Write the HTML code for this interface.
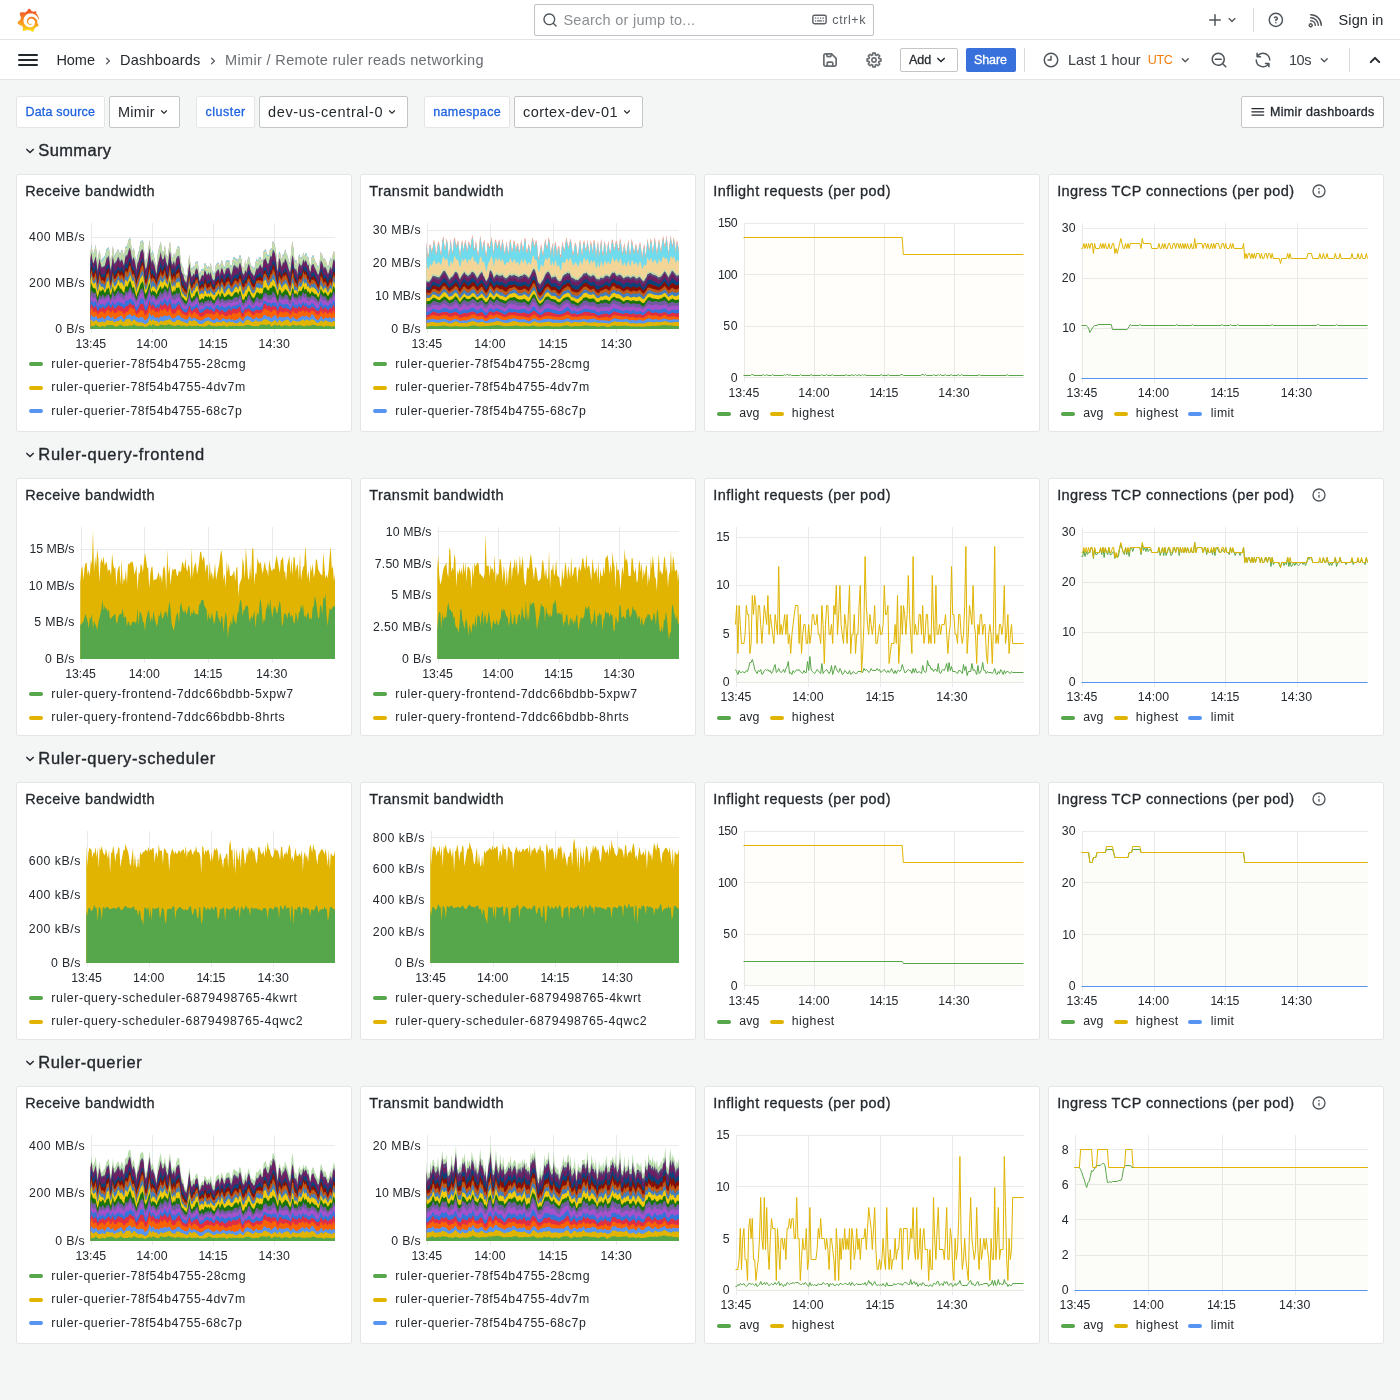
<!DOCTYPE html><html lang="en"><head><meta charset="utf-8"><title>Mimir / Remote ruler reads networking - Dashboards - Grafana</title><style>html,body{margin:0;padding:0}body{width:1400px;height:1400px;background:#f4f5f5;position:relative;overflow:hidden;font-family:"Liberation Sans", Arial, sans-serif;color:#24292e;-webkit-font-smoothing:antialiased}
.abs{position:absolute}svg{position:absolute;overflow:visible}
.panel{position:absolute;width:334px;height:256px;background:#fff;border:1px solid #e4e6e6;border-radius:2px}
.lbl{position:absolute;background:#fff;border:1px solid #e4e6e6;border-radius:2px;box-sizing:border-box}
.sel{position:absolute;background:#fff;border:1px solid #c3c5c8;border-radius:2px;box-sizing:border-box}
.mk{position:absolute;width:14px;height:4px;border-radius:2px}</style></head><body><div id="root" style="position:absolute;left:0;top:0;width:1400px;height:1400px;will-change:transform"><div class="abs" style="left:0;top:0;width:1400px;height:39px;background:#fff;border-bottom:1px solid #e3e4e5"></div><div class="abs" style="left:0;top:40px;width:1400px;height:39px;background:#fff;border-bottom:1px solid #e3e4e5"></div><svg style="left:17px;top:7.5px" width="22.5" height="24.5" viewBox="0 0 351 365" ><defs><linearGradient id="lg" x1="175.5" y1="365" x2="175.5" y2="40" gradientUnits="userSpaceOnUse"><stop offset="0" stop-color="#fde614"/><stop offset="0.35" stop-color="#fba51c"/><stop offset="1" stop-color="#f05a28"/></linearGradient></defs><path d="M342 161.2c-.6-6.1-1.600-13.100-3.600-20.900-2-7.700-5-16.200-9.400-25-4.400-8.800-10.100-17.900-17.500-26.800-2.900-3.500-6.100-6.900-9.500-10.200 5.100-20.300-6.200-37.900-6.200-37.900-19.500-1.200-31.900 6.100-36.500 9.400-.8-.3-1.500-.7-2.300-1-3.300-1.300-6.700-2.600-10.300-3.700-3.500-1.100-7.100-2.100-10.800-3-3.700-.9-7.400-1.600-11.200-2.200-.7-.1-1.300-.2-2-.3-8.500-27.200-32.900-38.600-32.900-38.600-27.300 17.300-32.400 41.500-32.400 41.500s-.1.500-.3 1.400c-1.500.4-3 .9-4.500 1.300-2.100.6-4.200 1.400-6.200 2.200-2.100.8-4.100 1.600-6.200 2.500-4.100 1.800-8.200 3.800-12.200 6-3.900 2.200-7.700 4.600-11.400 7.100-.5-.2-1-.4-1-.4-37.800-14.400-71.300 2.900-71.300 2.900-3.100 40.200 15.100 65.500 18.700 70.100-.9 2.500-1.700 5-2.500 7.500-2.800 9.100-4.900 18.400-6.200 28.100-.2 1.400-.4 2.800-.5 4.200C18.800 192.700 8.500 228 8.500 228c29.100 33.500 63.100 35.600 63.100 35.600 0 0 .1-.1.100-.1 4.300 7.700 9.300 15 14.900 21.900 2.400 2.900 4.800 5.600 7.400 8.300-10.600 30.400 1.500 55.600 1.500 55.600 32.400 1.200 53.700-14.200 58.200-17.700 3.200 1.100 6.500 2.100 9.800 2.900 10 2.600 20.200 4.100 30.400 4.500 2.500.1 5.100.2 7.600.1h1.200l.8 0 1.600 0 1.600-.1 0 .1c15.300 21.800 42.100 24.900 42.100 24.900 19.100-20.100 20.200-40.100 20.200-44.400v-.3c0-.4 0-.6 0-.6 0-.3 0-.6 0-.9 4-2.800 7.800-5.800 11.400-9.100 7.600-6.900 14.300-14.800 19.900-23.300.5-.8 1-1.600 1.500-2.400 21.600 1.200 36.900-13.400 36.900-13.400-3.600-22.500-16.400-33.500-19.100-35.600 0 0-.1-.1-.3-.2-.2-.1-.2-.2-.2-.2-.1-.1-.3-.2-.5-.3.100-1.400.2-2.700.3-4.100.2-2.400.2-4.900.2-7.300v-1.800l0-.9 0-.5c0-.6 0-.4 0-.6l-.1-1.500-.1-2c0-.7-.1-1.300-.2-1.900-.1-.6-.1-1.300-.2-1.900l-.2-1.900-.3-1.900c-.4-2.500-.8-4.900-1.400-7.400-2.300-9.700-6.100-18.900-11-27.200-5-8.300-11.200-15.600-18.300-21.800-7-6.200-14.900-11.200-23.100-14.900-8.300-3.700-16.900-6.100-25.500-7.200-4.300-.6-8.600-.8-12.900-.7l-1.600 0h-.4c-.1 0-.6 0-.5 0l-.7 0-1.600.1c-.6 0-1.200.1-1.700.1-2.200.2-4.400.5-6.500.9-8.600 1.600-16.700 4.700-23.800 9-7.100 4.300-13.300 9.600-18.300 15.600-5 6-8.900 12.700-11.600 19.600-2.700 6.900-4.200 14.100-4.600 21-.1 1.700-.1 3.500-.1 5.200 0 .4 0 .9 0 1.300l.1 1.400c.1.800.1 1.700.2 2.500.3 3.500 1 6.900 1.900 10.100 1.900 6.500 4.900 12.400 8.600 17.400 3.700 5 8.200 9.100 12.900 12.400 4.700 3.200 9.800 5.500 14.800 7 5 1.500 10 2.100 14.700 2.100.6 0 1.200 0 1.700 0 .3 0 .6 0 .9 0 .3 0 .6 0 .9-.1.500 0 1-.1 1.500-.1.100 0 .3 0 .4-.1l.5-.1c.3 0 .6-.1.900-.1.600-.1 1.100-.2 1.700-.3.600-.1 1.100-.2 1.600-.4 1.100-.2 2.100-.6 3.100-.9 2-.7 4-1.500 5.700-2.400 1.800-.9 3.400-2 5-3 .4-.3.900-.6 1.300-1 1.600-1.300 1.900-3.700.6-5.300-1.100-1.400-3.100-1.800-4.700-.9-.4.200-.8.400-1.200.6-1.400.7-2.800 1.300-4.300 1.800-1.500.5-3.100.9-4.700 1.200-.8.100-1.600.2-2.500.3-.4 0-.8.100-1.300.1-.4 0-.9 0-1.200 0-.4 0-.8 0-1.200 0-.5 0-1 0-1.500-.1 0 0-.3 0-.1 0l-.2 0-.3 0c-.2 0-.5 0-.7-.1-.5-.1-.9-.1-1.400-.2-3.700-.5-7.400-1.600-10.900-3.200-3.600-1.600-7-3.800-10.100-6.600-3.100-2.800-5.800-6.100-7.900-9.900-2.100-3.800-3.600-8-4.300-12.400-.3-2.200-.5-4.500-.4-6.700 0-.6.100-1.200.1-1.800 0 .2 0-.1 0-.1l0-.2 0-.5c0-.3.100-.6.100-.9.100-1.200.3-2.400.5-3.600 1.700-9.600 6.500-19 13.900-26.100 1.900-1.800 3.900-3.400 6-4.900 2.100-1.500 4.400-2.800 6.800-3.900 2.400-1.100 4.800-2 7.400-2.700 2.500-.7 5.100-1.100 7.800-1.400 1.300-.1 2.600-.2 4-.2.400 0 .6 0 .9 0l1.100 0 .7 0c.3 0 0 0 .1 0l.3 0 1.100.1c2.900.2 5.700.6 8.500 1.300 5.600 1.200 11.100 3.300 16.200 6.100 10.200 5.700 18.900 14.500 24.200 25.100 2.700 5.300 4.600 11 5.500 16.900.2 1.500.4 3 .5 4.500l.1 1.100.1 1.100c0 .4 0 .8 0 1.100 0 .4 0 .8 0 1.100v1l0 1.100c0 .7-.1 1.900-.1 2.600-.1 1.600-.3 3.300-.5 4.900-.2 1.600-.5 3.200-.8 4.800-.3 1.600-.7 3.200-1.100 4.700-.8 3.100-1.800 6.200-3 9.300-2.400 6-5.600 11.800-9.400 17.100-7.700 10.600-18.200 19.200-30.200 24.700-6 2.700-12.300 4.700-18.800 5.700-3.200.6-6.500.9-9.800 1l-.6 0h-.5l-1.100 0h-1.600-.8c.4 0-.1 0-.1 0l-.3 0c-1.800 0-3.500-.1-5.300-.3-7-.5-13.900-1.800-20.700-3.700-6.700-1.900-13.200-4.600-19.400-7.800-12.300-6.600-23.400-15.600-32-26.500-4.300-5.400-8.100-11.300-11.200-17.400-3.100-6.100-5.600-12.600-7.400-19.100-1.800-6.600-2.900-13.300-3.400-20.100l-.1-1.300 0-.3 0-.3 0-.6 0-1.100 0-.3 0-.4 0-.8 0-1.600 0-.3c0 0 0 .1 0-.1l0-.6c0-.8 0-1.700 0-2.500.1-3.300.4-6.800.8-10.200.4-3.400 1-6.900 1.700-10.300.7-3.400 1.500-6.800 2.500-10.200 1.900-6.700 4.300-13.200 7.100-19.300 5.700-12.200 13.100-23.100 22-31.800 2.200-2.200 4.500-4.200 6.900-6.200 2.400-1.900 4.900-3.700 7.500-5.400 2.500-1.700 5.200-3.200 7.900-4.600 1.300-.7 2.700-1.400 4.100-2 .7-.3 1.400-.6 2.100-.9.700-.3 1.400-.6 2.100-.9 2.800-1.200 5.700-2.200 8.700-3.100.7-.2 1.500-.4 2.200-.7.700-.2 1.500-.4 2.200-.6 1.500-.4 3-.8 4.500-1.100.7-.2 1.500-.3 2.300-.5.800-.2 1.500-.3 2.300-.5.800-.1 1.500-.3 2.300-.4l1.100-.2 1.200-.2c.8-.1 1.500-.2 2.300-.3.900-.1 1.700-.2 2.600-.3.700-.1 1.900-.2 2.600-.3.500-.1 1.100-.1 1.600-.2l1.100-.1.500-.1.600 0c.9-.1 1.700-.1 2.600-.2l1.300-.1c0 0 .5 0 .1 0l.3 0 .6 0c.7 0 1.500-.1 2.200-.1 2.900-.1 5.900-.1 8.800 0 5.800.2 11.500.9 17 1.900 11.100 2.100 21.500 5.600 31 10.300 9.500 4.600 17.900 10.300 25.300 16.500.5.400.9.800 1.400 1.200.4.400.9.800 1.300 1.200.9.800 1.700 1.600 2.600 2.400.9.800 1.700 1.600 2.500 2.400.8.800 1.600 1.600 2.400 2.500 3.100 3.300 6 6.600 8.600 10 5.200 6.700 9.400 13.500 12.700 19.900.2.400.4.800.6 1.200.2.400.4.800.6 1.200.4.800.8 1.600 1.100 2.400.4.800.7 1.500 1.100 2.300.3.800.7 1.500 1 2.300 1.200 3 2.400 5.900 3.300 8.600 1.500 4.400 2.600 8.300 3.500 11.700.3 1.400 1.600 2.300 3 2.100 1.500-.1 2.600-1.300 2.600-2.800.1-3.500-.1-7.800-.5-12.700z" fill="url(#lg)"/></svg><div class="sel" style="left:534px;top:4px;width:340px;height:32px;border-color:#bfc2c6"></div><svg style="left:542.10px;top:12.00px" width="16" height="16" viewBox="0 0 24 24" fill="#50555a"><path d="M21.71,20.29,18,16.61A9,9,0,1,0,16.610,18l3.680,3.680a1,1,0,0,0,1.420,0A1,1,0,0,0,21.710,20.290ZM11,18a7,7,0,1,1,7-7A7,7,0,0,1,11,18Z"/></svg><span id="t0" style="position:absolute;left:563.40px;top:9.00px;height:22px;line-height:22px;font-size:14.5px;white-space:pre;color:#8b8e92;letter-spacing:0.267px;">Search or jump to...</span><svg style="left:811.1px;top:11.399999999999999px" width="17" height="17" viewBox="0 0 24 24" fill="none" stroke="#5d6166" stroke-width="2.0" stroke-linecap="round" stroke-linejoin="round"><rect x="2.6" y="5.900" width="18.800" height="12.200" rx="2.4"/><path d="M6.200 10h.6M9.700 10h.6M13.200 10h.6M16.700 10h1.100M6.200 14h.5M9.300 14h5.400M17.300 14h.5" stroke-width="1.700"/></svg><span id="t1" style="position:absolute;left:832.30px;top:10.50px;height:19px;line-height:19px;font-size:12.5px;white-space:pre;color:#5d6166;letter-spacing:0.596px;">ctrl+k</span><svg style="left:1206.00px;top:11.00px" width="18" height="18" viewBox="0 0 24 24" fill="#50555a"><path d="M19,11H13V5a1,1,0,0,0-2,0v6H5a1,1,0,0,0,0,2h6v6a1,1,0,0,0,2,0V13h6a1,1,0,0,0,0-2Z"/></svg><svg style="left:1224.00px;top:12.00px" width="16" height="16" viewBox="0 0 24 24" fill="#50555a"><path d="M17,9.17a1,1,0,0,0-1.410,0L12,12.710,8.460,9.170a1,1,0,0,0-1.410,0,1,1,0,0,0,0,1.420l4.240,4.240a1,1,0,0,0,1.420,0L17,10.590A1,1,0,0,0,17,9.170Z"/></svg><div class="abs" style="left:1253px;top:8px;width:1px;height:24px;background:#d9dadb"></div><svg style="left:1267.15px;top:11.15px" width="17.7" height="17.7" viewBox="0 0 24 24" fill="#50555a"><path d="M11.29,15.29a1.580,1.580,0,0,0-.12.150.760.760,0,0,0-.09.180.640.640,0,0,0-.06.180,1.360,1.360,0,0,0,0,.2.840.840,0,0,0,.08.380.900.900,0,0,0,.54.540.940.940,0,0,0,.760,0,.900.900,0,0,0,.54-.54A1,1,0,0,0,13,16a1,1,0,0,0-.29-.71A1,1,0,0,0,11.290,15.290ZM12,2A10,10,0,1,0,22,12,10,10,0,0,0,12,2Zm0,18a8,8,0,1,1,8-8A8,8,0,0,1,12,20ZM12,7A3,3,0,0,0,9.400,8.500a1,1,0,1,0,1.730,1A1,1,0,0,1,12,9a1,1,0,0,1,0,2,1,1,0,0,0-1,1v1a1,1,0,0,0,2,0v-.180A3,3,0,0,0,12,7Z"/></svg><svg style="left:1306.70px;top:11.00px" width="18" height="18" viewBox="0 0 24 24" fill="#50555a"><path d="M2.88,16.88a3,3,0,0,0,0,4.240,3,3,0,0,0,4.240,0,3,3,0,0,0-4.240-4.240Zm2.830,2.830a1,1,0,0,1-1.420-1.420,1,1,0,0,1,1.420,0A1,1,0,0,1,5.710,19.710ZM5,12a1,1,0,0,0,0,2,5,5,0,0,1,5,5,1,1,0,0,0,2,0,7,7,0,0,0-7-7ZM5,8a1,1,0,0,0,0,2,9,9,0,0,1,9,9,1,1,0,0,0,2,0,11.080,11.080,0,0,0-3.220-7.780A11.080,11.080,0,0,0,5,8Zm10.610.39A15.110,15.110,0,0,0,5,4,1,1,0,0,0,5,6,13,13,0,0,1,18,19a1,1,0,0,0,2,0A15.110,15.110,0,0,0,15.610,8.390Z"/></svg><span id="t2" style="position:absolute;left:1338.60px;top:9.00px;height:22px;line-height:22px;font-size:14.5px;white-space:pre;color:#24292e;letter-spacing:0.076px;">Sign in</span><svg style="left:16.00px;top:48.00px" width="24" height="24" viewBox="0 0 24 24" fill="#24292e"><path d="M3,8H21a1,1,0,0,0,0-2H3A1,1,0,0,0,3,8Zm18,8H3a1,1,0,0,0,0,2H21a1,1,0,0,0,0-2Zm0-5H3a1,1,0,0,0,0,2H21a1,1,0,0,0,0-2Z"/></svg><span id="t3" style="position:absolute;left:56.40px;top:49.00px;height:22px;line-height:22px;font-size:14.5px;white-space:pre;color:#24292e;letter-spacing:-0.029px;">Home</span><svg style="left:99.90px;top:52.50px" width="16" height="16" viewBox="0 0 24 24" fill="#5d6166"><path d="M14.83,11.29,10.59,7.05a1,1,0,0,0-1.420,0,1,1,0,0,0,0,1.410L12.710,12,9.170,15.540a1,1,0,0,0,0,1.410,1,1,0,0,0,.71.290,1,1,0,0,0,.71-.29l4.240-4.240A1,1,0,0,0,14.830,11.290Z"/></svg><span id="t4" style="position:absolute;left:120.00px;top:49.00px;height:22px;line-height:22px;font-size:14.5px;white-space:pre;color:#24292e;letter-spacing:0.235px;">Dashboards</span><svg style="left:204.90px;top:52.50px" width="16" height="16" viewBox="0 0 24 24" fill="#5d6166"><path d="M14.83,11.29,10.59,7.05a1,1,0,0,0-1.420,0,1,1,0,0,0,0,1.410L12.710,12,9.170,15.540a1,1,0,0,0,0,1.410,1,1,0,0,0,.71.290,1,1,0,0,0,.71-.29l4.240-4.240A1,1,0,0,0,14.830,11.290Z"/></svg><span id="t5" style="position:absolute;left:225.00px;top:49.00px;height:22px;line-height:22px;font-size:14.5px;white-space:pre;color:#6a6e73;letter-spacing:0.353px;">Mimir / Remote ruler reads networking</span><svg style="left:823.1px;top:53.0px" width="14" height="14" viewBox="0 0 14 14" fill="none" stroke="#686c71" stroke-width="1.7" stroke-linecap="round" stroke-linejoin="round"><path d="M2.6 .85H8.6L13.15 5.4V11.4a1.75 1.75 0 0 1-1.75 1.75H2.6a1.75 1.75 0 0 1-1.75-1.75V2.6a1.75 1.75 0 0 1 1.75-1.750z"/><path d="M3.95 .85V2.85a.85 .85 0 0 0 .85 .85H7.2a.85 .85 0 0 0 .85-.85V.85"/><path d="M4.25 13.150V9.95a.85 .85 0 0 1 .85-.85H8.9a.85 .85 0 0 1 .85 .85V13.150"/></svg><svg style="left:866.1px;top:51.9px" width="16" height="16" viewBox="0 0 16 16" fill="none" stroke="#686c71" stroke-width="1.6" stroke-linecap="round" stroke-linejoin="round"><path d="M6.75 1.11 L9.25 1.11 L9.40 2.94 L10.59 3.43 L11.98 2.24 L13.76 4.02 L12.57 5.41 L13.06 6.60 L14.89 6.75 L14.89 9.25 L13.06 9.40 L12.57 10.59 L13.76 11.98 L11.98 13.76 L10.59 12.57 L9.40 13.06 L9.25 14.89 L6.75 14.89 L6.60 13.06 L5.41 12.57 L4.02 13.76 L2.24 11.98 L3.43 10.59 L2.94 9.40 L1.11 9.25 L1.11 6.75 L2.94 6.60 L3.43 5.41 L2.24 4.02 L4.02 2.24 L5.41 3.43 L6.60 2.94Z"/><circle cx="8" cy="8" r="2.15"/></svg><div class="sel" style="left:900px;top:48px;width:58px;height:24px;border-color:#c3c5c8"></div><span id="t6" style="position:absolute;left:908.90px;top:50.50px;height:19px;line-height:19px;font-size:12.5px;white-space:pre;color:#24292e;-webkit-text-stroke:0.3px #24292e;letter-spacing:0.075px;">Add</span><svg style="left:932.00px;top:51.00px" width="18" height="18" viewBox="0 0 24 24" fill="#24292e"><path d="M17,9.17a1,1,0,0,0-1.410,0L12,12.710,8.460,9.170a1,1,0,0,0-1.410,0,1,1,0,0,0,0,1.420l4.240,4.240a1,1,0,0,0,1.420,0L17,10.590A1,1,0,0,0,17,9.170Z"/></svg><div class="abs" style="left:966px;top:48px;width:50px;height:24px;background:#3871dc;border-radius:2px"></div><span id="t7" style="position:absolute;left:974.00px;top:50.50px;height:19px;line-height:19px;font-size:12.5px;white-space:pre;color:#fff;-webkit-text-stroke:0.3px #fff;letter-spacing:-0.090px;">Share</span><div class="abs" style="left:1024px;top:48px;width:1px;height:24px;background:#d9dadb"></div><svg style="left:1041.90px;top:51.00px" width="18" height="18" viewBox="0 0 24 24" fill="#50555a"><path d="M12,2A10,10,0,1,0,22,12,10.011,10.011,0,0,0,12,2Zm0,18a8,8,0,1,1,8-8A8.009,8.009,0,0,1,12,20ZM12,6a1,1,0,0,0-1,1v4H8a1,1,0,0,0,0,2h4a1,1,0,0,0,1-1V7A1,1,0,0,0,12,6Z"/></svg><span id="t8" style="position:absolute;left:1068.00px;top:49.00px;height:22px;line-height:22px;font-size:14.5px;white-space:pre;color:#3b4046;letter-spacing:0.004px;">Last 1 hour</span><span id="t9" style="position:absolute;left:1147.70px;top:50.70px;height:19px;line-height:19px;font-size:12.5px;white-space:pre;color:#f57a0c;letter-spacing:-0.252px;">UTC</span><svg style="left:1177.15px;top:51.75px" width="16.5" height="16.5" viewBox="0 0 24 24" fill="#50555a"><path d="M17,9.17a1,1,0,0,0-1.410,0L12,12.710,8.460,9.170a1,1,0,0,0-1.410,0,1,1,0,0,0,0,1.420l4.240,4.240a1,1,0,0,0,1.420,0L17,10.590A1,1,0,0,0,17,9.170Z"/></svg><svg style="left:1210.00px;top:51.20px" width="18" height="18" viewBox="0 0 24 24" fill="#50555a"><path d="M21.71,20.29,18,16.61A9,9,0,1,0,16.610,18l3.680,3.680a1,1,0,0,0,1.420,0A1,1,0,0,0,21.710,20.290ZM11,18a7,7,0,1,1,7-7A7,7,0,0,1,11,18Zm4-8H7a1,1,0,0,0,0,2h8a1,1,0,0,0,0-2Z"/></svg><svg style="left:1254.00px;top:50.90px" width="18" height="18" viewBox="0 0 24 24" fill="#50555a"><path d="M19.91,15.51H15.38a1,1,0,0,0,0,2h2.4A8,8,0,0,1,4,12a1,1,0,0,0-2,0,10,10,0,0,0,16.880,7.230V21a1,1,0,0,0,2,0V16.500A1,1,0,0,0,19.910,15.510ZM12,2A10,10,0,0,0,5.120,4.770V3a1,1,0,0,0-2,0V7.500a1,1,0,0,0,1,1h4.500a1,1,0,0,0,0-2H6.220A8,8,0,0,1,20,12a1,1,0,0,0,2,0A10,10,0,0,0,12,2Z"/></svg><span id="t10" style="position:absolute;left:1289.00px;top:49.00px;height:22px;line-height:22px;font-size:14.5px;white-space:pre;color:#3b4046;letter-spacing:-0.450px;">10s</span><svg style="left:1315.85px;top:51.75px" width="16.5" height="16.5" viewBox="0 0 24 24" fill="#50555a"><path d="M17,9.17a1,1,0,0,0-1.410,0L12,12.710,8.460,9.170a1,1,0,0,0-1.410,0,1,1,0,0,0,0,1.420l4.240,4.240a1,1,0,0,0,1.420,0L17,10.590A1,1,0,0,0,17,9.170Z"/></svg><div class="abs" style="left:1349px;top:48px;width:1px;height:24px;background:#d9dadb"></div><svg style="left:1363.00px;top:48.20px" width="24" height="24" viewBox="0 0 24 24" fill="#24292e"><path d="M17,13.41,12.71,9.17a1,1,0,0,0-1.420,0L7.050,13.410a1,1,0,0,0,0,1.420,1,1,0,0,0,1.410,0L12,11.290l3.540,3.540a1,1,0,0,0,.7.290,1,1,0,0,0,.71-.29A1,1,0,0,0,17,13.410Z"/></svg><div class="lbl" style="left:16px;top:96px;width:89px;height:32px"></div><span id="t11" style="position:absolute;left:25.40px;top:102.50px;height:19px;line-height:19px;font-size:12.5px;white-space:pre;color:#1f62e0;-webkit-text-stroke:0.3px #1f62e0;letter-spacing:0.219px;">Data source</span><div class="sel" style="left:109px;top:96px;width:71px;height:32px"></div><span id="t12" style="position:absolute;left:117.90px;top:101.00px;height:22px;line-height:22px;font-size:14.5px;white-space:pre;color:#24292e;letter-spacing:0.341px;">Mimir</span><svg style="left:157.10px;top:105.00px" width="14" height="14" viewBox="0 0 24 24" fill="#24292e"><path d="M17,9.17a1,1,0,0,0-1.410,0L12,12.710,8.460,9.170a1,1,0,0,0-1.410,0,1,1,0,0,0,0,1.420l4.240,4.240a1,1,0,0,0,1.420,0L17,10.590A1,1,0,0,0,17,9.170Z"/></svg><div class="lbl" style="left:196px;top:96px;width:59px;height:32px"></div><span id="t13" style="position:absolute;left:205.50px;top:102.50px;height:19px;line-height:19px;font-size:12.5px;white-space:pre;color:#1f62e0;-webkit-text-stroke:0.3px #1f62e0;letter-spacing:0.487px;">cluster</span><div class="sel" style="left:259px;top:96px;width:149px;height:32px"></div><span id="t14" style="position:absolute;left:268.00px;top:101.00px;height:22px;line-height:22px;font-size:14.5px;white-space:pre;color:#24292e;letter-spacing:0.649px;">dev-us-central-0</span><svg style="left:384.90px;top:105.00px" width="14" height="14" viewBox="0 0 24 24" fill="#24292e"><path d="M17,9.17a1,1,0,0,0-1.410,0L12,12.710,8.460,9.170a1,1,0,0,0-1.410,0,1,1,0,0,0,0,1.420l4.240,4.240a1,1,0,0,0,1.420,0L17,10.590A1,1,0,0,0,17,9.170Z"/></svg><div class="lbl" style="left:424px;top:96px;width:86px;height:32px"></div><span id="t15" style="position:absolute;left:433.25px;top:102.50px;height:19px;line-height:19px;font-size:12.5px;white-space:pre;color:#1f62e0;-webkit-text-stroke:0.3px #1f62e0;letter-spacing:0.359px;">namespace</span><div class="sel" style="left:514px;top:96px;width:129px;height:32px"></div><span id="t16" style="position:absolute;left:523.00px;top:101.00px;height:22px;line-height:22px;font-size:14.5px;white-space:pre;color:#24292e;letter-spacing:0.487px;">cortex-dev-01</span><svg style="left:620.00px;top:105.00px" width="14" height="14" viewBox="0 0 24 24" fill="#24292e"><path d="M17,9.17a1,1,0,0,0-1.410,0L12,12.710,8.460,9.170a1,1,0,0,0-1.410,0,1,1,0,0,0,0,1.420l4.240,4.240a1,1,0,0,0,1.420,0L17,10.590A1,1,0,0,0,17,9.170Z"/></svg><div class="sel" style="left:1241px;top:96px;width:143px;height:32px"></div><svg style="left:1250.10px;top:104.20px" width="15.6" height="15.6" viewBox="0 0 24 24" fill="#24292e"><path d="M3,8H21a1,1,0,0,0,0-2H3A1,1,0,0,0,3,8Zm18,8H3a1,1,0,0,0,0,2H21a1,1,0,0,0,0-2Zm0-5H3a1,1,0,0,0,0,2H21a1,1,0,0,0,0-2Z"/></svg><span id="t17" style="position:absolute;left:1270.00px;top:102.50px;height:19px;line-height:19px;font-size:12.5px;white-space:pre;color:#24292e;-webkit-text-stroke:0.32px #24292e;letter-spacing:0.330px;">Mimir dashboards</span><svg style="left:20.80px;top:142.40px" width="18" height="18" viewBox="0 0 24 24" fill="#24292e"><path d="M17,9.17a1,1,0,0,0-1.410,0L12,12.710,8.460,9.170a1,1,0,0,0-1.410,0,1,1,0,0,0,0,1.420l4.240,4.240a1,1,0,0,0,1.420,0L17,10.590A1,1,0,0,0,17,9.170Z"/></svg><span id="t18" style="position:absolute;left:38.30px;top:137.90px;height:25px;line-height:25px;font-size:16.5px;white-space:pre;color:#24292e;-webkit-text-stroke:0.35px #24292e;letter-spacing:0.368px;">Summary</span><svg style="left:20.80px;top:446.40px" width="18" height="18" viewBox="0 0 24 24" fill="#24292e"><path d="M17,9.17a1,1,0,0,0-1.410,0L12,12.710,8.460,9.170a1,1,0,0,0-1.410,0,1,1,0,0,0,0,1.420l4.240,4.240a1,1,0,0,0,1.420,0L17,10.590A1,1,0,0,0,17,9.170Z"/></svg><span id="t19" style="position:absolute;left:38.30px;top:441.90px;height:25px;line-height:25px;font-size:16.5px;white-space:pre;color:#24292e;-webkit-text-stroke:0.35px #24292e;letter-spacing:0.724px;">Ruler-query-frontend</span><svg style="left:20.80px;top:750.40px" width="18" height="18" viewBox="0 0 24 24" fill="#24292e"><path d="M17,9.17a1,1,0,0,0-1.410,0L12,12.710,8.460,9.170a1,1,0,0,0-1.410,0,1,1,0,0,0,0,1.420l4.240,4.240a1,1,0,0,0,1.420,0L17,10.590A1,1,0,0,0,17,9.170Z"/></svg><span id="t20" style="position:absolute;left:38.30px;top:745.90px;height:25px;line-height:25px;font-size:16.5px;white-space:pre;color:#24292e;-webkit-text-stroke:0.35px #24292e;letter-spacing:0.688px;">Ruler-query-scheduler</span><svg style="left:20.80px;top:1054.40px" width="18" height="18" viewBox="0 0 24 24" fill="#24292e"><path d="M17,9.17a1,1,0,0,0-1.410,0L12,12.710,8.460,9.170a1,1,0,0,0-1.410,0,1,1,0,0,0,0,1.420l4.240,4.240a1,1,0,0,0,1.420,0L17,10.590A1,1,0,0,0,17,9.170Z"/></svg><span id="t21" style="position:absolute;left:38.30px;top:1049.90px;height:25px;line-height:25px;font-size:16.5px;white-space:pre;color:#24292e;-webkit-text-stroke:0.35px #24292e;letter-spacing:0.600px;">Ruler-querier</span><div class="panel" style="left:16px;top:174px"></div><span id="t22" style="position:absolute;left:25.20px;top:179.60px;height:22px;line-height:22px;font-size:14.5px;white-space:pre;color:#24292e;-webkit-text-stroke:0.3px #24292e;letter-spacing:0.423px;">Receive bandwidth</span><svg style="left:0;top:0" width="1400" height="1400" viewBox="0 0 1400 1400"><g stroke="#e9eaeb" stroke-width="1" fill="none" shape-rendering="crispEdges"><path d="M91.5 223.25V332.90"/><path d="M152.5 223.25V332.90"/><path d="M213.5 223.25V332.90"/><path d="M274.5 223.25V332.90"/><path d="M90.50 328.5H335.00"/><path d="M90.50 282.5H335.00"/><path d="M90.50 237.5H335.00"/></g><g transform="translate(90.5 0) scale(1.01875 0.1)"><path d="M0 2523l1-82 1 86 1 5 1-29 1-56 1 79 1 92 1-80 1-36 1 79 1 27 1-26 1-7 1-16 1-31 1-40 1-7 1-10 1 88 1 66 1-68 1-99 1 102 1-8 1-23 1-15 1-23 1 23 1 42 1-47 1-14 1 35 1 39 1-90 1-22 1 12 1-62 1-20 1-5 1 79 1 65 1-47 1 28 1 68 1 51 1-74 1-22 1-43 1-68 1-8 1-11 1 28 1 121 1 64 1-17 1-53 1-68 1-76 1 104 1 37 1-38 1 56 1 38 1 46 1 28 1-125 1-53 1-39 1-38 1 78 1 35 1-13 1-63 1 75 1 35 1 6 1-94 1-59 1 102 1 58 1-7 1-38 1 61 1-87 1-19 1-27 1 5 1 87 1 81 1 31 1 17 1 59 1 11 1 23 1-44 1-88 1-94 1 92 1 46 1 0 1-30 1 25 1-53 1-8 1-7 1 68 1 56 1-13 1-31 1-3 1 12 1-71 1 9 1 25 1 13 1-19 1 24 1-53 1 57 1 39 1 15 1-17 1-70 1-15 1-9 1-3 1 66 1-63 1-29 1 41 1 36 1-17 1-46 1-12 1 7 1-8 1 45 1 18 1-19 1-66 1-10 1 12 1 13 1-5 1 28 1-58 1-7 1 36 1 81 1 16 1-22 1-61 1 57 1-49 1-46 1 18 1 62 1 20 1 4 1 11 1 1 1-52 1-43 1 26 1-21 1-20 1-1 1 42 1-5 1-94 1-8 1-12 1 48 1 10 1 0 1-48 1-14 1-4 1-75 1 22 1 21 1 66 1 83 1 48 1-129 1 6 1 54 1 11 1-55 1 20 1-65 1 37 1 22 1 34 1 39 1 5 1-108 1-108 1 56 1 121 1 23 1-17 1 81 1-96 1-42 1 41 1-7 1-3 1-43 1 37 1-29 1 1 1 39 1 0 1 67 1 26 1-90 1-20 1-4 1 50 1 16 1 19 1 22 1 2 1-43 1-99 1 21 1 28 1 29 1-14 1 25 1 29 1 37 1-30 1-42 1-28 1 42 1-81 1-28 1 49V3289H0Z" fill="#F29191"/><path d="M0 2524l1-83 1 86 1 6 1-29 1-56 1 78 1 93 1-80 1-36 1 79 1 27 1-26 1-8 1-15 1-31 1-40 1-8 1-10 1 89 1 66 1-69 1-98 1 101 1-7 1-23 1-15 1-23 1 23 1 42 1-47 1-14 1 35 1 38 1-89 1-22 1 12 1-63 1-19 1-5 1 79 1 64 1-46 1 27 1 68 1 52 1-74 1-22 1-43 1-68 1-8 1-12 1 28 1 122 1 64 1-17 1-53 1-68 1-77 1 105 1 36 1-38 1 57 1 38 1 46 1 28 1-126 1-52 1-39 1-38 1 78 1 35 1-13 1-64 1 76 1 35 1 6 1-94 1-60 1 103 1 58 1-7 1-38 1 60 1-87 1-19 1-26 1 4 1 88 1 81 1 31 1 17 1 59 1 11 1 23 1-45 1-87 1-95 1 93 1 46 1 0 1-30 1 25 1-53 1-8 1-7 1 68 1 56 1-13 1-31 1-3 1 12 1-71 1 8 1 26 1 13 1-19 1 24 1-53 1 56 1 40 1 15 1-17 1-70 1-15 1-10 1-3 1 67 1-63 1-29 1 40 1 37 1-18 1-46 1-11 1 7 1-9 1 45 1 19 1-19 1-66 1-10 1 11 1 14 1-6 1 29 1-59 1-6 1 36 1 81 1 16 1-23 1-61 1 57 1-48 1-46 1 18 1 61 1 21 1 4 1 11 1 1 1-52 1-43 1 26 1-21 1-20 1-1 1 42 1-5 1-95 1-7 1-12 1 48 1 10 1 0 1-48 1-15 1-3 1-75 1 22 1 21 1 66 1 83 1 48 1-129 1 6 1 54 1 10 1-55 1 21 1-65 1 36 1 23 1 34 1 39 1 5 1-108 1-109 1 57 1 120 1 24 1-17 1 81 1-97 1-41 1 41 1-8 1-3 1-43 1 38 1-29 1 1 1 39 1 0 1 67 1 26 1-90 1-20 1-4 1 50 1 16 1 19 1 22 1 2 1-44 1-98 1 21 1 28 1 29 1-14 1 25 1 29 1 37 1-30 1-43 1-27 1 41 1-80 1-28 1 49V3289H0Z" fill="#F9BA8F"/><path d="M0 2525l1-83 1 86 1 5 1-29 1-55 1 78 1 93 1-81 1-36 1 79 1 27 1-26 1-7 1-15 1-32 1-40 1-7 1-10 1 89 1 66 1-69 1-98 1 101 1-8 1-22 1-16 1-22 1 22 1 43 1-47 1-14 1 35 1 38 1-89 1-22 1 12 1-63 1-19 1-6 1 80 1 64 1-47 1 28 1 68 1 51 1-73 1-22 1-44 1-68 1-7 1-12 1 28 1 121 1 65 1-18 1-53 1-67 1-77 1 104 1 37 1-38 1 56 1 38 1 47 1 28 1-126 1-52 1-40 1-38 1 79 1 34 1-12 1-64 1 76 1 35 1 5 1-94 1-59 1 103 1 58 1-7 1-38 1 60 1-87 1-19 1-26 1 4 1 88 1 81 1 31 1 16 1 59 1 11 1 24 1-45 1-88 1-94 1 93 1 46 1-1 1-29 1 25 1-53 1-9 1-7 1 69 1 56 1-14 1-30 1-3 1 11 1-71 1 9 1 26 1 13 1-19 1 24 1-53 1 56 1 40 1 14 1-17 1-70 1-15 1-9 1-3 1 67 1-64 1-28 1 40 1 36 1-17 1-46 1-11 1 6 1-8 1 45 1 18 1-19 1-65 1-10 1 11 1 14 1-6 1 29 1-59 1-7 1 36 1 81 1 17 1-23 1-61 1 57 1-48 1-46 1 18 1 61 1 21 1 4 1 10 1 2 1-52 1-44 1 27 1-22 1-19 1-1 1 42 1-5 1-95 1-7 1-12 1 47 1 11 1 0 1-48 1-15 1-4 1-74 1 21 1 22 1 65 1 83 1 48 1-129 1 6 1 54 1 11 1-55 1 21 1-65 1 36 1 23 1 34 1 39 1 5 1-108 1-109 1 57 1 120 1 23 1-16 1 81 1-97 1-41 1 41 1-8 1-3 1-43 1 38 1-30 1 2 1 38 1 0 1 68 1 25 1-90 1-19 1-5 1 51 1 15 1 20 1 21 1 3 1-44 1-98 1 20 1 29 1 29 1-14 1 25 1 29 1 36 1-29 1-43 1-27 1 41 1-80 1-28 1 48V3289H0Z" fill="#70DBED"/><path d="M0 2538l1-79 1 87 1 0 1-26 1-55 1 79 1 90 1-76 1-42 1 85 1 23 1-10 1-23 1-9 1-34 1-33 1-13 1-18 1 92 1 67 1-73 1-93 1 97 1-6 1-23 1-17 1-23 1 26 1 40 1-40 1-18 1 33 1 39 1-93 1-18 1 12 1-63 1-25 1 3 1 69 1 70 1-48 1 30 1 68 1 56 1-74 1-20 1-44 1-69 1-8 1-15 1 30 1 122 1 52 1-6 1-58 1-64 1-76 1 104 1 40 1-32 1 50 1 34 1 45 1 22 1-118 1-52 1-38 1-45 1 81 1 36 1-11 1-64 1 74 1 34 1 5 1-95 1-55 1 103 1 55 1-12 1-24 1 50 1-87 1-23 1-18 1 7 1 89 1 80 1 28 1 14 1 58 1 16 1 18 1-46 1-83 1-94 1 92 1 48 1-2 1-31 1 25 1-54 1-9 1 1 1 60 1 58 1-11 1-30 1-7 1 14 1-72 1 12 1 24 1 10 1-18 1 26 1-57 1 59 1 43 1 7 1-8 1-76 1-15 1-10 1 1 1 69 1-72 1-27 1 44 1 39 1-14 1-46 1-14 1 5 1-10 1 37 1 29 1-16 1-66 1-15 1 10 1 15 1-8 1 31 1-61 1-2 1 33 1 72 1 17 1-23 1-59 1 67 1-52 1-50 1 26 1 57 1 16 1 6 1 18 1-6 1-41 1-45 1 14 1-12 1-24 1 3 1 42 1-10 1-95 1-7 1-8 1 47 1 14 1-6 1-50 1-18 1 4 1-80 1 24 1 23 1 64 1 82 1 51 1-125 1 3 1 50 1 8 1-49 1 27 1-65 1 28 1 23 1 31 1 46 1 5 1-107 1-113 1 60 1 116 1 31 1-17 1 73 1-93 1-39 1 33 1 0 1-13 1-39 1 37 1-24 1 6 1 36 1-8 1 70 1 24 1-85 1-22 1-5 1 46 1 14 1 24 1 25 1 2 1-44 1-103 1 20 1 31 1 31 1-18 1 19 1 37 1 39 1-30 1-40 1-25 1 34 1-80 1-32 1 50V3289H0Z" fill="#F4D598"/><path d="M0 2548l1-78 1 87 1 1 1-25 1-54 1 78 1 89 1-79 1-38 1 85 1 25 1-15 1-21 1-10 1-35 1-34 1-10 1-18 1 95 1 67 1-70 1-96 1 98 1-6 1-23 1-18 1-22 1 22 1 41 1-40 1-17 1 33 1 39 1-96 1-17 1 13 1-62 1-25 1 3 1 71 1 67 1-48 1 31 1 64 1 58 1-75 1-21 1-44 1-67 1-9 1-14 1 29 1 123 1 56 1-11 1-54 1-64 1-78 1 103 1 40 1-36 1 55 1 35 1 46 1 22 1-121 1-51 1-39 1-42 1 79 1 34 1-12 1-63 1 77 1 33 1 7 1-97 1-55 1 104 1 56 1-13 1-25 1 53 1-84 1-26 1-23 1 6 1 88 1 81 1 31 1 15 1 58 1 13 1 23 1-44 1-85 1-95 1 91 1 49 1-3 1-31 1 27 1-53 1-13 1 3 1 59 1 59 1-12 1-30 1-7 1 13 1-68 1 12 1 25 1 10 1-17 1 23 1-57 1 59 1 39 1 9 1-10 1-75 1-13 1-12 1-1 1 70 1-69 1-27 1 42 1 38 1-14 1-45 1-14 1 0 1-6 1 40 1 27 1-23 1-62 1-14 1 11 1 14 1-5 1 30 1-63 1-2 1 36 1 72 1 20 1-21 1-61 1 64 1-51 1-50 1 28 1 57 1 15 1 3 1 16 1-3 1-43 1-43 1 15 1-18 1-20 1 5 1 40 1-5 1-94 1-10 1-14 1 50 1 12 1-2 1-48 1-17 1 1 1-76 1 20 1 21 1 67 1 83 1 50 1-127 1 4 1 52 1 9 1-51 1 21 1-64 1 32 1 22 1 31 1 44 1 7 1-107 1-114 1 61 1 115 1 29 1-16 1 76 1-95 1-41 1 37 1 0 1-11 1-41 1 39 1-28 1 7 1 34 1-6 1 71 1 21 1-84 1-22 1-2 1 46 1 17 1 24 1 22 1-1 1-44 1-100 1 21 1 28 1 36 1-18 1 21 1 30 1 35 1-27 1-37 1-25 1 34 1-79 1-33 1 51V3289H0Z" fill="#B7DBAB"/><path d="M0 2582l1-57 1 91 1 16 1-31 1-42 1 68 1 82 1-74 1-53 1 63 1 27 1-5 1-5 1-5 1-36 1-49 1 4 1-24 1 100 1 52 1-68 1-79 1 82 1-12 1-13 1-15 1-35 1 13 1 44 1-26 1-1 1 37 1 26 1-85 1-22 1 8 1-42 1-34 1 3 1 59 1 60 1-34 1 18 1 45 1 67 1-67 1-21 1-38 1-56 1-16 1-11 1 26 1 120 1 53 1-16 1-52 1-71 1-74 1 105 1 40 1-29 1 38 1 22 1 54 1 32 1-95 1-42 1-39 1-47 1 63 1 17 1-11 1-51 1 74 1 32 1 23 1-98 1-62 1 91 1 58 1-23 1-21 1 63 1-84 1-18 1-11 1 2 1 69 1 73 1 34 1 5 1 55 1 15 1 18 1-44 1-73 1-88 1 89 1 51 1 1 1-33 1 23 1-54 1-18 1 7 1 63 1 57 1-21 1-32 1-9 1 13 1-63 1 17 1 31 1 0 1-26 1 33 1-37 1 51 1 29 1 7 1-10 1-74 1-8 1-16 1-3 1 69 1-62 1-25 1 30 1 40 1-14 1-43 1-5 1-1 1-6 1 39 1 36 1-26 1-54 1-19 1 3 1 18 1-8 1 30 1-55 1-11 1 34 1 64 1 20 1-4 1-48 1 34 1-47 1-42 1 11 1 51 1 24 1 10 1 19 1 0 1-36 1-39 1 12 1-14 1-23 1-12 1 33 1 1 1-80 1-2 1-17 1 43 1 20 1-11 1-49 1-27 1 16 1-75 1 14 1 19 1 71 1 83 1 31 1-125 1 0 1 57 1 24 1-53 1 19 1-54 1 24 1 24 1 39 1 35 1 24 1-82 1-95 1 27 1 98 1 21 1-10 1 67 1-79 1-46 1 26 1 3 1-20 1-48 1 36 1-23 1 11 1 38 1-6 1 61 1 16 1-68 1-11 1-1 1 35 1 16 1 23 1 26 1 5 1-44 1-96 1 8 1 26 1 39 1-11 1 9 1 26 1 36 1-17 1-40 1-16 1 37 1-88 1-29 1 39V3289H0Z" fill="#584477"/><path d="M0 2601l1-60 1 86 1 20 1-28 1-43 1 71 1 83 1-75 1-55 1 64 1 26 1-8 1-4 1-4 1-35 1-45 1 4 1-20 1 97 1 51 1-70 1-80 1 80 1-9 1-9 1-12 1-35 1 10 1 37 1-27 1 0 1 36 1 27 1-81 1-22 1 8 1-39 1-34 1-1 1 58 1 60 1-30 1 21 1 43 1 67 1-64 1-24 1-35 1-58 1-20 1-8 1 22 1 116 1 55 1-14 1-50 1-73 1-71 1 108 1 42 1-29 1 37 1 20 1 50 1 31 1-96 1-44 1-38 1-44 1 63 1 20 1-10 1-50 1 68 1 33 1 22 1-99 1-65 1 90 1 58 1-22 1-21 1 65 1-77 1-18 1-15 1-1 1 70 1 74 1 34 1 8 1 54 1 12 1 14 1-44 1-71 1-86 1 87 1 51 1 0 1-34 1 20 1-53 1-16 1 8 1 63 1 55 1-21 1-33 1-10 1 15 1-59 1 15 1 29 1 0 1-22 1 34 1-37 1 48 1 27 1 8 1-11 1-73 1-5 1-16 1-6 1 68 1-60 1-30 1 28 1 44 1-10 1-39 1-2 1-2 1-9 1 38 1 36 1-22 1-47 1-16 1 0 1 12 1-11 1 31 1-50 1-14 1 32 1 58 1 18 1-4 1-45 1 32 1-45 1-38 1 10 1 47 1 22 1 11 1 19 1-2 1-34 1-34 1 10 1-16 1-20 1-11 1 30 1-2 1-82 1-2 1-12 1 43 1 19 1-7 1-46 1-24 1 18 1-72 1 8 1 14 1 67 1 83 1 33 1-121 1 0 1 53 1 21 1-52 1 21 1-50 1 27 1 27 1 35 1 34 1 24 1-81 1-93 1 25 1 94 1 22 1-7 1 61 1-79 1-45 1 28 1 5 1-20 1-50 1 30 1-25 1 16 1 39 1-8 1 61 1 13 1-70 1-8 1 1 1 36 1 16 1 24 1 29 1 5 1-44 1-94 1 9 1 30 1 35 1-13 1 8 1 21 1 34 1-16 1-38 1-13 1 37 1-87 1-32 1 38V3289H0Z" fill="#6D1F62"/><path d="M0 2653l1-57 1 78 1 16 1-20 1-35 1 67 1 82 1-62 1-50 1 57 1 18 1-10 1 2 1 4 1-41 1-53 1 6 1-17 1 98 1 50 1-71 1-74 1 81 1-10 1-13 1-6 1-29 1 8 1 30 1-30 1-2 1 24 1 24 1-77 1-14 1 22 1-33 1-39 1-1 1 48 1 51 1-13 1 27 1 36 1 59 1-57 1-22 1-31 1-49 1-26 1-17 1 27 1 102 1 51 1-7 1-46 1-67 1-62 1 97 1 34 1-26 1 31 1 16 1 36 1 29 1-80 1-33 1-27 1-49 1 53 1 15 1-18 1-47 1 72 1 32 1 19 1-99 1-64 1 86 1 50 1-16 1-13 1 58 1-63 1-9 1-16 1-10 1 56 1 74 1 42 1 8 1 36 1 5 1 23 1-34 1-69 1-75 1 83 1 41 1-3 1-31 1 13 1-50 1-17 1-1 1 52 1 50 1-13 1-17 1-4 1 19 1-53 1 7 1 31 1 4 1-26 1 24 1-35 1 43 1 20 1 10 1-3 1-67 1-4 1-11 1-2 1 60 1-61 1-23 1 28 1 34 1-14 1-41 1-8 1-3 1-1 1 40 1 35 1-15 1-30 1-8 1-10 1 0 1-12 1 26 1-41 1-10 1 31 1 51 1 11 1-6 1-41 1 26 1-43 1-37 1 14 1 44 1 22 1 15 1 10 1-6 1-26 1-30 1 7 1-14 1-10 1-4 1 25 1 0 1-67 1-2 1-13 1 34 1 25 1 2 1-45 1-33 1 12 1-61 1 7 1 19 1 61 1 71 1 26 1-108 1 1 1 44 1 25 1-44 1 13 1-41 1 20 1 19 1 36 1 25 1 20 1-72 1-84 1 20 1 74 1 25 1 5 1 54 1-69 1-41 1 22 1 5 1-28 1-52 1 28 1-21 1 14 1 39 1 1 1 56 1 9 1-56 1 1 1-3 1 20 1 11 1 31 1 30 1 8 1-44 1-92 1 3 1 26 1 45 1-16 1 8 1 24 1 18 1-29 1-30 1-2 1 37 1-77 1-30 1 40V3289H0Z" fill="#0A437C"/><path d="M0 2708l1-52 1 67 1 18 1-17 1-39 1 63 1 74 1-66 1-53 1 52 1 18 1-5 1 6 1 10 1-38 1-54 1 2 1-18 1 98 1 53 1-67 1-71 1 76 1-10 1-17 1-9 1-31 1 7 1 30 1-30 1 0 1 24 1 29 1-69 1-15 1 25 1-34 1-45 1 1 1 46 1 44 1-13 1 24 1 38 1 61 1-58 1-26 1-30 1-43 1-32 1-22 1 26 1 103 1 55 1-2 1-45 1-70 1-57 1 98 1 35 1-22 1 28 1 7 1 27 1 30 1-65 1-27 1-22 1-39 1 42 1 3 1-22 1-41 1 69 1 27 1 18 1-91 1-54 1 87 1 48 1-19 1-19 1 53 1-57 1-11 1-18 1-5 1 60 1 72 1 37 1 0 1 31 1 8 1 25 1-31 1-72 1-70 1 82 1 32 1-3 1-31 1 5 1-45 1-10 1 3 1 48 1 48 1-10 1-16 1-2 1 14 1-63 1 2 1 37 1 13 1-18 1 18 1-37 1 41 1 21 1 7 1-1 1-59 1-7 1-14 1-5 1 58 1-52 1-21 1 23 1 34 1-11 1-35 1-7 1-9 1-5 1 41 1 35 1-10 1-27 1-17 1-12 1 13 1-3 1 16 1-49 1-12 1 31 1 54 1 16 1-3 1-40 1 19 1-44 1-31 1 9 1 33 1 26 1 19 1 10 1-3 1-26 1-33 1 2 1-7 1-5 1-6 1 21 1-4 1-68 1 0 1-6 1 36 1 25 1 9 1-35 1-35 1-6 1-59 1 15 1 25 1 55 1 59 1 24 1-96 1 0 1 34 1 15 1-46 1 17 1-32 1 17 1 14 1 36 1 34 1 23 1-65 1-84 1 11 1 73 1 26 1 0 1 49 1-59 1-37 1 13 1-2 1-27 1-46 1 38 1-15 1 12 1 38 1-6 1 48 1 9 1-46 1 5 1-8 1 18 1 11 1 22 1 27 1 9 1-41 1-86 1 7 1 32 1 38 1-21 1 11 1 34 1 19 1-33 1-28 1-2 1 31 1-72 1-29 1 33V3289H0Z" fill="#890F02"/><path d="M0 2739l1-43 1 64 1 20 1-20 1-37 1 61 1 64 1-61 1-50 1 51 1 20 1-9 1 10 1 15 1-33 1-49 1-2 1-17 1 87 1 42 1-59 1-69 1 67 1-1 1-16 1-15 1-33 1 11 1 33 1-26 1 2 1 23 1 20 1-72 1-11 1 27 1-30 1-42 1-7 1 45 1 50 1-13 1 13 1 35 1 63 1-49 1-20 1-30 1-50 1-33 1-18 1 29 1 102 1 54 1-4 1-36 1-62 1-50 1 94 1 23 1-28 1 18 1 5 1 29 1 28 1-54 1-21 1-23 1-37 1 40 1 1 1-23 1-34 1 66 1 18 1 16 1-81 1-47 1 82 1 50 1-21 1-26 1 52 1-61 1-9 1-8 1-7 1 54 1 70 1 35 1 0 1 29 1 3 1 20 1-31 1-72 1-68 1 81 1 36 1-3 1-36 1 6 1-36 1-15 1-5 1 52 1 52 1-7 1-15 1-1 1 17 1-55 1 1 1 38 1 15 1-20 1 8 1-36 1 35 1 18 1 4 1-1 1-43 1-2 1-17 1-14 1 55 1-42 1-22 1 21 1 35 1-6 1-31 1-9 1-8 1-2 1 31 1 23 1-9 1-21 1-16 1-17 1 9 1 6 1 20 1-46 1-5 1 29 1 47 1 14 1-7 1-37 1 13 1-45 1-19 1 13 1 27 1 25 1 17 1 12 1-3 1-33 1-32 1 2 1-7 1 6 1-8 1 15 1-6 1-66 1-1 1-9 1 29 1 21 1 17 1-29 1-32 1 3 1-50 1 14 1 24 1 51 1 50 1 21 1-88 1 6 1 27 1 0 1-45 1 23 1-28 1 10 1 19 1 42 1 32 1 18 1-62 1-81 1 11 1 71 1 22 1 0 1 43 1-56 1-30 1 13 1-3 1-30 1-50 1 35 1-12 1 16 1 42 1-4 1 34 1 3 1-36 1 9 1-10 1 17 1 11 1 22 1 29 1 13 1-42 1-82 1 9 1 31 1 35 1-22 1 9 1 33 1 18 1-27 1-24 1-7 1 27 1-71 1-27 1 37V3289H0Z" fill="#C15C17"/><path d="M0 2777l1-46 1 62 1 21 1-12 1-32 1 52 1 60 1-52 1-48 1 43 1 13 1-8 1 15 1 13 1-35 1-45 1 1 1-14 1 77 1 33 1-56 1-66 1 67 1-1 1-16 1-12 1-33 1 12 1 37 1-19 1 2 1 21 1 21 1-71 1-11 1 31 1-21 1-33 1-17 1 28 1 40 1-11 1 20 1 47 1 59 1-54 1-21 1-31 1-44 1-22 1-19 1 23 1 96 1 43 1-9 1-29 1-55 1-49 1 83 1 24 1-23 1 19 1 5 1 26 1 22 1-54 1-14 1-23 1-37 1 38 1-2 1-17 1-29 1 58 1 14 1 15 1-64 1-44 1 75 1 50 1-17 1-23 1 39 1-54 1-3 1-9 1-13 1 44 1 67 1 39 1 4 1 23 1 1 1 17 1-32 1-68 1-62 1 76 1 35 1 1 1-29 1 1 1-31 1-14 1-9 1 47 1 46 1-11 1-9 1 6 1 10 1-51 1 5 1 36 1 6 1-18 1 15 1-35 1 26 1 15 1 10 1 0 1-39 1 1 1-20 1-13 1 49 1-48 1-25 1 28 1 36 1-3 1-27 1-10 1-11 1-7 1 26 1 22 1 0 1-12 1-17 1-18 1 5 1 11 1 25 1-46 1-19 1 31 1 53 1 12 1-11 1-38 1 14 1-40 1-19 1 10 1 23 1 27 1 23 1 7 1-11 1-33 1-33 1 6 1-1 1 4 1-7 1 21 1-3 1-67 1-8 1-11 1 34 1 22 1 11 1-26 1-21 1-1 1-47 1 14 1 17 1 46 1 45 1 18 1-80 1 9 1 31 1 13 1-40 1 13 1-28 1 9 1 15 1 36 1 29 1 20 1-45 1-77 1 10 1 66 1 16 1-5 1 31 1-58 1-26 1 18 1-2 1-29 1-38 1 37 1-18 1 9 1 39 1 0 1 30 1 3 1-28 1 11 1-12 1 8 1 7 1 22 1 26 1 8 1-36 1-67 1 19 1 31 1 22 1-30 1 7 1 32 1 20 1-24 1-23 1-7 1 19 1-75 1-23 1 45V3289H0Z" fill="#447EBC"/><path d="M0 2808l1-49 1 62 1 16 1-8 1-12 1 52 1 50 1-45 1-43 1 31 1 8 1-3 1 15 1 21 1-33 1-53 1-3 1-15 1 73 1 35 1-46 1-60 1 59 1 6 1-16 1-16 1-36 1 4 1 34 1-15 1 7 1 20 1 21 1-61 1-10 1 25 1-20 1-31 1-21 1 24 1 37 1-10 1 24 1 45 1 52 1-47 1-21 1-34 1-38 1-15 1-20 1 24 1 94 1 37 1-17 1-31 1-47 1-34 1 90 1 24 1-30 1 9 1 3 1 23 1 15 1-44 1-11 1-25 1-33 1 33 1-3 1-16 1-28 1 47 1 9 1 12 1-66 1-36 1 76 1 50 1-12 1-17 1 35 1-53 1-2 1-5 1-9 1 39 1 57 1 31 1 1 1 22 1 3 1 15 1-26 1-60 1-63 1 67 1 37 1 4 1-32 1 3 1-29 1-18 1-5 1 46 1 48 1-9 1-12 1 7 1 10 1-44 1 5 1 27 1 7 1-12 1 15 1-33 1 23 1 11 1 6 1 2 1-34 1 2 1-20 1-15 1 45 1-44 1-23 1 31 1 39 1 1 1-20 1-14 1-15 1-8 1 26 1 20 1 2 1-11 1-20 1-23 1-2 1 6 1 23 1-36 1-13 1 30 1 52 1 12 1-9 1-39 1 7 1-33 1-17 1 12 1 27 1 25 1 14 1 4 1-11 1-27 1-28 1 6 1 5 1 7 1-14 1 13 1-4 1-71 1-7 1-8 1 35 1 24 1 8 1-24 1-23 1 4 1-34 1 15 1 16 1 37 1 39 1 19 1-79 1 0 1 29 1 22 1-33 1 7 1-31 1 12 1 9 1 27 1 30 1 19 1-34 1-63 1 12 1 60 1 5 1-8 1 34 1-52 1-25 1 18 1-5 1-29 1-33 1 37 1-17 1 9 1 36 1-10 1 18 1 8 1-20 1 12 1-5 1 12 1 6 1 14 1 26 1 7 1-36 1-55 1 21 1 22 1 13 1-26 1 5 1 25 1 21 1-20 1-24 1-1 1 21 1-70 1-23 1 39V3289H0Z" fill="#F2CC0C"/><path d="M0 2884l1-55 1 41 1 12 1 0 1 6 1 50 1 37 1-38 1-43 1 21 1-7 1-18 1 16 1 27 1-18 1-30 1 4 1-16 1 55 1 24 1-43 1-52 1 57 1 0 1-21 1-12 1-30 1 7 1 33 1-8 1 20 1 18 1 10 1-58 1-18 1 17 1-23 1-30 1-14 1 33 1 41 1-12 1 20 1 40 1 43 1-39 1-18 1-35 1-34 1-15 1-17 1 24 1 76 1 28 1-18 1-26 1-35 1-37 1 78 1 23 1-25 1 15 1-3 1 16 1 19 1-37 1-12 1-22 1-16 1 33 1-11 1-12 1-23 1 24 1 5 1 17 1-58 1-33 1 67 1 54 1-2 1-23 1 21 1-44 1 6 1-3 1-7 1 36 1 46 1 23 1 0 1 17 1 6 1 17 1-25 1-52 1-61 1 60 1 41 1 5 1-24 1 4 1-31 1-17 1-6 1 43 1 50 1-5 1-13 1-2 1 11 1-30 1-5 1 9 1 2 1-9 1 20 1-25 1 22 1 15 1 9 1 0 1-34 1-2 1-21 1-13 1 46 1-27 1-24 1 14 1 27 1 4 1-10 1-9 1-7 1-3 1 13 1 8 1 0 1-12 1-19 1-9 1-3 1 1 1 28 1-34 1-8 1 38 1 46 1 9 1-8 1-34 1 10 1-30 1-26 1-1 1 25 1 24 1 13 1 9 1-8 1-25 1-28 1 0 1 5 1 12 1-10 1 9 1-8 1-56 1 4 1-8 1 19 1 14 1 3 1-22 1-8 1 2 1-27 1 15 1 5 1 28 1 35 1 26 1-59 1-7 1 21 1 26 1-25 1 0 1-28 1 11 1 8 1 17 1 25 1 19 1-24 1-59 1 0 1 51 1 2 1-10 1 30 1-35 1-18 1 8 1-2 1-24 1-25 1 40 1-14 1 4 1 29 1-8 1 19 1 7 1-30 1 11 1 9 1 13 1-3 1 9 1 23 1 1 1-33 1-54 1 18 1 21 1 14 1-16 1 6 1 17 1 17 1-12 1-19 1-13 1 16 1-60 1-15 1 40V3289H0Z" fill="#19730E"/><path d="M0 2949l1-56 1 32 1 10 1-11 1 7 1 46 1 37 1-31 1-36 1 21 1-4 1-21 1 11 1 22 1-14 1-18 1 6 1-13 1 38 1 17 1-38 1-50 1 52 1 4 1-21 1-11 1-23 1 7 1 26 1-13 1 8 1 12 1 18 1-40 1-11 1 16 1-14 1-24 1-22 1 24 1 41 1-8 1 18 1 32 1 29 1-37 1-15 1-28 1-29 1-5 1-7 1 21 1 65 1 24 1-14 1-29 1-38 1-40 1 71 1 23 1-26 1 14 1 3 1 21 1 11 1-30 1-1 1-28 1-19 1 31 1-9 1-18 1-32 1 25 1 5 1 20 1-46 1-32 1 56 1 46 1-2 1-18 1 22 1-36 1 11 1 4 1-10 1 18 1 30 1 21 1 10 1 21 1 4 1 11 1-21 1-39 1-46 1 47 1 30 1 5 1-21 1 6 1-21 1-16 1-5 1 36 1 38 1-7 1-12 1 3 1 17 1-21 1-3 1-4 1-3 1-6 1 17 1-20 1 16 1 16 1 6 1-4 1-29 1-7 1-18 1-6 1 44 1-17 1-13 1 6 1 10 1 4 1-1 1-4 1-6 1-5 1 9 1 2 1-3 1-8 1-13 1-3 1-3 1-3 1 25 1-34 1-10 1 33 1 41 1 14 1-9 1-31 1 12 1-29 1-23 1-3 1 23 1 25 1 15 1 14 1-12 1-29 1-18 1 3 1 9 1 16 1-11 1 3 1-10 1-48 1 5 1-14 1 13 1 14 1 7 1-9 1 0 1-5 1-34 1 14 1 12 1 24 1 35 1 20 1-58 1-14 1 8 1 26 1-13 1 4 1-25 1 8 1 0 1 14 1 27 1 14 1-26 1-51 1 5 1 42 1-3 1-8 1 23 1-33 1-6 1 14 1-4 1-23 1-20 1 31 1-16 1 10 1 35 1-10 1 7 1 2 1-24 1 10 1-2 1 13 1 6 1 10 1 21 1-1 1-30 1-48 1 14 1 18 1 9 1-14 1 12 1 21 1 17 1-12 1-19 1-12 1 11 1-52 1-7 1 37V3289H0Z" fill="#705DA0"/><path d="M0 2989l1-47 1 31 1 9 1-13 1 4 1 42 1 34 1-30 1-33 1 17 1-7 1-15 1 8 1 11 1-12 1-14 1-2 1-11 1 40 1 16 1-28 1-38 1 48 1 2 1-25 1-11 1-21 1 8 1 27 1-13 1 10 1 11 1 20 1-37 1-23 1 11 1-11 1-20 1-16 1 24 1 38 1-10 1 14 1 29 1 27 1-27 1-8 1-31 1-34 1-2 1-2 1 17 1 53 1 27 1-13 1-24 1-29 1-41 1 61 1 17 1-32 1 16 1 9 1 20 1 8 1-28 1 9 1-20 1-18 1 27 1-13 1-23 1-27 1 28 1 7 1 16 1-43 1-26 1 51 1 37 1 1 1-8 1 22 1-33 1 1 1-2 1-9 1 21 1 27 1 20 1 8 1 13 1 1 1 11 1-17 1-36 1-42 1 42 1 24 1-1 1-16 1 4 1-23 1-10 1-2 1 33 1 37 1-4 1-7 1 5 1 12 1-25 1-6 1-4 1 3 1-2 1 11 1-23 1 13 1 17 1 4 1-6 1-29 1-7 1-9 1 2 1 41 1-15 1-9 1 3 1 4 1 4 1-1 1-4 1-6 1-6 1 10 1 4 1-6 1-9 1-4 1 3 1 0 1-3 1 14 1-36 1-8 1 37 1 38 1 9 1-11 1-25 1 12 1-28 1-16 1 2 1 17 1 22 1 12 1 4 1-14 1-17 1-11 1 3 1 6 1 11 1-9 1-1 1-11 1-45 1 5 1-6 1 14 1 14 1 7 1-7 1-1 1-4 1-27 1 11 1-3 1 10 1 39 1 21 1-50 1-4 1 7 1 14 1-13 1 11 1-19 1 6 1 2 1 12 1 26 1 14 1-27 1-53 1 1 1 32 1 0 1-1 1 22 1-29 1-4 1 15 1-8 1-24 1-14 1 29 1-9 1 8 1 29 1-6 1-2 1-4 1-22 1 11 1 5 1 14 1 2 1 8 1 17 1 1 1-27 1-44 1 14 1 23 1 7 1-15 1 12 1 14 1 10 1-13 1-19 1-1 1 14 1-53 1-14 1 32V3289H0Z" fill="#A352CC"/><path d="M0 3033l1-39 1 28 1 8 1-15 1-5 1 29 1 35 1-17 1-28 1 19 1-1 1-12 1 10 1 13 1-17 1-15 1-5 1-16 1 30 1 16 1-18 1-27 1 42 1-3 1-14 1-2 1-19 1 7 1 16 1-10 1 8 1 9 1 15 1-33 1-23 1 5 1 0 1-8 1-14 1 7 1 23 1-10 1 21 1 33 1 24 1-21 1-11 1-28 1-32 1 0 1-6 1 11 1 49 1 24 1-1 1-22 1-40 1-44 1 55 1 21 1-27 1 17 1 14 1 17 1-1 1-25 1 20 1-27 1-30 1 36 1-8 1-26 1-21 1 31 1 9 1 15 1-33 1-20 1 36 1 30 1 0 1-8 1 21 1-23 1-3 1-12 1-8 1 20 1 29 1 22 1 2 1 7 1 2 1 8 1-14 1-28 1-35 1 34 1 19 1-1 1-14 1 9 1-20 1-11 1-2 1 29 1 32 1 1 1-7 1-3 1 5 1-24 1-4 1-9 1 4 1 4 1 11 1-19 1 14 1 18 1 7 1-8 1-34 1-4 1 5 1 0 1 28 1-18 1-9 1 10 1 10 1 1 1-7 1-2 1-4 1-13 1 13 1 11 1-7 1-7 1 1 1-3 1-3 1-10 1 10 1-24 1 1 1 44 1 28 1-3 1-13 1-19 1 12 1-20 1-10 1-5 1 11 1 21 1 8 1 0 1-9 1-15 1-10 1 12 1 5 1 6 1-13 1-6 1-10 1-40 1 4 1 0 1 16 1 5 1-3 1-3 1 11 1 3 1-20 1 14 1-6 1 2 1 28 1 14 1-47 1-2 1 11 1 14 1-7 1 12 1-14 1 2 1 0 1 6 1 19 1 18 1-16 1-44 1-5 1 29 1 1 1-1 1 15 1-30 1-5 1 20 1-2 1-18 1-9 1 25 1-13 1-2 1 26 1-4 1 2 1-3 1-22 1 9 1 4 1 17 1 15 1 9 1 4 1-9 1-31 1-36 1 20 1 26 1 5 1-18 1 5 1 8 1 12 1-14 1-22 1 2 1 14 1-45 1 0 1 39V3289H0Z" fill="#3274D9"/><path d="M0 3071l1-34 1 23 1 19 1-10 1-13 1 23 1 33 1-10 1-28 1 14 1-9 1-13 1 12 1 15 1-13 1-11 1-6 1-17 1 23 1 12 1-14 1-24 1 42 1 2 1-9 1-6 1-23 1 3 1 12 1-3 1 10 1 6 1 12 1-19 1-11 1 2 1-5 1-19 1-8 1 10 1 14 1-8 1 15 1 31 1 23 1-17 1-11 1-23 1-27 1 4 1-2 1 7 1 40 1 22 1-7 1-20 1-34 1-45 1 48 1 15 1-25 1 17 1 13 1 13 1-2 1-12 1 23 1-28 1-31 1 25 1-2 1-12 1-19 1 25 1 6 1 13 1-26 1-18 1 37 1 29 1 0 1-7 1 15 1-26 1-8 1-16 1-7 1 22 1 22 1 21 1 5 1 8 1 3 1 4 1-8 1-26 1-39 1 28 1 26 1 6 1-22 1 3 1-11 1-3 1-4 1 20 1 27 1 5 1 0 1-9 1-4 1-15 1-1 1-11 1 1 1 4 1 15 1-16 1 8 1 13 1 5 1-5 1-28 1 0 1 11 1 1 1 21 1-11 1-9 1 8 1 11 1 7 1-5 1-7 1-12 1-14 1 13 1 8 1-12 1-14 1 7 1 5 1-1 1-8 1 1 1-20 1 9 1 38 1 24 1-8 1-22 1-19 1 11 1-10 1-2 1-1 1 15 1 12 1 0 1 5 1-5 1-12 1-6 1 5 1 0 1 3 1-5 1 0 1-10 1-39 1-11 1 0 1 21 1 4 1-6 1-1 1 17 1 0 1-21 1 16 1-3 1 2 1 27 1 20 1-37 1-18 1 1 1 19 1-1 1 10 1-12 1 5 1 7 1 1 1 4 1 12 1-5 1-31 1-8 1 21 1-4 1-2 1 17 1-24 1-2 1 15 1-2 1-22 1-11 1 25 1-8 1 1 1 18 1-1 1 7 1-4 1-19 1 7 1 1 1 10 1 15 1 9 1 2 1 1 1-19 1-31 1 11 1 22 1 0 1-21 1 6 1 13 1 15 1-11 1-19 1 2 1 7 1-41 1 6 1 35V3289H0Z" fill="#E02F44"/><path d="M0 3101l1-29 1 27 1 24 1-2 1-14 1 16 1 28 1-13 1-24 1 8 1-6 1-3 1 18 1 7 1-19 1-13 1-4 1-10 1 25 1 14 1-15 1-22 1 30 1 7 1-1 1-7 1-22 1 6 1 9 1-8 1 9 1 14 1 17 1-16 1-14 1 0 1-4 1-26 1-21 1 9 1 15 1-9 1 14 1 29 1 24 1-10 1-8 1-16 1-16 1 4 1 1 1 5 1 34 1 16 1-14 1-18 1-33 1-45 1 45 1 18 1-22 1 8 1 11 1 17 1-4 1-12 1 19 1-26 1-18 1 25 1-5 1-12 1-14 1 24 1 9 1 10 1-23 1-18 1 28 1 27 1 5 1-8 1 6 1-25 1-10 1-9 1-3 1 14 1 18 1 17 1 0 1 6 1 3 1 8 1-2 1-17 1-30 1 18 1 20 1-3 1-23 1 4 1 0 1 12 1 2 1 14 1 14 1 1 1-2 1-4 1 0 1-15 1-7 1-4 1 1 1-1 1 11 1-17 1 7 1 9 1-1 1 0 1-19 1-5 1 8 1 7 1 21 1-6 1-14 1 4 1 12 1 8 1 1 1 0 1-9 1-12 1 12 1 4 1-16 1-13 1 8 1 1 1-2 1-3 1 0 1-18 1 9 1 30 1 18 1-2 1-20 1-26 1 5 1-12 1-2 1-3 1 17 1 14 1 4 1 8 1-3 1-18 1-9 1 8 1-1 1 5 1-4 1-6 1-11 1-26 1 0 1-3 1 15 1 2 1 0 1 8 1 12 1-4 1-21 1 6 1-9 1 6 1 34 1 22 1-28 1-14 1-1 1 11 1-2 1 8 1-15 1-4 1 7 1 7 1 6 1 17 1-3 1-32 1-6 1 22 1 1 1 0 1 10 1-26 1-5 1 9 1-5 1-13 1 1 1 22 1-15 1-3 1 14 1 2 1 7 1-7 1-17 1 4 1 1 1 9 1 15 1 13 1 1 1 1 1-11 1-27 1 2 1 24 1 1 1-22 1 4 1 15 1 7 1-15 1-8 1 11 1 10 1-35 1 7 1 28V3289H0Z" fill="#FA6400"/><path d="M0 3167l1-20 1 16 1 8 1 1 1-12 1 6 1 21 1 1 1-7 1 2 1-10 1-3 1 16 1 9 1-18 1-18 1-2 1-3 1 15 1 13 1-7 1-14 1 29 1 4 1-8 1-6 1-9 1-1 1-9 1-6 1 13 1 13 1 14 1-13 1-18 1-8 1-5 1-9 1-1 1 17 1 7 1-12 1-2 1 10 1 12 1-2 1 11 1-8 1-7 1 7 1-1 1 7 1 19 1 5 1-12 1-10 1-18 1-38 1 25 1 15 1-18 1 10 1 12 1 9 1-4 1-5 1 14 1-12 1-13 1 10 1-4 1-5 1-9 1 12 1-4 1 1 1-7 1 1 1 18 1 14 1-1 1-10 1 7 1-16 1-9 1-4 1-1 1 9 1 13 1 8 1-1 1 12 1 2 1 1 1 0 1-10 1-23 1 6 1 17 1 1 1-17 1 9 1 2 1 7 1 4 1 6 1 5 1 3 1-1 1-7 1-2 1-11 1-5 1-3 1-5 1-5 1 14 1 2 1 12 1 7 1-1 1-3 1-12 1-6 1 8 1 9 1 9 1-6 1-13 1-6 1 1 1 9 1 3 1 0 1-2 1-12 1 12 1 8 1-8 1 2 1 9 1 1 1-8 1-3 1 0 1-17 1 2 1 15 1 13 1 1 1-22 1-21 1 2 1-11 1 11 1 1 1 0 1 10 1 10 1 6 1-2 1-15 1-6 1 13 1 2 1 1 1-3 1 0 1-10 1-24 1 2 1 1 1 12 1 4 1-4 1 4 1 16 1-3 1-17 1-1 1-12 1 4 1 25 1 10 1-22 1-1 1 2 1 9 1-8 1 3 1-1 1-5 1-4 1 2 1 8 1 15 1-1 1-16 1-5 1 15 1 6 1 6 1 5 1-15 1-5 1-4 1-8 1-8 1 3 1 12 1-12 1-4 1 9 1 8 1 6 1-13 1-24 1 2 1 9 1 16 1 15 1 10 1 4 1-5 1-13 1-17 1 2 1 21 1 8 1-17 1-2 1 3 1 3 1-5 1-5 1 6 1 14 1-19 1 2 1 11V3289H0Z" fill="#5794F2"/><path d="M0 3205l1-10 1 17 1 5 1-4 1-11 1-1 1 17 1 7 1-4 1 2 1-6 1-5 1 11 1 2 1-13 1-13 1 3 1 3 1 1 1 4 1-2 1-2 1 18 1-4 1-6 1-4 1-1 1 0 1-13 1-6 1 19 1 10 1-2 1-13 1-12 1-1 1 2 1-7 1 8 1 21 1-2 1-17 1-1 1 7 1 12 1 3 1 9 1-2 1-5 1 7 1 2 1 1 1 10 1 4 1-7 1-6 1-16 1-32 1 17 1 13 1-19 1 6 1 10 1-1 1 0 1 9 1 12 1-12 1-13 1 6 1 7 1-5 1-10 1 5 1-8 1-1 1-2 1-5 1 12 1 12 1 3 1 1 1 4 1-19 1-7 1 3 1-1 1 7 1 6 1 2 1 1 1 8 1 2 1 5 1 4 1-10 1-21 1 2 1 8 1-1 1-12 1 4 1 3 1 6 1 11 1 11 1 6 1 0 1 0 1-3 1-6 1-12 1-6 1-3 1-4 1-1 1 11 1-1 1 6 1 8 1 1 1 2 1-7 1-8 1 2 1 0 1 3 1 2 1-7 1-8 1 0 1 8 1 7 1 2 1-2 1-13 1 8 1 6 1-8 1 4 1 6 1 4 1 2 1-3 1-1 1-12 1-6 1 10 1 11 1 3 1-14 1-16 1-3 1-8 1 6 1 2 1 6 1 9 1 2 1 1 1-8 1-13 1 6 1 10 1 0 1-2 1-1 1 1 1-9 1-13 1 2 1-5 1 7 1 7 1 4 1 2 1 11 1 2 1-9 1-3 1-9 1 4 1 19 1 0 1-24 1 3 1 13 1 9 1-15 1-2 1-4 1-7 1-2 1 4 1 6 1 17 1 5 1-18 1-7 1 9 1-1 1 3 1 6 1-6 1 4 1-7 1-6 1-9 1 0 1 16 1-9 1-7 1 3 1 5 1 4 1-4 1-12 1 3 1 4 1 6 1 12 1 11 1 2 1-5 1-6 1-11 1-2 1 12 1 1 1-14 1-2 1 7 1 7 1 3 1-1 1 0 1 9 1-15 1-4 1 10V3289H0Z" fill="#E0B400"/><path d="M0 3264l1-1 1-2 1-1 1-2 1-12 1 4 1 11 1 4 1 4 1 0 1-10 1-2 1 7 1 4 1-6 1-9 1-2 1 2 1-1 1-2 1 0 1 0 1 8 1 4 1 5 1-3 1-6 1-2 1-7 1-4 1 9 1 8 1-1 1-1 1 2 1-1 1-2 1-6 1 3 1 7 1-7 1-10 1-1 1 7 1 9 1-4 1 3 1 3 1-4 1 0 1-1 1 5 1 7 1-1 1-5 1-2 1-7 1-9 1 12 1 0 1-15 1 3 1 8 1 3 1 3 1 0 1 0 1-7 1-8 1 3 1 4 1 1 1-2 1 3 1-6 1-4 1-2 1 3 1 7 1 2 1 0 1 0 1 9 1-4 1-8 1-1 1 2 1 3 1 3 1 2 1-5 1 0 1 6 1 3 1-2 1-2 1-7 1 4 1 4 1 2 1-6 1 1 1 2 1-1 1-3 1 2 1 5 1 0 1 0 1 2 1 2 1-4 1 1 1-3 1-7 1-9 1 4 1 5 1 5 1 1 1-2 1 2 1 2 1 1 1-2 1-4 1 2 1 0 1 0 1-2 1-2 1 5 1 5 1 3 1-2 1-11 1 3 1 5 1-6 1 0 1 4 1-1 1-2 1-1 1 5 1-1 1-2 1 1 1 2 1 0 1-4 1-6 1 1 1-3 1-1 1 0 1 7 1 4 1-1 1 4 1 0 1-4 1 0 1 4 1-1 1-7 1-7 1-1 1 1 1-4 1 4 1 2 1 2 1-4 1-7 1 5 1 14 1 4 1-7 1-4 1-6 1 0 1 10 1 0 1-9 1 6 1 8 1 1 1-6 1-2 1-3 1 2 1 1 1 2 1 5 1 4 1-6 1-13 1 1 1 5 1 1 1 3 1-2 1-6 1 3 1 4 1 0 1 1 1 5 1 2 1-7 1 1 1 1 1-5 1 2 1 4 1-10 1-5 1 4 1 2 1 1 1 7 1 1 1-2 1 2 1-2 1 0 1 6 1 4 1-3 1-7 1 1 1 2 1-3 1 4 1 2 1 3 1-2 1-2 1 0V3289H0Z" fill="#56A64B"/></g></svg><span id="t23" style="position:absolute;left:84.92px;top:319.70px;height:18px;line-height:18px;font-size:12.3px;white-space:pre;color:#24292e;letter-spacing:0.317px;transform:translateX(-100%);">0 B/s</span><span id="t24" style="position:absolute;left:85.11px;top:273.95px;height:18px;line-height:18px;font-size:12.3px;white-space:pre;color:#24292e;letter-spacing:0.507px;transform:translateX(-100%);">200 MB/s</span><span id="t25" style="position:absolute;left:85.11px;top:228.20px;height:18px;line-height:18px;font-size:12.3px;white-space:pre;color:#24292e;letter-spacing:0.507px;transform:translateX(-100%);">400 MB/s</span><span id="t26" style="position:absolute;left:90.79px;top:334.90px;height:18px;line-height:18px;font-size:12.3px;white-space:pre;color:#24292e;letter-spacing:-0.008px;transform:translateX(-50%);">13:45</span><span id="t27" style="position:absolute;left:151.98px;top:334.90px;height:18px;line-height:18px;font-size:12.3px;white-space:pre;color:#24292e;letter-spacing:0.117px;transform:translateX(-50%);">14:00</span><span id="t28" style="position:absolute;left:212.82px;top:334.90px;height:18px;line-height:18px;font-size:12.3px;white-space:pre;color:#24292e;letter-spacing:-0.450px;transform:translateX(-50%);">14:15</span><span id="t29" style="position:absolute;left:274.23px;top:334.90px;height:18px;line-height:18px;font-size:12.3px;white-space:pre;color:#24292e;letter-spacing:0.117px;transform:translateX(-50%);">14:30</span><div class="mk" style="left:29.2px;top:362.15px;background:#56A64B"></div><span id="t30" style="position:absolute;left:51.25px;top:354.75px;height:18px;line-height:18px;font-size:12.3px;white-space:pre;color:#24292e;letter-spacing:0.593px;">ruler-querier-78f54b4755-28cmg</span><div class="mk" style="left:29.2px;top:385.65px;background:#E0B400"></div><span id="t31" style="position:absolute;left:51.25px;top:378.25px;height:18px;line-height:18px;font-size:12.3px;white-space:pre;color:#24292e;letter-spacing:0.585px;">ruler-querier-78f54b4755-4dv7m</span><div class="mk" style="left:29.2px;top:409.15px;background:#5794F2"></div><span id="t32" style="position:absolute;left:51.25px;top:401.75px;height:18px;line-height:18px;font-size:12.3px;white-space:pre;color:#24292e;letter-spacing:0.581px;">ruler-querier-78f54b4755-68c7p</span><div class="panel" style="left:360px;top:174px"></div><span id="t33" style="position:absolute;left:369.20px;top:179.60px;height:22px;line-height:22px;font-size:14.5px;white-space:pre;color:#24292e;-webkit-text-stroke:0.3px #24292e;letter-spacing:0.488px;">Transmit bandwidth</span><svg style="left:0;top:0" width="1400" height="1400" viewBox="0 0 1400 1400"><g stroke="#e9eaeb" stroke-width="1" fill="none" shape-rendering="crispEdges"><path d="M427.5 223.25V332.90"/><path d="M490.5 223.25V332.90"/><path d="M553.5 223.25V332.90"/><path d="M616.5 223.25V332.90"/><path d="M426.50 328.5H679.00"/><path d="M426.50 295.5H679.00"/><path d="M426.50 262.5H679.00"/><path d="M426.50 230.5H679.00"/></g><g transform="translate(426.5 0) scale(1.05208 0.1)"><path d="M0 2402l1 151 1-7 1-105 1 13 1 62 1-47 1-75 1 41 1 98 1-29 1-88 1 11 1 78 1 27 1-122 1-56 1 101 1 31 1-107 1 45 1 131 1-60 1-108 1 96 1 39 1-129 1-17 1 82 1-18 1-42 1 88 1 68 1-107 1-51 1 107 1-61 1-48 1 67 1 36 1-89 1 24 1 33 1-86 1-29 1 125 1 5 1-76 1 82 1 63 1-65 1-130 1 58 1 87 1-74 1-29 1 120 1 32 1-125 1 13 1 38 1-63 1-43 1 96 1 62 1-119 1-14 1 66 1-11 1-62 1 67 1 41 1-110 1 54 1 87 1-34 1-79 1 64 1 54 1-114 1-28 1 115 1-22 1-83 1 28 1 80 1-64 1-14 1 80 1-23 1-91 1 58 1 55 1-120 1-5 1 128 1-13 1-62 1 31 1 62 1-113 1-42 1 59 1 26 1-64 1 29 1 139 1 12 1-74 1-64 1 76 1 26 1-96 1-58 1 73 1 15 1-103 1 38 1 131 1-64 1-46 1 136 1-134 1-9 1 122 1-70 1-21 1 99 1-8 1-130 1 48 1 42 1-69 1-63 1 56 1 45 1-52 1-38 1 60 1 93 1-25 1-76 1-12 1 92 1 35 1-91 1-70 1 103 1 53 1-122 1-19 1 87 1-15 1-80 1 69 1 71 1-130 1 35 1 80 1-121 1 10 1 150 1-85 1-70 1 142 1-54 1-111 1 130 1 25 1-128 1 34 1 100 1-79 1-57 1 99 1 5 1-98 1-21 1 83 1-2 1-61 1 2 1 68 1 5 1-108 1 58 1 91 1-32 1-70 1 67 1 43 1-83 1-55 1 126 1-6 1-134 1 53 1 79 1-22 1-64 1 53 1 47 1-71 1-40 1 67 1 91 1-93 1-46 1 119 1-56 1-117 1 69 1 45 1-111 1 24 1 110 1-71 1-81 1 81 1 84 1-83 1-64 1 81 1 39 1-99 1-50 1 78 1 14 1-98 1 74 1 104 1-91 1-85 1 64 1 36 1-85 1 68 1 70 1-110 1 43 1 75V3289H0Z" fill="#F29191"/><path d="M0 2415l1 148 1-5 1-104 1 12 1 63 1-49 1-74 1 40 1 100 1-32 1-83 1 4 1 83 1 26 1-119 1-59 1 101 1 30 1-106 1 44 1 130 1-57 1-114 1 101 1 39 1-128 1-18 1 79 1-15 1-43 1 89 1 69 1-111 1-49 1 107 1-59 1-50 1 70 1 35 1-90 1 24 1 30 1-86 1-27 1 126 1 2 1-74 1 81 1 62 1-61 1-134 1 62 1 88 1-73 1-29 1 117 1 32 1-125 1 13 1 39 1-62 1-44 1 98 1 60 1-120 1-16 1 68 1-11 1-63 1 69 1 42 1-111 1 53 1 84 1-30 1-77 1 64 1 51 1-114 1-32 1 118 1-21 1-83 1 28 1 79 1-61 1-16 1 80 1-22 1-92 1 58 1 56 1-121 1-4 1 126 1-11 1-64 1 33 1 61 1-113 1-41 1 59 1 26 1-64 1 28 1 140 1 13 1-74 1-67 1 76 1 26 1-91 1-61 1 71 1 16 1-103 1 38 1 132 1-65 1-48 1 138 1-136 1-6 1 121 1-70 1-20 1 100 1-11 1-129 1 47 1 41 1-70 1-61 1 59 1 42 1-51 1-41 1 65 1 93 1-27 1-76 1-16 1 96 1 31 1-85 1-73 1 102 1 57 1-127 1-17 1 89 1-15 1-84 1 69 1 74 1-131 1 37 1 80 1-121 1 10 1 149 1-85 1-71 1 141 1-54 1-108 1 130 1 24 1-128 1 33 1 101 1-80 1-55 1 98 1 10 1-102 1-21 1 81 1-2 1-61 1 2 1 70 1 4 1-108 1 58 1 93 1-36 1-68 1 68 1 41 1-82 1-57 1 128 1-7 1-132 1 54 1 81 1-29 1-62 1 55 1 46 1-70 1-41 1 66 1 91 1-92 1-47 1 122 1-62 1-113 1 70 1 42 1-110 1 23 1 112 1-68 1-83 1 80 1 86 1-84 1-65 1 79 1 38 1-96 1-50 1 79 1 14 1-98 1 73 1 103 1-89 1-87 1 64 1 39 1-91 1 71 1 70 1-110 1 44 1 75V3289H0Z" fill="#F9BA8F"/><path d="M0 2427l1 146 1-3 1-105 1 13 1 62 1-48 1-74 1 40 1 100 1-32 1-86 1 7 1 83 1 26 1-121 1-58 1 102 1 30 1-106 1 44 1 130 1-58 1-113 1 101 1 39 1-128 1-18 1 79 1-15 1-43 1 89 1 69 1-111 1-50 1 108 1-60 1-48 1 69 1 35 1-90 1 23 1 31 1-86 1-27 1 126 1 2 1-74 1 80 1 62 1-62 1-132 1 61 1 86 1-73 1-29 1 119 1 33 1-125 1 13 1 39 1-65 1-41 1 95 1 63 1-120 1-16 1 68 1-11 1-64 1 70 1 39 1-109 1 54 1 84 1-30 1-80 1 64 1 53 1-114 1-31 1 118 1-22 1-82 1 28 1 79 1-64 1-13 1 79 1-22 1-91 1 58 1 55 1-120 1-5 1 127 1-11 1-64 1 32 1 61 1-111 1-42 1 58 1 25 1-63 1 28 1 141 1 11 1-74 1-65 1 75 1 23 1-90 1-58 1 71 1 16 1-103 1 38 1 131 1-65 1-48 1 139 1-137 1-6 1 122 1-70 1-21 1 99 1-11 1-127 1 47 1 41 1-70 1-61 1 56 1 45 1-52 1-41 1 65 1 94 1-28 1-75 1-16 1 96 1 30 1-85 1-73 1 103 1 55 1-125 1-16 1 87 1-15 1-83 1 69 1 74 1-132 1 38 1 78 1-120 1 11 1 148 1-84 1-71 1 140 1-53 1-109 1 131 1 24 1-129 1 34 1 101 1-80 1-55 1 97 1 8 1-100 1-21 1 82 1-2 1-61 1 2 1 70 1 4 1-108 1 58 1 91 1-34 1-68 1 67 1 41 1-81 1-56 1 127 1-7 1-132 1 53 1 78 1-24 1-63 1 51 1 50 1-70 1-42 1 66 1 92 1-92 1-48 1 121 1-60 1-114 1 70 1 43 1-110 1 22 1 112 1-69 1-81 1 80 1 85 1-84 1-64 1 79 1 38 1-97 1-50 1 79 1 15 1-98 1 73 1 103 1-90 1-86 1 61 1 40 1-90 1 72 1 70 1-110 1 43 1 76V3289H0Z" fill="#70DBED"/><path d="M0 2625l1 55 1 13 1-38 1-19 1 26 1-31 1-25 1 1 1 37 1-4 1-18 1-3 1 20 1 12 1-54 1-34 1 22 1 23 1-25 1 15 1 61 1 10 1-64 1 20 1 19 1-63 1-27 1 38 1 8 1-6 1 45 1 40 1-52 1-50 1 37 1-17 1-12 1 19 1 37 1-46 1-2 1 17 1-40 1-7 1 40 1 15 1-6 1 23 1 19 1-28 1-62 1 5 1 46 1 9 1-10 1 62 1 41 1-63 1-29 1-16 1-32 1-18 1 42 1 68 1-62 1-35 1 29 1 11 1-45 1 37 1 19 1-38 1 21 1 47 1-9 1-22 1 1 1 10 1-34 1-21 1 43 1 6 1-35 1 0 1 48 1-14 1-10 1 34 1-4 1-60 1 23 1 29 1-43 1 0 1 38 1 19 1-31 1 8 1 20 1-50 1-42 1 4 1 42 1-7 1 17 1 82 1 31 1-41 1-42 1 12 1 15 1-53 1-33 1 2 1 20 1-34 1 0 1 76 1 1 1-39 1 58 1-51 1-20 1 65 1-4 1-7 1 43 1 5 1-81 1 4 1 13 1-21 1-29 1 2 1 32 1-27 1-16 1 39 1 33 1 6 1-27 1-8 1 24 1 29 1-30 1-42 1 29 1 15 1-43 1-31 1 41 1-3 1-25 1 25 1 47 1-39 1-13 1 31 1-25 1-5 1 77 1-14 1-52 1 63 1-18 1-59 1 43 1 20 1-49 1-12 1 47 1-25 1-12 1 21 1 8 1-47 1-30 1 44 1 8 1-25 1-4 1 34 1 5 1-50 1 25 1 52 1-2 1-33 1 19 1 31 1-37 1-31 1 49 1 15 1-61 1 0 1 35 1 3 1-20 1 11 1 36 1-39 1-17 1 25 1 54 1-21 1-34 1 24 1-16 1-76 1 29 1 11 1-22 1-4 1 49 1-16 1-23 1 18 1 33 1-15 1-45 1 32 1 8 1-30 1-32 1 18 1 13 1-19 1 24 1 45 1-32 1-42 1-7 1 27 1-30 1 28 1 48 1-32 1-4 1 30V3289H0Z" fill="#F4D598"/><path d="M0 2781l1 20 1-4 1-1 1-13 1-20 1-25 1 6 1-1 1 10 1-5 1 9 1 1 1-12 1-14 1-20 1-16 1-4 1 10 1 20 1 21 1 20 1 20 1-28 1-5 1-7 1-18 1-19 1-3 1 7 1 18 1 36 1 8 1-24 1-15 1-17 1-14 1 20 1 3 1 16 1-5 1-4 1-14 1-14 1-1 1 6 1 12 1 22 1 17 1-8 1-19 1-15 1-15 1-1 1 39 1 11 1 31 1 14 1-19 1-18 1-61 1-15 1 16 1 24 1 38 1-17 1-16 1-6 1 10 1 4 1 2 1 2 1-19 1 24 1 11 1 3 1 11 1-15 1-7 1-19 1 3 1 6 1-6 1 2 1-4 1 13 1 0 1 11 1-3 1-8 1-4 1-1 1-7 1-6 1 7 1 7 1 12 1 12 1-14 1-18 1-25 1-24 1-11 1 9 1 37 1 40 1 49 1 8 1 9 1-16 1-15 1-17 1-25 1-23 1-15 1-10 1-1 1 16 1 20 1 27 1-16 1 3 1-8 1 4 1 26 1 14 1 8 1-3 1-5 1-33 1-16 1-11 1-5 1-2 1-12 1 7 1-9 1 27 1 25 1 1 1 5 1 6 1 12 1-8 1 16 1-16 1-13 1-4 1-15 1-16 1-8 1 6 1-16 1 17 1 9 1 3 1 7 1-4 1-10 1 2 1 10 1 20 1 14 1-10 1 16 1-19 1-7 1 5 1-2 1-5 1-20 1 8 1-5 1 11 1 7 1-16 1-19 1-11 1 6 1-9 1 24 1 10 1-5 1-8 1 2 1 6 1 14 1 15 1-2 1-10 1-4 1 0 1 1 1 6 1 6 1-8 1-8 1 0 1 6 1 16 1 0 1-6 1-11 1 2 1 17 1 12 1 15 1-7 1-19 1-11 1-36 1 1 1-11 1-1 1 6 1 5 1 3 1 6 1 3 1 6 1 13 1-3 1 0 1-4 1-16 1-15 1-22 1 5 1 16 1 22 1 18 1-28 1-14 1-26 1 1 1 16 1 14 1 14 1 8 1-5 1-5V3289H0Z" fill="#B7DBAB"/><path d="M0 2804l1 16 1-3 1-4 1-13 1-20 1-23 1 5 1-1 1 10 1-3 1 7 1-1 1-12 1-15 1-19 1-15 1-5 1 10 1 20 1 20 1 21 1 19 1-23 1-6 1-6 1-19 1-21 1-4 1 6 1 18 1 36 1 10 1-23 1-16 1-16 1-13 1 19 1 7 1 14 1-6 1-4 1-14 1-16 1-1 1 7 1 12 1 22 1 18 1-7 1-20 1-14 1-14 1-2 1 36 1 12 1 29 1 12 1-19 1-19 1-57 1-13 1 17 1 23 1 36 1-13 1-16 1-6 1 9 1 4 1 1 1 2 1-15 1 20 1 10 1 4 1 7 1-14 1-7 1-16 1 3 1 7 1-6 1 0 1-3 1 11 1 0 1 10 1-2 1-8 1-3 1-1 1-8 1-7 1 8 1 6 1 11 1 12 1-12 1-18 1-24 1-23 1-12 1 9 1 36 1 40 1 47 1 11 1 10 1-17 1-15 1-16 1-25 1-24 1-15 1-12 1-1 1 17 1 21 1 26 1-12 1 3 1-7 1 2 1 24 1 13 1 8 1-2 1-6 1-31 1-17 1-9 1-6 1-4 1-10 1 7 1-6 1 28 1 24 1 0 1 6 1 5 1 10 1-8 1 12 1-15 1-13 1-5 1-16 1-16 1-8 1 5 1-13 1 17 1 10 1 5 1 7 1-4 1-8 1 1 1 11 1 19 1 12 1-8 1 14 1-19 1-7 1 7 1-3 1-6 1-18 1 6 1-5 1 10 1 5 1-17 1-19 1-10 1 6 1-5 1 24 1 10 1-5 1-8 1 2 1 5 1 13 1 15 1-1 1-9 1-5 1 0 1-1 1 7 1 6 1-7 1-7 1 1 1 5 1 14 1 1 1-6 1-11 1 3 1 17 1 11 1 15 1-7 1-20 1-13 1-32 1-2 1-10 1 0 1 8 1 6 1 2 1 6 1 3 1 5 1 14 1-2 1-3 1-4 1-16 1-16 1-19 1 5 1 17 1 21 1 18 1-24 1-15 1-25 1-2 1 13 1 13 1 15 1 9 1-6 1-3V3289H0Z" fill="#584477"/><path d="M0 2820l1 16 1-1 1-2 1-12 1-18 1-21 1 3 1 0 1 10 1-2 1 7 1 1 1-11 1-17 1-18 1-13 1-5 1 12 1 19 1 19 1 18 1 16 1-23 1-7 1-7 1-18 1-21 1-4 1 9 1 18 1 34 1 10 1-23 1-16 1-16 1-13 1 16 1 9 1 14 1-6 1-3 1-12 1-14 1-2 1 6 1 12 1 20 1 19 1-5 1-19 1-14 1-15 1-4 1 31 1 14 1 28 1 12 1-15 1-18 1-53 1-12 1 18 1 20 1 32 1-11 1-16 1-6 1 11 1 3 1 1 1 1 1-13 1 18 1 9 1 4 1 6 1-14 1-6 1-14 1 1 1 5 1-6 1-2 1-3 1 13 1 2 1 11 1-1 1-6 1-3 1-1 1-10 1-9 1 6 1 7 1 11 1 11 1-14 1-19 1-23 1-21 1-8 1 9 1 35 1 40 1 42 1 12 1 10 1-15 1-15 1-15 1-25 1-25 1-17 1-11 1-1 1 18 1 22 1 25 1-11 1 3 1-5 1 0 1 22 1 12 1 6 1-2 1-6 1-30 1-16 1-7 1-4 1-5 1-9 1 7 1-6 1 27 1 25 1 2 1 4 1 4 1 7 1-11 1 10 1-15 1-12 1-3 1-12 1-15 1-7 1 6 1-12 1 15 1 9 1 4 1 6 1-4 1-8 1 1 1 11 1 20 1 12 1-8 1 13 1-18 1-7 1 7 1-3 1-7 1-18 1 5 1-3 1 9 1 6 1-16 1-21 1-11 1 5 1-5 1 23 1 11 1-3 1-6 1 3 1 5 1 10 1 13 1-2 1-10 1-3 1 0 1 0 1 6 1 7 1-6 1-7 1 2 1 7 1 13 1 1 1-5 1-11 1 2 1 16 1 11 1 13 1-5 1-18 1-15 1-31 1-2 1-10 1 0 1 9 1 4 1 0 1 6 1 4 1 7 1 15 1-1 1-5 1-6 1-17 1-18 1-19 1 6 1 17 1 21 1 19 1-20 1-15 1-24 1-1 1 12 1 12 1 15 1 8 1-7 1-4V3289H0Z" fill="#6D1F62"/><path d="M0 2862l1 13 1-3 1 0 1-15 1-20 1-20 1 2 1 1 1 12 1 2 1 5 1 0 1-8 1-16 1-17 1-10 1-6 1 6 1 15 1 16 1 16 1 16 1-17 1-7 1-6 1-15 1-17 1-2 1 12 1 19 1 28 1 7 1-24 1-18 1-15 1-9 1 16 1 9 1 11 1-7 1-6 1-13 1-14 1-4 1 6 1 12 1 18 1 19 1 0 1-12 1-11 1-10 1-2 1 24 1 9 1 23 1 5 1-17 1-14 1-46 1-9 1 19 1 18 1 25 1-10 1-14 1-7 1 9 1 7 1 0 1 0 1-9 1 15 1 7 1 5 1 4 1-16 1-7 1-11 1 2 1 5 1-2 1-3 1-3 1 11 1 1 1 8 1-1 1-2 1 0 1 2 1-6 1-6 1 4 1 6 1 12 1 8 1-13 1-17 1-24 1-22 1-9 1 8 1 32 1 39 1 39 1 11 1 9 1-12 1-14 1-14 1-24 1-25 1-16 1-8 1 2 1 15 1 19 1 20 1-10 1 3 1-3 1 1 1 19 1 10 1 4 1-4 1-6 1-25 1-16 1-6 1-1 1-5 1-8 1 6 1-4 1 25 1 23 1 3 1 2 1 3 1 7 1-7 1 7 1-12 1-12 1-5 1-12 1-14 1-9 1 2 1-9 1 13 1 10 1 8 1 7 1-4 1-5 1 2 1 9 1 19 1 10 1-7 1 12 1-13 1-5 1 4 1-6 1-9 1-18 1 4 1-1 1 9 1 6 1-14 1-20 1-11 1 3 1-4 1 19 1 9 1-1 1-4 1 6 1 9 1 9 1 11 1-3 1-12 1-7 1-1 1 2 1 6 1 9 1-4 1-8 1-1 1 6 1 10 1 0 1-3 1-8 1 2 1 18 1 13 1 12 1-6 1-17 1-15 1-30 1-4 1-8 1-1 1 9 1 7 1 1 1 7 1 6 1 3 1 9 1-2 1-6 1-4 1-12 1-15 1-18 1 6 1 17 1 19 1 16 1-17 1-14 1-21 1-2 1 9 1 7 1 13 1 8 1-5 1-3V3289H0Z" fill="#0A437C"/><path d="M0 2888l1 12 1-2 1 2 1-10 1-19 1-17 1 0 1-1 1 8 1 4 1 5 1 2 1-5 1-12 1-16 1-10 1-4 1 6 1 14 1 15 1 13 1 10 1-15 1-5 1-6 1-13 1-15 1-3 1 9 1 18 1 27 1 6 1-20 1-19 1-17 1-10 1 15 1 11 1 13 1-2 1-5 1-13 1-14 1-6 1 3 1 11 1 18 1 16 1-2 1-12 1-12 1-8 1 2 1 23 1 12 1 23 1 6 1-17 1-14 1-39 1-7 1 18 1 18 1 19 1-14 1-14 1-6 1 9 1 6 1 0 1-3 1-9 1 15 1 7 1 5 1 4 1-14 1-7 1-9 1 2 1 3 1-4 1-2 1-2 1 9 1 4 1 8 1-1 1-2 1 0 1 0 1-7 1-4 1 3 1 5 1 12 1 6 1-12 1-15 1-23 1-22 1-8 1 9 1 32 1 37 1 37 1 11 1 6 1-13 1-15 1-14 1-21 1-19 1-10 1-6 1 3 1 11 1 13 1 16 1-10 1 4 1 0 1 4 1 17 1 8 1 3 1-6 1-8 1-21 1-13 1-6 1-1 1-7 1-11 1 3 1-2 1 24 1 25 1 7 1 4 1 3 1 9 1-6 1 3 1-12 1-12 1-8 1-13 1-12 1-10 1 1 1-7 1 12 1 9 1 8 1 9 1-1 1-5 1 4 1 10 1 17 1 10 1-7 1 7 1-16 1-8 1 2 1-6 1-7 1-13 1 4 1 3 1 10 1 3 1-14 1-20 1-11 1 3 1-1 1 17 1 7 1 0 1-3 1 7 1 11 1 10 1 9 1-2 1-10 1-6 1-1 1 3 1 5 1 6 1-4 1-9 1-2 1 5 1 9 1-1 1-4 1-9 1 1 1 14 1 13 1 13 1-5 1-14 1-12 1-25 1-3 1-5 1-2 1 6 1 6 1 0 1 5 1 5 1 4 1 8 1-3 1-5 1-6 1-13 1-13 1-15 1 5 1 17 1 18 1 14 1-15 1-10 1-17 1-1 1 10 1 5 1 7 1 5 1-5 1-4V3289H0Z" fill="#890F02"/><path d="M0 2921l1 9 1-2 1 2 1-8 1-16 1-17 1 0 1 0 1 7 1 6 1 7 1 1 1-6 1-14 1-17 1-12 1-2 1 7 1 14 1 16 1 13 1 7 1-14 1-6 1-7 1-12 1-13 1-2 1 8 1 18 1 25 1 7 1-18 1-16 1-17 1-10 1 15 1 10 1 11 1 0 1-2 1-11 1-13 1-6 1 0 1 9 1 20 1 16 1-4 1-11 1-12 1-11 1 1 1 22 1 11 1 21 1 6 1-18 1-17 1-33 1-6 1 16 1 17 1 16 1-13 1-16 1-5 1 7 1 9 1 5 1 1 1-5 1 13 1 9 1 4 1 3 1-12 1-11 1-12 1-3 1 0 1-6 1-4 1 0 1 9 1 8 1 11 1 1 1 0 1 1 1-2 1-8 1-4 1 4 1 4 1 11 1 7 1-14 1-15 1-20 1-22 1-10 1 8 1 29 1 35 1 36 1 14 1 8 1-11 1-13 1-14 1-22 1-18 1-11 1-6 1 4 1 12 1 12 1 13 1-7 1 1 1-1 1 6 1 17 1 9 1 5 1-5 1-12 1-18 1-12 1-8 1-4 1-8 1-11 1 5 1 5 1 22 1 20 1 5 1 1 1 2 1 6 1-2 1 3 1-10 1-8 1-7 1-14 1-12 1-8 1 0 1-3 1 13 1 9 1 6 1 7 1-3 1-8 1 1 1 10 1 17 1 12 1-2 1 4 1-17 1-8 1 1 1-7 1-4 1-9 1 5 1 5 1 10 1 2 1-15 1-20 1-11 1 0 1 1 1 17 1 6 1-1 1 0 1 5 1 9 1 9 1 8 1-3 1-9 1-6 1-2 1 4 1 8 1 7 1-1 1-7 1-3 1 4 1 6 1-1 1-6 1-8 1 1 1 13 1 13 1 11 1-6 1-16 1-12 1-23 1-3 1-2 1 2 1 6 1 6 1 0 1 3 1 4 1 2 1 6 1-4 1-5 1-3 1-9 1-9 1-11 1 3 1 13 1 17 1 11 1-11 1-5 1-12 1-1 1 10 1 4 1 1 1 1 1-6 1-5V3289H0Z" fill="#C15C17"/><path d="M0 2945l1 9 1-1 1 0 1-7 1-13 1-15 1 0 1 2 1 7 1 6 1 6 1 0 1-7 1-12 1-14 1-11 1-3 1 6 1 9 1 13 1 14 1 5 1-11 1-5 1-6 1-11 1-11 1-1 1 8 1 17 1 26 1 6 1-17 1-14 1-14 1-10 1 13 1 11 1 7 1-1 1-2 1-13 1-14 1-3 1 2 1 10 1 20 1 16 1-4 1-11 1-10 1-12 1 0 1 20 1 10 1 19 1 5 1-17 1-19 1-30 1-4 1 16 1 17 1 14 1-14 1-16 1-5 1 8 1 8 1 6 1 3 1-4 1 12 1 10 1 5 1 1 1-10 1-11 1-13 1-6 1-2 1-7 1-6 1 0 1 10 1 8 1 16 1 4 1 0 1 1 1-4 1-11 1-5 1 5 1 6 1 12 1 9 1-11 1-17 1-19 1-20 1-10 1 7 1 27 1 31 1 30 1 15 1 6 1-11 1-12 1-13 1-22 1-17 1-10 1-8 1 4 1 12 1 11 1 11 1-4 1 1 1-1 1 6 1 17 1 8 1 5 1-4 1-12 1-18 1-12 1-7 1-2 1-5 1-5 1 4 1 4 1 20 1 17 1 4 1 3 1 3 1 6 1-1 1 1 1-11 1-9 1-7 1-14 1-13 1-6 1 0 1-4 1 13 1 8 1 3 1 6 1-2 1-7 1 1 1 11 1 18 1 11 1 0 1 2 1-18 1-7 1 3 1-7 1-5 1-4 1 4 1 6 1 12 1 1 1-15 1-18 1-9 1-2 1-1 1 14 1 3 1-2 1 1 1 6 1 8 1 10 1 9 1-4 1-8 1-5 1-3 1 2 1 9 1 7 1-2 1-6 1-3 1 1 1 6 1-1 1-5 1-6 1 5 1 12 1 11 1 10 1-6 1-17 1-11 1-21 1-6 1-4 1 3 1 6 1 6 1 3 1 3 1 1 1 2 1 4 1-5 1-5 1 0 1-8 1-8 1-8 1 2 1 11 1 17 1 14 1-9 1-4 1-10 1-4 1 9 1 4 1 1 1 0 1-6 1-4V3289H0Z" fill="#447EBC"/><path d="M0 2975l1 6 1-2 1-2 1-8 1-12 1-14 1 1 1 3 1 9 1 5 1 6 1 2 1-8 1-13 1-12 1-11 1-5 1 6 1 9 1 12 1 16 1 8 1-8 1-4 1-6 1-12 1-13 1-1 1 7 1 16 1 25 1 9 1-14 1-12 1-12 1-11 1 9 1 10 1 5 1-1 1 0 1-9 1-15 1-3 1 2 1 6 1 18 1 15 1-4 1-8 1-8 1-11 1-2 1 16 1 9 1 16 1 5 1-13 1-16 1-27 1-3 1 14 1 13 1 10 1-12 1-18 1-4 1 10 1 9 1 8 1 3 1-4 1 8 1 7 1 3 1-2 1-11 1-10 1-10 1-3 1 0 1-4 1-5 1 1 1 8 1 6 1 11 1 3 1-1 1 1 1-2 1-8 1-5 1 7 1 6 1 11 1 8 1-11 1-17 1-19 1-15 1-8 1 6 1 26 1 26 1 24 1 15 1 9 1-9 1-9 1-11 1-24 1-19 1-9 1-7 1 4 1 13 1 12 1 10 1-3 1 3 1-2 1 5 1 16 1 6 1 3 1-2 1-12 1-16 1-10 1-6 1-4 1-6 1-5 1 3 1 4 1 20 1 15 1 3 1 3 1 6 1 5 1 2 1 2 1-11 1-9 1-5 1-13 1-15 1-7 1-1 1-4 1 11 1 6 1 1 1 5 1-1 1-6 1 1 1 12 1 16 1 9 1 0 1 2 1-15 1-5 1 6 1-5 1-5 1-3 1 1 1 3 1 10 1 1 1-15 1-16 1-6 1-3 1-2 1 12 1 3 1-2 1 2 1 7 1 8 1 9 1 10 1-2 1-8 1-3 1-3 1 1 1 7 1 7 1-1 1-6 1-1 1 1 1 4 1 1 1-5 1-6 1 4 1 11 1 7 1 8 1-5 1-15 1-12 1-16 1-8 1-4 1 2 1 5 1 3 1 2 1 4 1 1 1 1 1 5 1-4 1-3 1 2 1-5 1-9 1-8 1 2 1 10 1 16 1 14 1-8 1-5 1-7 1-2 1 8 1 5 1 1 1-3 1-7 1-4V3289H0Z" fill="#F2CC0C"/><path d="M0 3009l1 4 1-2 1-2 1-9 1-10 1-11 1-3 1 4 1 8 1 5 1 6 1 3 1-4 1-11 1-8 1-8 1-6 1 5 1 8 1 9 1 12 1 7 1-7 1-5 1-4 1-11 1-14 1 0 1 9 1 15 1 24 1 8 1-16 1-15 1-12 1-10 1 8 1 11 1 5 1-3 1 0 1-6 1-13 1-4 1 4 1 5 1 14 1 12 1-4 1-9 1-6 1-5 1 2 1 16 1 12 1 14 1 1 1-12 1-15 1-24 1-4 1 13 1 11 1 7 1-9 1-18 1-7 1 9 1 10 1 7 1 6 1-1 1 4 1 6 1 4 1-3 1-11 1-6 1-9 1-4 1 2 1-3 1-5 1 1 1 9 1 4 1 8 1 3 1-1 1 0 1 0 1-4 1-3 1 8 1 9 1 8 1 5 1-11 1-18 1-21 1-16 1-8 1 3 1 24 1 25 1 20 1 14 1 9 1-8 1-10 1-10 1-21 1-16 1-5 1-4 1 2 1 8 1 10 1 6 1 0 1 5 1 1 1 5 1 14 1 6 1 2 1-2 1-10 1-14 1-12 1-5 1-4 1-7 1-2 1 6 1 4 1 17 1 13 1-1 1 1 1 7 1 8 1 5 1 5 1-8 1-11 1-6 1-11 1-15 1-7 1 0 1-3 1 9 1 6 1 1 1 1 1-1 1-3 1 1 1 11 1 16 1 7 1-1 1 2 1-14 1-7 1 6 1-4 1-5 1-1 1 2 1 2 1 9 1 3 1-14 1-16 1-7 1-4 1-3 1 12 1 4 1-1 1 2 1 7 1 7 1 7 1 9 1-2 1-9 1-2 1-2 1 0 1 5 1 6 1-2 1-6 1 1 1 4 1 3 1 2 1-2 1-5 1 5 1 11 1 6 1 6 1-5 1-15 1-13 1-17 1-8 1-5 1 4 1 8 1 3 1 0 1 2 1 1 1 1 1 7 1-4 1-6 1-1 1-5 1-9 1-6 1 6 1 11 1 14 1 13 1-6 1-7 1-7 1-3 1 6 1 5 1 4 1 0 1-5 1-2V3289H0Z" fill="#19730E"/><path d="M0 3040l1 3 1 0 1-1 1-8 1-10 1-10 1-3 1 1 1 4 1 3 1 4 1 5 1 1 1-8 1-8 1-8 1-7 1 3 1 8 1 9 1 10 1 6 1-4 1-6 1-4 1-9 1-13 1 0 1 9 1 13 1 19 1 6 1-15 1-13 1-9 1-8 1 5 1 9 1 3 1-3 1-1 1-6 1-12 1-4 1 3 1 6 1 13 1 13 1-2 1-7 1-6 1-5 1 2 1 12 1 13 1 13 1 1 1-12 1-14 1-22 1-2 1 14 1 10 1 5 1-8 1-16 1-7 1 8 1 9 1 7 1 4 1 3 1 5 1 4 1 2 1-6 1-13 1-7 1-7 1-2 1 3 1 1 1-4 1 2 1 8 1 4 1 5 1 2 1 1 1 0 1 0 1-3 1-4 1 8 1 11 1 9 1 4 1-11 1-18 1-21 1-15 1-6 1 5 1 21 1 23 1 17 1 11 1 7 1-8 1-10 1-10 1-17 1-14 1-5 1-3 1 0 1 6 1 9 1 6 1 0 1 5 1 3 1 4 1 13 1 6 1 1 1-3 1-10 1-12 1-11 1-3 1-3 1-8 1-3 1 7 1 6 1 16 1 14 1-1 1 0 1 6 1 6 1 4 1 4 1-6 1-10 1-6 1-11 1-14 1-6 1 0 1 1 1 8 1 7 1 3 1 2 1-2 1-3 1-2 1 5 1 13 1 6 1-1 1 3 1-10 1-5 1 6 1-1 1-6 1-2 1 2 1 4 1 7 1 2 1-13 1-17 1-7 1-4 1-2 1 9 1 5 1 0 1 2 1 7 1 8 1 5 1 7 1-2 1-9 1-4 1 0 1 1 1 6 1 7 1 0 1-6 1-1 1 3 1 3 1 2 1 0 1-4 1 4 1 12 1 6 1 4 1-6 1-15 1-14 1-16 1-6 1-3 1 5 1 9 1 2 1-5 1-1 1-2 1 1 1 7 1 0 1-5 1 2 1-3 1-6 1-5 1 4 1 8 1 11 1 11 1-3 1-5 1-7 1-2 1 5 1 3 1 3 1 0 1-6 1-3V3289H0Z" fill="#705DA0"/><path d="M0 3074l1 1 1-1 1 0 1-7 1-9 1-7 1-3 1-1 1 2 1 4 1 2 1 4 1 0 1-8 1-8 1-5 1-2 1 4 1 7 1 7 1 6 1 5 1-2 1-4 1-5 1-8 1-11 1-2 1 9 1 12 1 17 1 6 1-12 1-13 1-9 1-5 1 7 1 10 1 3 1-2 1-4 1-7 1-11 1-4 1 4 1 7 1 14 1 10 1-4 1-8 1-6 1-3 1 5 1 12 1 12 1 10 1-1 1-13 1-13 1-18 1-3 1 11 1 8 1 5 1-5 1-10 1-2 1 7 1 8 1 4 1 1 1 2 1 7 1 6 1 2 1-8 1-15 1-10 1-6 1-1 1 3 1 2 1-3 1 1 1 7 1 5 1 3 1 0 1 1 1-1 1-2 1-3 1-3 1 6 1 9 1 10 1 5 1-8 1-12 1-18 1-16 1-4 1 3 1 17 1 22 1 15 1 11 1 6 1-6 1-9 1-9 1-15 1-12 1-6 1-3 1 0 1 3 1 6 1 4 1 1 1 4 1 4 1 6 1 12 1 8 1 2 1-5 1-10 1-11 1-12 1-5 1-3 1-8 1-1 1 8 1 9 1 13 1 10 1-2 1-3 1 3 1 7 1 5 1 3 1-4 1-6 1-4 1-7 1-8 1-4 1-2 1 0 1 5 1 4 1 4 1 3 1-3 1-3 1-2 1 2 1 11 1 8 1 2 1 3 1-8 1-5 1 4 1-1 1-2 1-2 1 0 1 0 1 4 1-1 1-10 1-14 1-6 1-3 1 0 1 9 1 4 1 1 1 1 1 7 1 8 1 5 1 4 1-3 1-8 1-2 1 1 1 1 1 3 1 2 1-3 1-6 1 0 1 6 1 5 1 3 1 0 1-3 1 0 1 7 1 6 1 2 1-5 1-10 1-11 1-12 1-5 1 0 1 4 1 7 1 0 1-6 1-4 1-1 1 1 1 6 1 2 1 0 1 2 1 0 1-4 1-8 1-1 1 7 1 9 1 10 1-1 1-2 1-7 1-5 1 3 1-1 1 1 1 2 1-3 1-1V3289H0Z" fill="#A352CC"/><path d="M0 3118l1 0 1-3 1-3 1-7 1-10 1-7 1 0 1 2 1 4 1 6 1 2 1-1 1-2 1-7 1-5 1-5 1-1 1 0 1 2 1 5 1 7 1 4 1 0 1 0 1-3 1-6 1-7 1-1 1 4 1 10 1 15 1 6 1-6 1-6 1-7 1-5 1 4 1 5 1-3 1-3 1-3 1-6 1-8 1-1 1 2 1 5 1 12 1 8 1-3 1-6 1-8 1-6 1 5 1 13 1 13 1 13 1 1 1-12 1-14 1-15 1-4 1 7 1 7 1 1 1-7 1-8 1-1 1 7 1 5 1 3 1 1 1 4 1 10 1 6 1 0 1-6 1-13 1-9 1-3 1 1 1 3 1 1 1-1 1 2 1 4 1 3 1 1 1-4 1-2 1-1 1-2 1-2 1 1 1 5 1 6 1 9 1 5 1-7 1-9 1-14 1-14 1-6 1 5 1 15 1 17 1 14 1 9 1 4 1-5 1-6 1-9 1-13 1-7 1-4 1-2 1 2 1 3 1 3 1 3 1 1 1 2 1 1 1 3 1 6 1 4 1 2 1 0 1-5 1-3 1-7 1-7 1-6 1-10 1-5 1 5 1 10 1 15 1 10 1-1 1-3 1 0 1 3 1 5 1 2 1-3 1-3 1-4 1-8 1-6 1-2 1-3 1 1 1 2 1 0 1 2 1 5 1 1 1-1 1 1 1 4 1 10 1 7 1 4 1 1 1-8 1-5 1 1 1-2 1 0 1 0 1-2 1 1 1 5 1 0 1-8 1-9 1-8 1-7 1 0 1 5 1 2 1 2 1 3 1 3 1 6 1 4 1 4 1-3 1-6 1-2 1 0 1 4 1 6 1 2 1-3 1-6 1-2 1 6 1 7 1 3 1-2 1-4 1 0 1 5 1 7 1 5 1-6 1-10 1-10 1-11 1-5 1 3 1 6 1 7 1 1 1-4 1-5 1-2 1 2 1 4 1 1 1-1 1-2 1-5 1-4 1-5 1 3 1 8 1 12 1 8 1-2 1-4 1-8 1-5 1 3 1 1 1 1 1 0 1-2 1-2V3289H0Z" fill="#3274D9"/><path d="M0 3150l1 1 1-4 1-6 1-7 1-9 1-9 1 0 1 4 1 3 1 6 1 3 1 0 1-2 1-4 1-3 1-4 1-1 1 1 1 0 1 4 1 7 1 3 1-1 1-1 1-3 1-7 1-4 1 2 1 5 1 9 1 12 1 3 1-7 1-4 1-4 1-5 1 5 1 3 1-6 1-4 1 0 1-5 1-6 1 1 1 2 1 4 1 11 1 7 1-5 1-5 1-5 1-6 1 4 1 13 1 11 1 8 1-1 1-13 1-15 1-12 1-2 1 7 1 5 1 1 1-6 1-9 1 0 1 6 1 4 1 5 1 3 1 4 1 8 1 6 1 0 1-6 1-7 1-8 1-4 1 2 1 1 1-2 1-3 1 0 1 4 1 3 1 5 1 0 1-1 1 1 1-2 1-4 1 0 1 4 1 3 1 6 1 3 1-5 1-6 1-8 1-9 1-5 1 2 1 9 1 11 1 9 1 9 1 3 1-3 1-4 1-7 1-10 1-4 1-1 1-3 1-1 1 2 1 2 1 4 1 5 1 3 1 0 1 3 1 5 1 1 1 2 1 1 1-5 1-3 1-3 1-5 1-7 1-9 1-5 1 3 1 9 1 13 1 6 1-3 1-2 1 0 1 3 1 6 1 1 1-4 1-3 1-2 1-7 1-6 1-2 1-3 1 0 1 4 1-1 1 1 1 5 1 2 1 0 1 0 1 5 1 8 1 6 1 5 1 2 1-8 1-4 1 0 1-5 1-2 1 1 1-1 1 2 1 7 1 2 1-7 1-7 1-8 1-10 1-2 1 6 1 3 1 3 1 4 1 2 1 3 1 3 1 3 1-4 1-6 1 0 1 0 1 5 1 7 1 1 1-3 1-4 1-1 1 3 1 6 1 2 1-2 1-4 1 1 1 4 1 4 1 3 1-6 1-11 1-9 1-10 1-5 1 2 1 7 1 7 1 2 1-1 1-4 1-2 1 4 1 6 1 1 1-1 1 0 1-4 1-4 1-2 1 1 1 5 1 10 1 6 1-3 1-5 1-6 1-4 1 3 1 4 1 2 1 0 1-2 1-2V3289H0Z" fill="#E02F44"/><path d="M0 3173l1 0 1-4 1-5 1-6 1-5 1-4 1 1 1 4 1 2 1 2 1 2 1 2 1-2 1-4 1-2 1-5 1-1 1 4 1 1 1 5 1 9 1 3 1-2 1-1 1-2 1-8 1-4 1 2 1 2 1 7 1 13 1 6 1-5 1-2 1-4 1-7 1 3 1 4 1-5 1-5 1-2 1-6 1-9 1-1 1 1 1 1 1 9 1 8 1 0 1-1 1 1 1-4 1 0 1 9 1 10 1 7 1 1 1-8 1-14 1-13 1-3 1 5 1 3 1 2 1-5 1-10 1 0 1 5 1 3 1 5 1 4 1 4 1 4 1 4 1-1 1-4 1-5 1-5 1-4 1-1 1 0 1-1 1-2 1 3 1 5 1 1 1 4 1 1 1-1 1 2 1 2 1-2 1 0 1 6 1 3 1 3 1 3 1-3 1-8 1-8 1-8 1-7 1 0 1 10 1 10 1 7 1 8 1 1 1-6 1-4 1-4 1-7 1-2 1 1 1-2 1-2 1 2 1 2 1 1 1 4 1 4 1-2 1 1 1 5 1-1 1 0 1 0 1-4 1-4 1-2 1-3 1-5 1-6 1-1 1 1 1 5 1 11 1 5 1-1 1 0 1 1 1-1 1 3 1-1 1-4 1-3 1 1 1-5 1-4 1 2 1 0 1 1 1 3 1 1 1-1 1 1 1 1 1-3 1-1 1 4 1 6 1 5 1 5 1 4 1-5 1-2 1 2 1-4 1-4 1 1 1-2 1 1 1 8 1 2 1-6 1-8 1-6 1-9 1-3 1 7 1 2 1 1 1 3 1 1 1 0 1 2 1 4 1-3 1-4 1 3 1 3 1 4 1 6 1 0 1-5 1-3 1 2 1 3 1 4 1 2 1-3 1-4 1 2 1 3 1 1 1 1 1-3 1-8 1-7 1-5 1-6 1-2 1 5 1 4 1 0 1-1 1-3 1-1 1 4 1 9 1 2 1 0 1 1 1-6 1-7 1-4 1 0 1 3 1 9 1 7 1-1 1-2 1-1 1-3 1 0 1 3 1 3 1 0 1 1 1 1V3289H0Z" fill="#FA6400"/><path d="M0 3196l1 1 1 0 1-2 1-3 1-1 1-2 1-1 1 5 1 4 1 0 1 1 1 0 1-3 1-4 1-1 1-3 1-2 1 6 1 4 1 4 1 7 1 4 1-3 1-4 1-3 1-8 1-5 1 2 1 3 1 5 1 9 1 5 1-4 1-1 1 0 1-3 1 2 1 3 1-5 1-7 1-2 1-4 1-7 1 0 1 2 1 0 1 6 1 7 1-1 1-3 1 0 1-3 1-1 1 6 1 8 1 5 1 1 1-2 1-8 1-9 1-2 1 0 1-1 1 0 1-4 1-8 1-1 1 6 1 4 1 4 1 5 1 3 1 3 1 3 1 0 1-4 1-4 1-2 1-2 1-1 1-1 1-4 1-6 1 3 1 7 1 2 1 4 1 2 1-3 1-1 1 1 1-2 1-1 1 6 1 4 1 3 1 5 1 0 1-4 1-7 1-5 1-7 1-2 1 7 1 8 1 4 1 3 1-1 1-7 1-3 1 0 1-4 1-2 1 0 1-2 1-3 1 3 1 4 1 1 1 3 1 3 1-2 1-1 1 3 1 0 1-1 1 2 1-1 1-1 1 0 1-1 1-6 1-6 1-2 1 2 1 4 1 9 1 5 1-3 1-2 1 0 1-1 1 2 1 2 1-2 1-3 1 0 1-3 1-4 1 2 1 3 1 1 1 2 1 0 1-3 1-2 1-1 1-2 1-2 1 2 1 6 1 3 1 3 1 5 1-3 1-1 1 4 1-2 1-1 1 2 1 0 1 0 1 4 1 1 1-7 1-7 1-3 1-8 1-4 1 5 1 3 1 1 1 4 1 2 1-1 1 0 1 2 1-4 1-5 1 2 1 3 1 4 1 6 1 3 1-4 1-2 1 3 1 1 1 1 1 1 1-4 1-6 1 3 1 4 1 3 1 2 1-2 1-7 1-7 1-4 1-3 1-1 1 5 1 6 1 1 1-1 1-1 1-2 1 1 1 6 1 1 1-4 1-1 1-3 1-6 1 0 1 3 1 1 1 5 1 4 1-1 1-1 1 1 1-2 1-3 1 1 1 2 1-1 1 1 1 2V3289H0Z" fill="#5794F2"/><path d="M0 3227l1 0 1 0 1-1 1-3 1-2 1-1 1 0 1 3 1 4 1 0 1-2 1 2 1-2 1-5 1 0 1-2 1-2 1 4 1 5 1 2 1 5 1 3 1-2 1-2 1-3 1-7 1-6 1 0 1 3 1 3 1 8 1 4 1-3 1-1 1 0 1-1 1 2 1 2 1-4 1-5 1-3 1-2 1-6 1-2 1 3 1 1 1 5 1 7 1 1 1-3 1-1 1-3 1-3 1 2 1 6 1 4 1 1 1 0 1-1 1-5 1-1 1 1 1-2 1-2 1-2 1-6 1-3 1 3 1 1 1 2 1 4 1 4 1 3 1 2 1 3 1-2 1-2 1 0 1-3 1-5 1-3 1-3 1-4 1 1 1 5 1 2 1 3 1 4 1-1 1 0 1 1 1-1 1-2 1 3 1 3 1 2 1 5 1 2 1-3 1-6 1-6 1-5 1-3 1 5 1 6 1 1 1 2 1 2 1-3 1-2 1 1 1-3 1-3 1 2 1-1 1-4 1 2 1 5 1 2 1 2 1 2 1-2 1-2 1 3 1 1 1-1 1 1 1 1 1-2 1-2 1-1 1-5 1-6 1 0 1 3 1 4 1 6 1 3 1-5 1-4 1-2 1 0 1 2 1 4 1 0 1-3 1-1 1-3 1-3 1 0 1 4 1 4 1 3 1 2 1 0 1-2 1-1 1-1 1-4 1 0 1 4 1 1 1 2 1 3 1-2 1-3 1 4 1 0 1-1 1 3 1 1 1 1 1 2 1 1 1-6 1-8 1-3 1-4 1-3 1 3 1 4 1-1 1 2 1 1 1-2 1-1 1 4 1-2 1-4 1 1 1 4 1 3 1 6 1 5 1-3 1-3 1 3 1 1 1 1 1 2 1-2 1-4 1 0 1 4 1 1 1 1 1-1 1-4 1-5 1-4 1-3 1-2 1 2 1 4 1 2 1-2 1-1 1-3 1-2 1 4 1 1 1-2 1 1 1-2 1-5 1-2 1 1 1 0 1 4 1 6 1 1 1 1 1 1 1-2 1-2 1-1 1 0 1 0 1-2 1 3V3289H0Z" fill="#E0B400"/><path d="M0 3266l1-1 1 0 1-2 1-3 1-2 1 1 1 0 1 2 1 2 1-1 1-1 1 0 1-1 1-2 1 0 1-1 1-2 1 2 1 2 1 0 1 3 1 2 1 0 1 1 1 0 1-1 1-2 1-1 1 1 1 0 1 3 1 1 1 0 1-1 1 0 1 0 1 0 1 0 1 0 1-2 1-2 1-1 1-4 1-2 1 1 1 1 1 2 1 3 1 2 1 0 1 1 1-1 1-1 1-1 1 0 1 1 1-2 1 0 1-1 1-2 1 0 1 0 1-1 1-1 1 0 1-2 1-1 1 0 1 1 1 1 1 2 1 3 1 2 1 1 1 0 1 0 1-1 1 0 1 1 1-2 1-1 1 0 1-2 1-2 1 1 1 1 1 1 1 3 1 1 1 0 1 0 1 1 1-2 1 0 1 1 1 0 1 0 1 0 1-2 1-3 1-1 1 1 1 1 1 3 1 4 1 0 1-1 1 1 1 0 1-2 1-1 1-1 1-2 1 1 1 1 1 0 1 0 1 2 1 2 1 0 1 0 1-1 1-1 1 1 1 2 1 0 1-1 1-1 1-3 1-4 1 0 1-1 1-2 1 1 1 4 1 2 1 3 1 2 1-2 1-3 1-1 1 0 1 0 1 2 1 0 1-1 1 0 1-1 1-3 1-2 1 0 1 1 1 0 1 1 1 2 1 0 1 1 1 1 1-1 1 0 1 3 1 1 1 1 1 1 1-1 1-4 1-1 1 0 1-1 1 4 1 4 1 3 1 0 1-2 1-4 1-5 1-1 1-2 1-1 1 2 1 2 1 1 1 0 1 1 1-1 1-2 1 0 1 0 1-2 1 1 1 2 1 2 1 2 1 2 1-1 1-1 1 1 1 1 1 0 1 0 1 0 1 0 1 1 1 2 1 0 1-1 1-1 1-1 1-2 1-1 1 0 1-3 1 0 1 1 1-2 1 0 1 1 1 0 1-1 1 0 1 0 1-3 1 0 1-1 1-3 1-1 1 1 1 1 1 2 1 2 1 0 1 0 1 0 1 2 1 1 1 1 1 1 1 1 1-1 1 2V3289H0Z" fill="#56A64B"/></g></svg><span id="t34" style="position:absolute;left:420.92px;top:319.70px;height:18px;line-height:18px;font-size:12.3px;white-space:pre;color:#24292e;letter-spacing:0.317px;transform:translateX(-100%);">0 B/s</span><span id="t35" style="position:absolute;left:420.67px;top:286.87px;height:18px;line-height:18px;font-size:12.3px;white-space:pre;color:#24292e;letter-spacing:0.065px;transform:translateX(-100%);">10 MB/s</span><span id="t36" style="position:absolute;left:421.04px;top:254.03px;height:18px;line-height:18px;font-size:12.3px;white-space:pre;color:#24292e;letter-spacing:0.440px;transform:translateX(-100%);">20 MB/s</span><span id="t37" style="position:absolute;left:421.04px;top:221.20px;height:18px;line-height:18px;font-size:12.3px;white-space:pre;color:#24292e;letter-spacing:0.440px;transform:translateX(-100%);">30 MB/s</span><span id="t38" style="position:absolute;left:426.82px;top:334.90px;height:18px;line-height:18px;font-size:12.3px;white-space:pre;color:#24292e;letter-spacing:-0.008px;transform:translateX(-50%);">13:45</span><span id="t39" style="position:absolute;left:490.01px;top:334.90px;height:18px;line-height:18px;font-size:12.3px;white-space:pre;color:#24292e;letter-spacing:0.117px;transform:translateX(-50%);">14:00</span><span id="t40" style="position:absolute;left:552.85px;top:334.90px;height:18px;line-height:18px;font-size:12.3px;white-space:pre;color:#24292e;letter-spacing:-0.450px;transform:translateX(-50%);">14:15</span><span id="t41" style="position:absolute;left:616.26px;top:334.90px;height:18px;line-height:18px;font-size:12.3px;white-space:pre;color:#24292e;letter-spacing:0.117px;transform:translateX(-50%);">14:30</span><div class="mk" style="left:373.2px;top:362.15px;background:#56A64B"></div><span id="t42" style="position:absolute;left:395.25px;top:354.75px;height:18px;line-height:18px;font-size:12.3px;white-space:pre;color:#24292e;letter-spacing:0.593px;">ruler-querier-78f54b4755-28cmg</span><div class="mk" style="left:373.2px;top:385.65px;background:#E0B400"></div><span id="t43" style="position:absolute;left:395.25px;top:378.25px;height:18px;line-height:18px;font-size:12.3px;white-space:pre;color:#24292e;letter-spacing:0.585px;">ruler-querier-78f54b4755-4dv7m</span><div class="mk" style="left:373.2px;top:409.15px;background:#5794F2"></div><span id="t44" style="position:absolute;left:395.25px;top:401.75px;height:18px;line-height:18px;font-size:12.3px;white-space:pre;color:#24292e;letter-spacing:0.581px;">ruler-querier-78f54b4755-68c7p</span><div class="panel" style="left:704px;top:174px"></div><span id="t45" style="position:absolute;left:713.20px;top:179.60px;height:22px;line-height:22px;font-size:14.5px;white-space:pre;color:#24292e;-webkit-text-stroke:0.3px #24292e;letter-spacing:0.464px;">Inflight requests (per pod)</span><svg style="left:0;top:0" width="1400" height="1400" viewBox="0 0 1400 1400"><g stroke="#e9eaeb" stroke-width="1" fill="none" shape-rendering="crispEdges"><path d="M744.5 223.25V382.00"/><path d="M814.5 223.25V382.00"/><path d="M884.5 223.25V382.00"/><path d="M954.5 223.25V382.00"/><path d="M743.50 377.5H1023.50"/><path d="M743.50 326.5H1023.50"/><path d="M743.50 274.5H1023.50"/><path d="M743.50 223.5H1023.50"/></g><g transform="translate(743.5 0) scale(1.16667 0.1)"><path d="M0 3755h6l1-10h1l1 10h7l1-10l1 10h1l1-10l1 10h3l1-10l1 10h8l1-10l1 10l1-10h1l1 10l1-10l1 10h7l1-10l1 10h7l1-10l1 10h7l1-10l1 10h2l1-10l1 10h3l1-10l1 10h10l1-10l1 10h3l1-10l1 10h1l1-10l1 10h1l1-10l1 10h1l1-10l1 10l1-10l1 10h12l1-10l1 10h4l1-10l1 10h9l1-10h1l1 10h15l1-10h1l1 10l1-10l1 10h5l1-10l1 10h2l1-10l1 10l1-10l1 10h2l1-10l1 10h3l1-10l1 10h4l1-10l1 10h1l1-10l1 10h13l1-10l1 10h22l1-10l1 10h13V3780H0Z" fill="#56A64B" fill-opacity="0.014"/><path d="M0 3755h6l1-10h1l1 10h7l1-10l1 10h1l1-10l1 10h3l1-10l1 10h8l1-10l1 10l1-10h1l1 10l1-10l1 10h7l1-10l1 10h7l1-10l1 10h7l1-10l1 10h2l1-10l1 10h3l1-10l1 10h10l1-10l1 10h3l1-10l1 10h1l1-10l1 10h1l1-10l1 10h1l1-10l1 10l1-10l1 10h12l1-10l1 10h4l1-10l1 10h9l1-10h1l1 10h15l1-10h1l1 10l1-10l1 10h5l1-10l1 10h2l1-10l1 10l1-10l1 10h2l1-10l1 10h3l1-10l1 10h4l1-10l1 10h1l1-10l1 10h13l1-10l1 10h22l1-10l1 10h13" fill="none" stroke="#56A64B" stroke-width="1.0" stroke-linejoin="round" vector-effect="non-scaling-stroke"/></g><g transform="translate(743.5 0) scale(1.16667 0.1)"><path d="M0 2375h136l1 170h103V3780H0Z" fill="#E0B400" fill-opacity="0.014"/><path d="M0 2375h136l1 170h103" fill="none" stroke="#E0B400" stroke-width="1.0" stroke-linejoin="round" vector-effect="non-scaling-stroke"/></g></svg><span id="t46" style="position:absolute;left:737.66px;top:368.80px;height:18px;line-height:18px;font-size:12.3px;white-space:pre;color:#24292e;letter-spacing:0.056px;transform:translateX(-100%);">0</span><span id="t47" style="position:absolute;left:738.16px;top:317.30px;height:18px;line-height:18px;font-size:12.3px;white-space:pre;color:#24292e;letter-spacing:0.562px;transform:translateX(-100%);">50</span><span id="t48" style="position:absolute;left:737.15px;top:265.80px;height:18px;line-height:18px;font-size:12.3px;white-space:pre;color:#24292e;letter-spacing:-0.450px;transform:translateX(-100%);">100</span><span id="t49" style="position:absolute;left:737.15px;top:214.30px;height:18px;line-height:18px;font-size:12.3px;white-space:pre;color:#24292e;letter-spacing:-0.450px;transform:translateX(-100%);">150</span><span id="t50" style="position:absolute;left:743.92px;top:383.60px;height:18px;line-height:18px;font-size:12.3px;white-space:pre;color:#24292e;letter-spacing:-0.008px;transform:translateX(-50%);">13:45</span><span id="t51" style="position:absolute;left:813.99px;top:383.60px;height:18px;line-height:18px;font-size:12.3px;white-space:pre;color:#24292e;letter-spacing:0.117px;transform:translateX(-50%);">14:00</span><span id="t52" style="position:absolute;left:883.70px;top:383.60px;height:18px;line-height:18px;font-size:12.3px;white-space:pre;color:#24292e;letter-spacing:-0.450px;transform:translateX(-50%);">14:15</span><span id="t53" style="position:absolute;left:953.99px;top:383.60px;height:18px;line-height:18px;font-size:12.3px;white-space:pre;color:#24292e;letter-spacing:0.117px;transform:translateX(-50%);">14:30</span><div class="mk" style="left:717.2px;top:411.70px;background:#56A64B"></div><span id="t54" style="position:absolute;left:739.25px;top:404.00px;height:18px;line-height:18px;font-size:12.3px;white-space:pre;color:#24292e;letter-spacing:0.086px;">avg</span><div class="mk" style="left:770.2px;top:411.70px;background:#E0B400"></div><span id="t55" style="position:absolute;left:791.75px;top:404.00px;height:18px;line-height:18px;font-size:12.3px;white-space:pre;color:#24292e;letter-spacing:0.474px;">highest</span><div class="panel" style="left:1048px;top:174px"></div><span id="t56" style="position:absolute;left:1057.20px;top:179.60px;height:22px;line-height:22px;font-size:14.5px;white-space:pre;color:#24292e;-webkit-text-stroke:0.3px #24292e;letter-spacing:0.389px;">Ingress TCP connections (per pod)</span><svg style="left:1311.00px;top:182.80px" width="16" height="16" viewBox="0 0 24 24" fill="#50555a"><path d="M12,2A10,10,0,1,0,22,12,10.011,10.011,0,0,0,12,2Zm0,18a8,8,0,1,1,8-8A8.009,8.009,0,0,1,12,20Zm0-8.500a1,1,0,0,0-1,1v3a1,1,0,0,0,2,0v-3A1,1,0,0,0,12,11.500Zm0-4a1.250,1.250,0,1,0,1.250,1.250A1.250,1.250,0,0,0,12,7.500Z"/></svg><svg style="left:0;top:0" width="1400" height="1400" viewBox="0 0 1400 1400"><g stroke="#e9eaeb" stroke-width="1" fill="none" shape-rendering="crispEdges"><path d="M1082.5 223.25V382.50"/><path d="M1154.5 223.25V382.50"/><path d="M1225.5 223.25V382.50"/><path d="M1297.5 223.25V382.50"/><path d="M1081.50 378.5H1367.50"/><path d="M1081.50 328.5H1367.50"/><path d="M1081.50 278.5H1367.50"/><path d="M1081.50 228.5H1367.50"/></g><g transform="translate(1081.5 0) scale(1.19167 0.1)"><path d="M0 3255h4l1 10l1 20l1 40l1-20l1-20l1-20l1-10h2l1-10h11l1 50h12l1-10l1-20l1-20l1 10h6l1-10l1 10h29l1-10l1 10h11l1-10l1 10h23l1-10l1 10h5l1-10l1 10h4l1-10l1 10h27l1-10l1 10h36l1-10h1l1 10h13l1-10l1 10h25V3785H0Z" fill="#56A64B" fill-opacity="0.014"/><path d="M0 3255h4l1 10l1 20l1 40l1-20l1-20l1-20l1-10h2l1-10h11l1 50h12l1-10l1-20l1-20l1 10h6l1-10l1 10h29l1-10l1 10h11l1-10l1 10h23l1-10l1 10h5l1-10l1 10h4l1-10l1 10h27l1-10l1 10h36l1-10h1l1 10h13l1-10l1 10h25" fill="none" stroke="#56A64B" stroke-width="1.0" stroke-linejoin="round" vector-effect="non-scaling-stroke"/></g><g transform="translate(1081.5 0) scale(1.19167 0.1)"><path d="M0 2485h1l1-50l1 50l1-50l1 50l1-50l1 50l1-50h1l1 100l1-100l1 50h3l1-50l1 50l1-50l1 50l1-50l1 50h1l1-50l1 50h1l1-50h1l1 100l1-50l1 50l1-50l1-50l1-50l1 50l1 50h1l1-50l1 50l1-50l1 50l1-50h8l1 50l1-100l1 50h6l1 50h5l1-50l1 50h1l1-50l1 50l1-50l1 50h1l1-50h1l1 50h1l1-50h1l1 50l1-50h1l1 50l1-50l1 50l1-50l1 50l1-50l1 50l1-50l1 50h1l1-50l1 50h1l1-100l1 100l1-50h4l1 50l1-50h1l1 50l1-50l1 50h1l1-50l1 50l1-50l1 50l1-50h2l1 50h1l1-50h1l1 50l1-50l1 50h2l1-50l1 50l1-50l1 50h7l1-50l1 150l1-50l1 50l1-50h1l1 50l1-50l1 50l1-50l1 50l1-50h2l1 50l1-50l1 50h1l1-50h1l1 50l1-50h1l1 50l1-50l1 50h5l1 50l1-50h4l1-50l1 50l1-50l1 50h13l1-50h3l1 50h5l1-50l1 50h1l1-50l1 50h1l1-50l1 50h5l1-50l1 50h2l1-50l1 50h8l1-50l1 50h3l1-50l1 50h1l1-50l1 50h2l1-50l1 50V3785H0Z" fill="#E0B400" fill-opacity="0.014"/><path d="M0 2485h1l1-50l1 50l1-50l1 50l1-50l1 50l1-50h1l1 100l1-100l1 50h3l1-50l1 50l1-50l1 50l1-50l1 50h1l1-50l1 50h1l1-50h1l1 100l1-50l1 50l1-50l1-50l1-50l1 50l1 50h1l1-50l1 50l1-50l1 50l1-50h8l1 50l1-100l1 50h6l1 50h5l1-50l1 50h1l1-50l1 50l1-50l1 50h1l1-50h1l1 50h1l1-50h1l1 50l1-50h1l1 50l1-50l1 50l1-50l1 50l1-50l1 50l1-50l1 50h1l1-50l1 50h1l1-100l1 100l1-50h4l1 50l1-50h1l1 50l1-50l1 50h1l1-50l1 50l1-50l1 50l1-50h2l1 50h1l1-50h1l1 50l1-50l1 50h2l1-50l1 50l1-50l1 50h7l1-50l1 150l1-50l1 50l1-50h1l1 50l1-50l1 50l1-50l1 50l1-50h2l1 50l1-50l1 50h1l1-50h1l1 50l1-50h1l1 50l1-50l1 50h5l1 50l1-50h4l1-50l1 50l1-50l1 50h13l1-50h3l1 50h5l1-50l1 50h1l1-50l1 50h1l1-50l1 50h5l1-50l1 50h2l1-50l1 50h8l1-50l1 50h3l1-50l1 50h1l1-50l1 50h2l1-50l1 50" fill="none" stroke="#E0B400" stroke-width="1.0" stroke-linejoin="round" vector-effect="non-scaling-stroke"/></g><g transform="translate(1081.5 0) scale(1.19167 0.1)"><path d="M0 3785h240" fill="none" stroke="#5794F2" stroke-width="1.0" stroke-linejoin="round" vector-effect="non-scaling-stroke"/></g></svg><span id="t57" style="position:absolute;left:1075.66px;top:369.30px;height:18px;line-height:18px;font-size:12.3px;white-space:pre;color:#24292e;letter-spacing:0.056px;transform:translateX(-100%);">0</span><span id="t58" style="position:absolute;left:1075.15px;top:319.30px;height:18px;line-height:18px;font-size:12.3px;white-space:pre;color:#24292e;letter-spacing:-0.450px;transform:translateX(-100%);">10</span><span id="t59" style="position:absolute;left:1075.66px;top:269.30px;height:18px;line-height:18px;font-size:12.3px;white-space:pre;color:#24292e;letter-spacing:0.062px;transform:translateX(-100%);">20</span><span id="t60" style="position:absolute;left:1075.66px;top:219.30px;height:18px;line-height:18px;font-size:12.3px;white-space:pre;color:#24292e;letter-spacing:0.062px;transform:translateX(-100%);">30</span><span id="t61" style="position:absolute;left:1081.94px;top:384.10px;height:18px;line-height:18px;font-size:12.3px;white-space:pre;color:#24292e;letter-spacing:-0.008px;transform:translateX(-50%);">13:45</span><span id="t62" style="position:absolute;left:1153.51px;top:384.10px;height:18px;line-height:18px;font-size:12.3px;white-space:pre;color:#24292e;letter-spacing:0.117px;transform:translateX(-50%);">14:00</span><span id="t63" style="position:absolute;left:1224.72px;top:384.10px;height:18px;line-height:18px;font-size:12.3px;white-space:pre;color:#24292e;letter-spacing:-0.450px;transform:translateX(-50%);">14:15</span><span id="t64" style="position:absolute;left:1296.51px;top:384.10px;height:18px;line-height:18px;font-size:12.3px;white-space:pre;color:#24292e;letter-spacing:0.117px;transform:translateX(-50%);">14:30</span><div class="mk" style="left:1061.2px;top:411.70px;background:#56A64B"></div><span id="t65" style="position:absolute;left:1083.25px;top:404.00px;height:18px;line-height:18px;font-size:12.3px;white-space:pre;color:#24292e;letter-spacing:0.086px;">avg</span><div class="mk" style="left:1114.2px;top:411.70px;background:#E0B400"></div><span id="t66" style="position:absolute;left:1135.75px;top:404.00px;height:18px;line-height:18px;font-size:12.3px;white-space:pre;color:#24292e;letter-spacing:0.474px;">highest</span><div class="mk" style="left:1188.0px;top:411.70px;background:#5794F2"></div><span id="t67" style="position:absolute;left:1210.75px;top:404.00px;height:18px;line-height:18px;font-size:12.3px;white-space:pre;color:#24292e;letter-spacing:0.348px;">limit</span><div class="panel" style="left:16px;top:478px"></div><span id="t68" style="position:absolute;left:25.20px;top:483.60px;height:22px;line-height:22px;font-size:14.5px;white-space:pre;color:#24292e;-webkit-text-stroke:0.3px #24292e;letter-spacing:0.423px;">Receive bandwidth</span><svg style="left:0;top:0" width="1400" height="1400" viewBox="0 0 1400 1400"><g stroke="#e9eaeb" stroke-width="1" fill="none" shape-rendering="crispEdges"><path d="M81.5 527.25V663.00"/><path d="M144.5 527.25V663.00"/><path d="M208.5 527.25V663.00"/><path d="M272.5 527.25V663.00"/><path d="M80.25 658.5H335.00"/><path d="M80.25 622.5H335.00"/><path d="M80.25 585.5H335.00"/><path d="M80.25 549.5H335.00"/></g><g transform="translate(80.25 0) scale(1.06146 0.1)"><path d="M0 5828l1-140 1-26 1 140 1-120 1-53 1-2 1 124 1-55 1 68 1-169 1 53 1-347 1 427 1-166 1 106 1-181 1 94 1 239 1-180 1-57 1 47 1-67 1 94 1-27 1-9 1 99 1-27 1 6 1 59 1-228 1 111 1 49 1-19 1 190 1-140 1-45 1-20 1 191 1-262 1 267 1-78 1 36 1-115 1 146 1-212 1 20 1-24 1 1 1-17 1 41 1 95 1-33 1-58 1 250 1-181 1 18 1-107 1 24 1 67 1-105 1-94 1 65 1 83 1 7 1 206 1-147 1-65 1-9 1 141 1-12 1 0 1-4 1-39 1-37 1 76 1-45 1 89 1-142 1-41 1 61 1 192 1-413 1 250 1-93 1 204 1-105 1-65 1 21 1-16 1 5 1 59 1 7 1-61 1 26 1-16 1-87 1 8 1 56 1-104 1 107 1 30 1-77 1 35 1 125 1-324 1 300 1-97 1-38 1-18 1 122 1-53 1-81 1-96 1 6 1 94 1-53 1 28 1 136 1-77 1-2 1 173 1-213 1 156 1-52 1 86 1-58 1-113 1 174 1-57 1-57 1-50 1-90 1-50 1 105 1 206 1-72 1 142 1-277 1 126 1-96 1 127 1 3 1-5 1-22 1-31 1 112 1-129 1-24 1 298 1-117 1-31 1-24 1-213 1 66 1 147 1-312 1 143 1 157 1 27 1-165 1 151 1-298 1-12 1 371 1-121 1 11 1-166 1 50 1 16 1-23 1 72 1 50 1-76 1-50 1 81 1 9 1 62 1-170 1 59 1 50 1 3 1-22 1 9 1-84 1-58 1 63 1 58 1 56 1-129 1-4 1-31 1 147 1 9 1 87 1-155 1-48 1-46 1 183 1-160 1 173 1-187 1 10 1 141 1-59 1-20 1 160 1-273 1 278 1-87 1-45 1-19 1-197 1 141 1 193 1-94 1 139 1-188 1 69 1-84 1 148 1-54 1-127 1-8 1 95 1 26 1 21 1 14 1 10 1-239 1 143 1 126 1-46 1 44 1-88 1-148 1-85 1 227 1-34 1 151 1-72V6590H0Z" fill="#E0B400"/><path d="M0 6250l1-10 1-9 1-14 1-45 1-34 1 40 1 40 1 68 1-114 1 19 1-53 1 151 1-86 1 38 1 17 1 48 1-82 1-39 1-46 1-51 1-89 1 103 1-47 1 42 1-16 1 43 1-34 1 97 1 1 1-24 1 2 1-22 1-8 1 98 1-13 1-57 1-20 1-5 1-1 1-57 1 96 1-4 1-13 1 108 1-50 1 2 1 41 1-10 1-35 1 6 1-9 1 21 1-19 1-135 1 181 1-145 1 8 1 30 1 63 1 10 1 86 1-115 1-44 1-48 1 19 1 100 1-58 1 43 1-99 1 63 1 48 1 46 1-38 1-83 1 17 1-61 1 77 1 4 1-43 1-27 1 4 1 60 1-87 1-82 1 77 1 144 1 40 1 41 1-51 1-81 1-37 1-20 1 114 1-158 1-58 1 67 1 28 1 14 1-41 1 62 1-31 1-63 1 19 1 99 1-60 1 28 1-50 1 49 1-2 1 2 1 12 1-108 1-3 1-37 1-4 1 0 1 58 1 18 1 17 1 120 1-94 1 76 1-19 1-55 1 62 1 61 1-42 1-87 1-12 1 65 1 25 1 41 1-77 1 17 1 150 1-128 1-77 1 50 1 207 1-91 1-39 1-44 1 52 1-120 1 58 1 28 1 24 1-112 1-7 1-82 1-55 1 52 1 124 1-66 1-2 1-41 1 8 1-11 1 131 1 36 1-66 1 33 1-35 1-47 1 178 1-114 1-48 1 38 1-132 1-41 1 104 1 163 1-74 1 37 1-120 1-29 1-48 1 79 1-111 1 120 1 70 1-83 1-35 1 25 1 55 1-18 1-67 1-46 1 68 1 189 1-31 1-103 1 11 1-4 1 57 1-62 1-15 1 58 1-29 1 12 1 68 1 7 1-114 1 39 1 60 1-92 1-12 1-72 1 53 1-50 1 130 1-31 1 39 1-44 1-19 1 75 1-17 1 16 1-122 1-7 1-107 1 49 1 74 1 97 1 4 1-132 1 11 1 83 1-173 1 25 1-67 1 221 1 108 1-99 1-83 1 22 1-9 1-28 1 8 1-16V6590H0Z" fill="#56A64B"/></g></svg><span id="t69" style="position:absolute;left:74.67px;top:649.80px;height:18px;line-height:18px;font-size:12.3px;white-space:pre;color:#24292e;letter-spacing:0.317px;transform:translateX(-100%);">0 B/s</span><span id="t70" style="position:absolute;left:74.69px;top:613.30px;height:18px;line-height:18px;font-size:12.3px;white-space:pre;color:#24292e;letter-spacing:0.344px;transform:translateX(-100%);">5 MB/s</span><span id="t71" style="position:absolute;left:74.42px;top:576.80px;height:18px;line-height:18px;font-size:12.3px;white-space:pre;color:#24292e;letter-spacing:0.065px;transform:translateX(-100%);">10 MB/s</span><span id="t72" style="position:absolute;left:74.29px;top:540.30px;height:18px;line-height:18px;font-size:12.3px;white-space:pre;color:#24292e;letter-spacing:-0.060px;transform:translateX(-100%);">15 MB/s</span><span id="t73" style="position:absolute;left:80.58px;top:664.60px;height:18px;line-height:18px;font-size:12.3px;white-space:pre;color:#24292e;letter-spacing:-0.008px;transform:translateX(-50%);">13:45</span><span id="t74" style="position:absolute;left:144.33px;top:664.60px;height:18px;line-height:18px;font-size:12.3px;white-space:pre;color:#24292e;letter-spacing:0.117px;transform:translateX(-50%);">14:00</span><span id="t75" style="position:absolute;left:207.73px;top:664.60px;height:18px;line-height:18px;font-size:12.3px;white-space:pre;color:#24292e;letter-spacing:-0.450px;transform:translateX(-50%);">14:15</span><span id="t76" style="position:absolute;left:271.71px;top:664.60px;height:18px;line-height:18px;font-size:12.3px;white-space:pre;color:#24292e;letter-spacing:0.117px;transform:translateX(-50%);">14:30</span><div class="mk" style="left:29.2px;top:692.40px;background:#56A64B"></div><span id="t77" style="position:absolute;left:51.25px;top:685.00px;height:18px;line-height:18px;font-size:12.3px;white-space:pre;color:#24292e;letter-spacing:0.601px;">ruler-query-frontend-7ddc66bdbb-5xpw7</span><div class="mk" style="left:29.2px;top:716.00px;background:#E0B400"></div><span id="t78" style="position:absolute;left:51.25px;top:707.60px;height:18px;line-height:18px;font-size:12.3px;white-space:pre;color:#24292e;letter-spacing:0.600px;">ruler-query-frontend-7ddc66bdbb-8hrts</span><div class="panel" style="left:360px;top:478px"></div><span id="t79" style="position:absolute;left:369.20px;top:483.60px;height:22px;line-height:22px;font-size:14.5px;white-space:pre;color:#24292e;-webkit-text-stroke:0.3px #24292e;letter-spacing:0.488px;">Transmit bandwidth</span><svg style="left:0;top:0" width="1400" height="1400" viewBox="0 0 1400 1400"><g stroke="#e9eaeb" stroke-width="1" fill="none" shape-rendering="crispEdges"><path d="M438.5 527.25V663.00"/><path d="M498.5 527.25V663.00"/><path d="M559.5 527.25V663.00"/><path d="M619.5 527.25V663.00"/><path d="M437.25 658.5H679.00"/><path d="M437.25 627.5H679.00"/><path d="M437.25 595.5H679.00"/><path d="M437.25 563.5H679.00"/><path d="M437.25 531.5H679.00"/></g><g transform="translate(437.25 0) scale(1.00729 0.1)"><path d="M0 5688l1-141 1 205 1 92 1-28 1-62 1-58 1-33 1-7 1-39 1 117 1 39 1-301 1 32 1 223 1-58 1 38 1-173 1 59 1 279 1-173 1 51 1-76 1 65 1-62 1 79 1-144 1 127 1-118 1 199 1-145 1-11 1 22 1 35 1 175 1-254 1 142 1-158 1 41 1-22 1-19 1 7 1 113 1-9 1 20 1 8 1 22 1-55 1-396 1 326 1-5 1-2 1 116 1-123 1 49 1-18 1 61 1-195 1 279 1-99 1 30 1-20 1-139 1-6 1 95 1 132 1-164 1 74 1 147 1-204 1 184 1-137 1-68 1-54 1 210 1-122 1-12 1-89 1 123 1-122 1 180 1-47 1-167 1 147 1-61 1-76 1 212 1 69 1 16 1-163 1-26 1 31 1-102 1-60 1 88 1 86 1 92 1-118 1-18 1 70 1 72 1 2 1-17 1-15 1-146 1-40 1 96 1 89 1-108 1 122 1-12 1-274 1 383 1-199 1 16 1-75 1 133 1-41 1-126 1 155 1 13 1 9 1 70 1 38 1-207 1 129 1-47 1-142 1 53 1 131 1-142 1 64 1 63 1-215 1 196 1-22 1-65 1-4 1-2 1 165 1-123 1-57 1 60 1-38 1-92 1-3 1 81 1 36 1-165 1 149 1-28 1 7 1 71 1 73 1-224 1 81 1 77 1-26 1-46 1 130 1-195 1 249 1-167 1 73 1 7 1-104 1 85 1-166 1-9 1-24 1 73 1 121 1-110 1 103 1-217 1 109 1 37 1 215 1-272 1 102 1-19 1 72 1 147 1-180 1-66 1 87 1-265 1 127 1-28 1 46 1 136 1-9 1 5 1-179 1 2 1 112 1 37 1-65 1 158 1-21 1-159 1-44 1 122 1-103 1 188 1-120 1 70 1-90 1-22 1 217 1-130 1 86 1-243 1 112 1-138 1 95 1 124 1 14 1 127 1-236 1-140 1 198 1-39 1 56 1-27 1-124 1-42 1 170 1-78 1 223 1-123 1-31 1-227 1 243 1-176 1 46 1 111 1-11 1-12 1 127 1-122V6590H0Z" fill="#E0B400"/><path d="M0 6296l1-106 1-71 1 1 1 173 1-168 1 85 1-37 1-3 1 13 1-107 1-55 1 76 1-5 1 30 1-9 1 68 1-18 1 95 1 18 1 4 1 50 1-75 1-170 1 16 1 96 1 37 1 61 1-82 1-29 1 72 1 104 1-121 1 54 1 40 1-101 1 7 1 34 1-124 1 138 1-151 1 35 1-15 1 103 1-109 1-54 1 154 1-107 1 16 1 84 1-31 1-101 1 52 1 71 1 78 1-81 1-32 1 38 1 6 1-56 1 68 1-10 1-46 1-13 1-109 1 46 1-37 1 18 1 45 1 17 1 8 1 93 1-68 1-102 1 120 1 35 1-73 1-43 1 101 1 7 1-74 1-30 1 7 1 65 1-152 1 61 1 59 1 5 1-182 1 220 1-104 1 98 1-209 1 52 1-25 1-8 1 1 1 60 1 90 1 123 1-64 1-60 1-49 1-97 1 30 1 5 1 10 1 147 1-165 1 84 1-11 1 51 1-53 1 40 1-14 1-127 1 20 1-55 1 51 1 104 1-20 1 10 1-11 1 28 1-50 1 166 1-58 1 17 1-83 1-3 1 95 1 21 1-93 1 42 1-30 1 71 1-50 1 38 1-94 1 19 1 145 1-50 1-61 1-29 1 21 1-12 1-19 1-95 1 21 1 12 1-39 1 29 1 83 1 75 1-25 1-21 1-114 1 97 1 100 1-130 1 15 1-44 1 35 1-21 1 169 1-111 1-9 1-87 1 36 1-4 1-2 1 46 1-43 1 23 1-3 1 160 1-4 1-142 1 21 1 51 1-33 1-151 1 3 1 124 1-7 1-17 1 27 1 9 1-93 1-9 1-8 1 85 1 0 1-30 1-79 1 39 1 6 1 10 1 30 1 52 1-40 1 17 1 82 1-91 1 74 1 19 1-48 1-30 1-7 1-32 1 8 1 0 1 50 1 16 1-26 1-63 1 29 1 102 1-129 1-36 1 141 1 82 1 0 1-50 1 67 1-132 1 5 1-93 1 80 1 112 1 96 1-68 1-11 1-252 1-22 1 81 1 35 1 41 1-58 1 105 1-30V6590H0Z" fill="#56A64B"/></g></svg><span id="t80" style="position:absolute;left:431.67px;top:649.80px;height:18px;line-height:18px;font-size:12.3px;white-space:pre;color:#24292e;letter-spacing:0.317px;transform:translateX(-100%);">0 B/s</span><span id="t81" style="position:absolute;left:431.71px;top:618.05px;height:18px;line-height:18px;font-size:12.3px;white-space:pre;color:#24292e;letter-spacing:0.359px;transform:translateX(-100%);">2.50 MB/s</span><span id="t82" style="position:absolute;left:431.69px;top:586.30px;height:18px;line-height:18px;font-size:12.3px;white-space:pre;color:#24292e;letter-spacing:0.344px;transform:translateX(-100%);">5 MB/s</span><span id="t83" style="position:absolute;left:431.49px;top:554.55px;height:18px;line-height:18px;font-size:12.3px;white-space:pre;color:#24292e;letter-spacing:0.141px;transform:translateX(-100%);">7.50 MB/s</span><span id="t84" style="position:absolute;left:431.42px;top:522.80px;height:18px;line-height:18px;font-size:12.3px;white-space:pre;color:#24292e;letter-spacing:0.065px;transform:translateX(-100%);">10 MB/s</span><span id="t85" style="position:absolute;left:437.53px;top:664.60px;height:18px;line-height:18px;font-size:12.3px;white-space:pre;color:#24292e;letter-spacing:-0.008px;transform:translateX(-50%);">13:45</span><span id="t86" style="position:absolute;left:498.03px;top:664.60px;height:18px;line-height:18px;font-size:12.3px;white-space:pre;color:#24292e;letter-spacing:0.117px;transform:translateX(-50%);">14:00</span><span id="t87" style="position:absolute;left:558.19px;top:664.60px;height:18px;line-height:18px;font-size:12.3px;white-space:pre;color:#24292e;letter-spacing:-0.450px;transform:translateX(-50%);">14:15</span><span id="t88" style="position:absolute;left:618.91px;top:664.60px;height:18px;line-height:18px;font-size:12.3px;white-space:pre;color:#24292e;letter-spacing:0.117px;transform:translateX(-50%);">14:30</span><div class="mk" style="left:373.2px;top:692.40px;background:#56A64B"></div><span id="t89" style="position:absolute;left:395.25px;top:685.00px;height:18px;line-height:18px;font-size:12.3px;white-space:pre;color:#24292e;letter-spacing:0.601px;">ruler-query-frontend-7ddc66bdbb-5xpw7</span><div class="mk" style="left:373.2px;top:716.00px;background:#E0B400"></div><span id="t90" style="position:absolute;left:395.25px;top:707.60px;height:18px;line-height:18px;font-size:12.3px;white-space:pre;color:#24292e;letter-spacing:0.600px;">ruler-query-frontend-7ddc66bdbb-8hrts</span><div class="panel" style="left:704px;top:478px"></div><span id="t91" style="position:absolute;left:713.20px;top:483.60px;height:22px;line-height:22px;font-size:14.5px;white-space:pre;color:#24292e;-webkit-text-stroke:0.3px #24292e;letter-spacing:0.464px;">Inflight requests (per pod)</span><svg style="left:0;top:0" width="1400" height="1400" viewBox="0 0 1400 1400"><g stroke="#e9eaeb" stroke-width="1" fill="none" shape-rendering="crispEdges"><path d="M736.5 527.25V686.50"/><path d="M808.5 527.25V686.50"/><path d="M880.5 527.25V686.50"/><path d="M952.5 527.25V686.50"/><path d="M735.50 682.5H1023.50"/><path d="M735.50 633.5H1023.50"/><path d="M735.50 585.5H1023.50"/><path d="M735.50 537.5H1023.50"/></g><g transform="translate(735.5 0) scale(1.20000 0.1)"><path d="M0 6695l1 20l1 30l1-40l1 20h1l1-10l1 10h1l1-20l1 10l1-40l1-50h1l1-30l1 40l1 60l1 20l1 20l1-30l1 10l1-20l1 50l1-10l1-30l1-10l1 10l1-10l1 20l1-10l1 30l1-20l1-40l1-30l1 80l1-10l1-30l1 30l1 10l1-10l1-20l1 30l1-40l1-20l1-50l1 120l1-10l1 20l1-40l1 20l1-10l1-20l1 10l1-10l1 20l1 10l1 10l1-30l1 20h1l1-110l1 90l1-140l1 130l1 20l1 10l1 10l1-20l1-20l1 10l1 20l1 10l1-100l1 100l1-20l1-10l1-10l1 20l1 20l1-20l1-60l1 90l1-40l1-50l1 30l1 30l1 10l1-40l1 20l1 40l1-10l1-30l1 10l1 20h1l1-30l1 40l1-10l1-20l1 10l1 10h1l1-20h3l1 10l1-40l1 20l1-10l1 10l1 20l1-10l1-30l1 20h3l1-20l1 20l1-10l1 30l1-10l1-10l1-10l1 20l1 10l1-20l1 20l1-10l1-30l1 30l1 20l1-30l1 30l1-30h1l1 10l1-20l1-50l1 40l1 40h1l1-20l1-10l1 10h1l1 30l1-50l1 40l1-40l1 40h1l1-10l1 10l1 10l1-80l1 50l1 20l1-10l1-110l1 50h1l1 40l1-10l1 30l1-20h1l1 20l1-80l1 90l1 10l1-30l1-10l1 10l1-30l1-40l1 80l1-90l1 80l1-40l1 50h2l1 10l1 10l1-30h1l1 10l1 20l1-90l1 60l1-40l1 90l1-40h2l1-80l1 70l1-10l1 20l1 30l1-90l1 80l1-10l1-30l1-70l1 80h1l1 30l1-20l1 10h2l1 10l1-20l1-30l1 50l1 10l1-30l1 20l1-40l1 20l1 30l1-40l1 30l1-20h1l1 10l1 10l1-20l1 10h9V6825H0Z" fill="#56A64B" fill-opacity="0.014"/><path d="M0 6695l1 20l1 30l1-40l1 20h1l1-10l1 10h1l1-20l1 10l1-40l1-50h1l1-30l1 40l1 60l1 20l1 20l1-30l1 10l1-20l1 50l1-10l1-30l1-10l1 10l1-10l1 20l1-10l1 30l1-20l1-40l1-30l1 80l1-10l1-30l1 30l1 10l1-10l1-20l1 30l1-40l1-20l1-50l1 120l1-10l1 20l1-40l1 20l1-10l1-20l1 10l1-10l1 20l1 10l1 10l1-30l1 20h1l1-110l1 90l1-140l1 130l1 20l1 10l1 10l1-20l1-20l1 10l1 20l1 10l1-100l1 100l1-20l1-10l1-10l1 20l1 20l1-20l1-60l1 90l1-40l1-50l1 30l1 30l1 10l1-40l1 20l1 40l1-10l1-30l1 10l1 20h1l1-30l1 40l1-10l1-20l1 10l1 10h1l1-20h3l1 10l1-40l1 20l1-10l1 10l1 20l1-10l1-30l1 20h3l1-20l1 20l1-10l1 30l1-10l1-10l1-10l1 20l1 10l1-20l1 20l1-10l1-30l1 30l1 20l1-30l1 30l1-30h1l1 10l1-20l1-50l1 40l1 40h1l1-20l1-10l1 10h1l1 30l1-50l1 40l1-40l1 40h1l1-10l1 10l1 10l1-80l1 50l1 20l1-10l1-110l1 50h1l1 40l1-10l1 30l1-20h1l1 20l1-80l1 90l1 10l1-30l1-10l1 10l1-30l1-40l1 80l1-90l1 80l1-40l1 50h2l1 10l1 10l1-30h1l1 10l1 20l1-90l1 60l1-40l1 90l1-40h2l1-80l1 70l1-10l1 20l1 30l1-90l1 80l1-10l1-30l1-70l1 80h1l1 30l1-20l1 10h2l1 10l1-20l1-30l1 50l1 10l1-30l1 20l1-40l1 20l1 30l1-40l1 30l1-20h1l1 10l1 10l1-20l1 10h9" fill="none" stroke="#56A64B" stroke-width="1.0" stroke-linejoin="round" vector-effect="non-scaling-stroke"/></g><g transform="translate(735.5 0) scale(1.20000 0.1)"><path d="M0 6245l1-190l1 480l1-480l1 190l1 190h2l1-90l1-290l1 90h1l1 390l1-100l1-480l1 190l1-190l1 100l1 380l1-380h1l1 190l1 190l1-190l1-190l1 90l1 100l1-290l1 390l1-200l1 100l1 100l1 90l1-290l1 100l1 100l1-680l1 680l1-100l1 100l1-100l1-100l1 200l1-200l1 290l1-90l1 190l1-190l1-100l1-100l1-90h2l1 380l1-290l1 390l1-190l1-100h1l1 190h1l1-190l1 190l1-90l1-200h1l1 100h1l1-100l1 200h1l1 90l1-380l1 190l1 390l1-390l1-190h1l1 290h1l1-100l1 190l1-380l1 90l1-290l1 490l1-200l1-290l1 390l1 100l1 90l1-290l1 100l1 190l1-290l1-290l1 680l1-190h1l1-200l1 390l1-190h1l1-290l1-200l1 870l1-190l1-290l1-680l1 490l1 190l1 100l1-200l1 100l1 100l1-100l1-190l1 380h1l1-90l1-100l1 100h1l1-100l1-390l1 290h1l1-90l1 580l1-100l1-100h2l1-190l1 190l1-480l1 680l1-200l1-380l1 290l1-290l1 90l1 200l1-200l1-390l1 390l1 200l1 190l1-970l1 780l1-100l1 100h1l1-200h1l1 200l1-290l1 380l1-90l1-200h1l1 290l1-90l1 90l1-680l1 490l1 190l1-580l1 490h1l1-100l1 100l1-100h2l1-100l1 200l1 190l1-190l1-100l1-580l1 480h1l1 200h1l1 90l1-290h1l1 200l1 90l1-90l1-290l1-590l1 1070l1-190l1-290l1 90l1 100l1-390l1 390l1 100l1 290l1-390l1 100l1-200h1l1 200l1-100h1l1 290l1 100l1-290l1-100l1 100l1 290l1-390l1-780l1 970l1-90l1 90l1-190h1l1 100l1-100l1-390l1 580l1-90l1-200l1 390l1-190l1-100l1 190h9V6825H0Z" fill="#E0B400" fill-opacity="0.014"/><path d="M0 6245l1-190l1 480l1-480l1 190l1 190h2l1-90l1-290l1 90h1l1 390l1-100l1-480l1 190l1-190l1 100l1 380l1-380h1l1 190l1 190l1-190l1-190l1 90l1 100l1-290l1 390l1-200l1 100l1 100l1 90l1-290l1 100l1 100l1-680l1 680l1-100l1 100l1-100l1-100l1 200l1-200l1 290l1-90l1 190l1-190l1-100l1-100l1-90h2l1 380l1-290l1 390l1-190l1-100h1l1 190h1l1-190l1 190l1-90l1-200h1l1 100h1l1-100l1 200h1l1 90l1-380l1 190l1 390l1-390l1-190h1l1 290h1l1-100l1 190l1-380l1 90l1-290l1 490l1-200l1-290l1 390l1 100l1 90l1-290l1 100l1 190l1-290l1-290l1 680l1-190h1l1-200l1 390l1-190h1l1-290l1-200l1 870l1-190l1-290l1-680l1 490l1 190l1 100l1-200l1 100l1 100l1-100l1-190l1 380h1l1-90l1-100l1 100h1l1-100l1-390l1 290h1l1-90l1 580l1-100l1-100h2l1-190l1 190l1-480l1 680l1-200l1-380l1 290l1-290l1 90l1 200l1-200l1-390l1 390l1 200l1 190l1-970l1 780l1-100l1 100h1l1-200h1l1 200l1-290l1 380l1-90l1-200h1l1 290l1-90l1 90l1-680l1 490l1 190l1-580l1 490h1l1-100l1 100l1-100h2l1-100l1 200l1 190l1-190l1-100l1-580l1 480h1l1 200h1l1 90l1-290h1l1 200l1 90l1-90l1-290l1-590l1 1070l1-190l1-290l1 90l1 100l1-390l1 390l1 100l1 290l1-390l1 100l1-200h1l1 200l1-100h1l1 290l1 100l1-290l1-100l1 100l1 290l1-390l1-780l1 970l1-90l1 90l1-190h1l1 100l1-100l1-390l1 580l1-90l1-200l1 390l1-190l1-100l1 190h9" fill="none" stroke="#E0B400" stroke-width="1.0" stroke-linejoin="round" vector-effect="non-scaling-stroke"/></g></svg><span id="t92" style="position:absolute;left:729.66px;top:673.30px;height:18px;line-height:18px;font-size:12.3px;white-space:pre;color:#24292e;letter-spacing:0.056px;transform:translateX(-100%);">0</span><span id="t93" style="position:absolute;left:729.26px;top:624.88px;height:18px;line-height:18px;font-size:12.3px;white-space:pre;color:#24292e;letter-spacing:-0.344px;transform:translateX(-100%);">5</span><span id="t94" style="position:absolute;left:729.15px;top:576.47px;height:18px;line-height:18px;font-size:12.3px;white-space:pre;color:#24292e;letter-spacing:-0.450px;transform:translateX(-100%);">10</span><span id="t95" style="position:absolute;left:729.15px;top:528.05px;height:18px;line-height:18px;font-size:12.3px;white-space:pre;color:#24292e;letter-spacing:-0.450px;transform:translateX(-100%);">15</span><span id="t96" style="position:absolute;left:735.95px;top:688.10px;height:18px;line-height:18px;font-size:12.3px;white-space:pre;color:#24292e;letter-spacing:-0.008px;transform:translateX(-50%);">13:45</span><span id="t97" style="position:absolute;left:808.01px;top:688.10px;height:18px;line-height:18px;font-size:12.3px;white-space:pre;color:#24292e;letter-spacing:0.117px;transform:translateX(-50%);">14:00</span><span id="t98" style="position:absolute;left:879.73px;top:688.10px;height:18px;line-height:18px;font-size:12.3px;white-space:pre;color:#24292e;letter-spacing:-0.450px;transform:translateX(-50%);">14:15</span><span id="t99" style="position:absolute;left:952.01px;top:688.10px;height:18px;line-height:18px;font-size:12.3px;white-space:pre;color:#24292e;letter-spacing:0.117px;transform:translateX(-50%);">14:30</span><div class="mk" style="left:717.2px;top:715.70px;background:#56A64B"></div><span id="t100" style="position:absolute;left:739.25px;top:708.00px;height:18px;line-height:18px;font-size:12.3px;white-space:pre;color:#24292e;letter-spacing:0.086px;">avg</span><div class="mk" style="left:770.2px;top:715.70px;background:#E0B400"></div><span id="t101" style="position:absolute;left:791.75px;top:708.00px;height:18px;line-height:18px;font-size:12.3px;white-space:pre;color:#24292e;letter-spacing:0.474px;">highest</span><div class="panel" style="left:1048px;top:478px"></div><span id="t102" style="position:absolute;left:1057.20px;top:483.60px;height:22px;line-height:22px;font-size:14.5px;white-space:pre;color:#24292e;-webkit-text-stroke:0.3px #24292e;letter-spacing:0.389px;">Ingress TCP connections (per pod)</span><svg style="left:1311.00px;top:486.80px" width="16" height="16" viewBox="0 0 24 24" fill="#50555a"><path d="M12,2A10,10,0,1,0,22,12,10.011,10.011,0,0,0,12,2Zm0,18a8,8,0,1,1,8-8A8.009,8.009,0,0,1,12,20Zm0-8.500a1,1,0,0,0-1,1v3a1,1,0,0,0,2,0v-3A1,1,0,0,0,12,11.500Zm0-4a1.250,1.250,0,1,0,1.250,1.250A1.250,1.250,0,0,0,12,7.500Z"/></svg><svg style="left:0;top:0" width="1400" height="1400" viewBox="0 0 1400 1400"><g stroke="#e9eaeb" stroke-width="1" fill="none" shape-rendering="crispEdges"><path d="M1082.5 527.25V686.50"/><path d="M1154.5 527.25V686.50"/><path d="M1225.5 527.25V686.50"/><path d="M1297.5 527.25V686.50"/><path d="M1081.50 682.5H1367.50"/><path d="M1081.50 632.5H1367.50"/><path d="M1081.50 582.5H1367.50"/><path d="M1081.50 532.5H1367.50"/></g><g transform="translate(1081.5 0) scale(1.19167 0.1)"><path d="M0 5565h1l1-60l1 60l1-50l1 30l1-20h1l1-50l1 10l1 100l1-100l1 60h1l1-20h1l1-40l1 60l1-70l1 100l1-90l1 40l1 20l1-70l1 70h1l1-20l1-10l1 70l1-40l1 30l1-10l1-80l1-40l1 40l1 40l1 20l1-70l1 70l1-60l1 80l1-90h1l1 40l1-40h5l1 70l1-100l1 60l1-30l1 40l1-40l1 40l1-20h1l1 30h5l1-50l1 80l1-30l1-50l1 80l1-80l1 80l1-30l1-50l1 30l1 50l1-10l1-40l1-30l1 50l1-50h1l1 80l1-80l1 50l1-10l1 10l1-50l1 50l1-50l1 50h1l1-30l1 30h1l1-100l1 100l1-50h4l1 50l1-30l1-20l1 70l1-50l1 30h1l1-20l1 40l1-70l1 80l1-80h1l1 40l1 10h1l1-30l1 20l1 10l1-50l1 50h1l1 20l1-70l1 50l1-30l1 30l1 30l1-30h2l1 30l1-30h1l1-50l1 150l1-50l1 50l1-50l1 20l1 30l1-50l1 50l1-50l1 50l1-50h2l1 50l1-50l1 50h1l1-20l1-30l1 50l1-50h1l1 90l1-90l1 70l1-20h3l1 20l1 30l1-50h1l1 30l1-30l1 20l1-70l1 90l1-50l1 50l1-10l1-30l1 30l1-30l1 20l1 10l1-10l1-20h1l1 20l1-20l1 30l1-30l1-50l1 20l1-20h1l1 50h5l1-10l1 10h1l1-50l1 50h1l1-50l1 50l1 30l1-30l1 30l1-30h1l1-50l1 90l1-40h1l1-50l1 50h3l1 20l1-20h3l1-30l1 50l1-20h2l1-20l1 20h1l1-30l1 30h1l1 20l1-70l1 50V6825H0Z" fill="#56A64B" fill-opacity="0.014"/><path d="M0 5565h1l1-60l1 60l1-50l1 30l1-20h1l1-50l1 10l1 100l1-100l1 60h1l1-20h1l1-40l1 60l1-70l1 100l1-90l1 40l1 20l1-70l1 70h1l1-20l1-10l1 70l1-40l1 30l1-10l1-80l1-40l1 40l1 40l1 20l1-70l1 70l1-60l1 80l1-90h1l1 40l1-40h5l1 70l1-100l1 60l1-30l1 40l1-40l1 40l1-20h1l1 30h5l1-50l1 80l1-30l1-50l1 80l1-80l1 80l1-30l1-50l1 30l1 50l1-10l1-40l1-30l1 50l1-50h1l1 80l1-80l1 50l1-10l1 10l1-50l1 50l1-50l1 50h1l1-30l1 30h1l1-100l1 100l1-50h4l1 50l1-30l1-20l1 70l1-50l1 30h1l1-20l1 40l1-70l1 80l1-80h1l1 40l1 10h1l1-30l1 20l1 10l1-50l1 50h1l1 20l1-70l1 50l1-30l1 30l1 30l1-30h2l1 30l1-30h1l1-50l1 150l1-50l1 50l1-50l1 20l1 30l1-50l1 50l1-50l1 50l1-50h2l1 50l1-50l1 50h1l1-20l1-30l1 50l1-50h1l1 90l1-90l1 70l1-20h3l1 20l1 30l1-50h1l1 30l1-30l1 20l1-70l1 90l1-50l1 50l1-10l1-30l1 30l1-30l1 20l1 10l1-10l1-20h1l1 20l1-20l1 30l1-30l1-50l1 20l1-20h1l1 50h5l1-10l1 10h1l1-50l1 50h1l1-50l1 50l1 30l1-30l1 30l1-30h1l1-50l1 90l1-40h1l1-50l1 50h3l1 20l1-20h3l1-30l1 50l1-20h2l1-20l1 20h1l1-30l1 30h1l1 20l1-70l1 50" fill="none" stroke="#56A64B" stroke-width="1.0" stroke-linejoin="round" vector-effect="non-scaling-stroke"/></g><g transform="translate(1081.5 0) scale(1.19167 0.1)"><path d="M0 5525h1l1-50l1 50l1-50l1 50l1-50l1 50l1-50h1l1 100l1-100l1 50h3l1-50l1 50l1-50l1 50l1-50l1 50h1l1-50l1 50h1l1-50h1l1 100l1-50l1 50l1-50l1-50l1-50l1 50l1 50h1l1-50l1 50l1-50l1 50l1-50h8l1 50l1-100l1 50h6l1 50h5l1-50l1 50h1l1-50l1 50l1-50l1 50h1l1-50h1l1 50h1l1-50h1l1 50l1-50h1l1 50l1-50l1 50l1-50l1 50l1-50l1 50l1-50l1 50h1l1-50l1 50h1l1-100l1 100l1-50h4l1 50l1-50h1l1 50l1-50l1 50h1l1-50l1 50l1-50l1 50l1-50h2l1 50h1l1-50h1l1 50l1-50l1 50h2l1-50l1 50l1-50l1 50h7l1-50l1 150l1-50l1 50l1-50h1l1 50l1-50l1 50l1-50l1 50l1-50h2l1 50l1-50l1 50h1l1-50h1l1 50l1-50h1l1 50l1-50l1 50h5l1 50l1-50h4l1-50l1 50l1-50l1 50h13l1-50h3l1 50h5l1-50l1 50h1l1-50l1 50h1l1-50l1 50h5l1-50l1 50h2l1-50l1 50h8l1-50l1 50h3l1-50l1 50h1l1-50l1 50h2l1-50l1 50V6825H0Z" fill="#E0B400" fill-opacity="0.014"/><path d="M0 5525h1l1-50l1 50l1-50l1 50l1-50l1 50l1-50h1l1 100l1-100l1 50h3l1-50l1 50l1-50l1 50l1-50l1 50h1l1-50l1 50h1l1-50h1l1 100l1-50l1 50l1-50l1-50l1-50l1 50l1 50h1l1-50l1 50l1-50l1 50l1-50h8l1 50l1-100l1 50h6l1 50h5l1-50l1 50h1l1-50l1 50l1-50l1 50h1l1-50h1l1 50h1l1-50h1l1 50l1-50h1l1 50l1-50l1 50l1-50l1 50l1-50l1 50l1-50l1 50h1l1-50l1 50h1l1-100l1 100l1-50h4l1 50l1-50h1l1 50l1-50l1 50h1l1-50l1 50l1-50l1 50l1-50h2l1 50h1l1-50h1l1 50l1-50l1 50h2l1-50l1 50l1-50l1 50h7l1-50l1 150l1-50l1 50l1-50h1l1 50l1-50l1 50l1-50l1 50l1-50h2l1 50l1-50l1 50h1l1-50h1l1 50l1-50h1l1 50l1-50l1 50h5l1 50l1-50h4l1-50l1 50l1-50l1 50h13l1-50h3l1 50h5l1-50l1 50h1l1-50l1 50h1l1-50l1 50h5l1-50l1 50h2l1-50l1 50h8l1-50l1 50h3l1-50l1 50h1l1-50l1 50h2l1-50l1 50" fill="none" stroke="#E0B400" stroke-width="1.0" stroke-linejoin="round" vector-effect="non-scaling-stroke"/></g><g transform="translate(1081.5 0) scale(1.19167 0.1)"><path d="M0 6825h240" fill="none" stroke="#5794F2" stroke-width="1.0" stroke-linejoin="round" vector-effect="non-scaling-stroke"/></g></svg><span id="t103" style="position:absolute;left:1075.66px;top:673.30px;height:18px;line-height:18px;font-size:12.3px;white-space:pre;color:#24292e;letter-spacing:0.056px;transform:translateX(-100%);">0</span><span id="t104" style="position:absolute;left:1075.15px;top:623.30px;height:18px;line-height:18px;font-size:12.3px;white-space:pre;color:#24292e;letter-spacing:-0.450px;transform:translateX(-100%);">10</span><span id="t105" style="position:absolute;left:1075.66px;top:573.30px;height:18px;line-height:18px;font-size:12.3px;white-space:pre;color:#24292e;letter-spacing:0.062px;transform:translateX(-100%);">20</span><span id="t106" style="position:absolute;left:1075.66px;top:523.30px;height:18px;line-height:18px;font-size:12.3px;white-space:pre;color:#24292e;letter-spacing:0.062px;transform:translateX(-100%);">30</span><span id="t107" style="position:absolute;left:1081.94px;top:688.10px;height:18px;line-height:18px;font-size:12.3px;white-space:pre;color:#24292e;letter-spacing:-0.008px;transform:translateX(-50%);">13:45</span><span id="t108" style="position:absolute;left:1153.51px;top:688.10px;height:18px;line-height:18px;font-size:12.3px;white-space:pre;color:#24292e;letter-spacing:0.117px;transform:translateX(-50%);">14:00</span><span id="t109" style="position:absolute;left:1224.72px;top:688.10px;height:18px;line-height:18px;font-size:12.3px;white-space:pre;color:#24292e;letter-spacing:-0.450px;transform:translateX(-50%);">14:15</span><span id="t110" style="position:absolute;left:1296.51px;top:688.10px;height:18px;line-height:18px;font-size:12.3px;white-space:pre;color:#24292e;letter-spacing:0.117px;transform:translateX(-50%);">14:30</span><div class="mk" style="left:1061.2px;top:715.70px;background:#56A64B"></div><span id="t111" style="position:absolute;left:1083.25px;top:708.00px;height:18px;line-height:18px;font-size:12.3px;white-space:pre;color:#24292e;letter-spacing:0.086px;">avg</span><div class="mk" style="left:1114.2px;top:715.70px;background:#E0B400"></div><span id="t112" style="position:absolute;left:1135.75px;top:708.00px;height:18px;line-height:18px;font-size:12.3px;white-space:pre;color:#24292e;letter-spacing:0.474px;">highest</span><div class="mk" style="left:1188.0px;top:715.70px;background:#5794F2"></div><span id="t113" style="position:absolute;left:1210.75px;top:708.00px;height:18px;line-height:18px;font-size:12.3px;white-space:pre;color:#24292e;letter-spacing:0.348px;">limit</span><div class="panel" style="left:16px;top:782px"></div><span id="t114" style="position:absolute;left:25.20px;top:787.60px;height:22px;line-height:22px;font-size:14.5px;white-space:pre;color:#24292e;-webkit-text-stroke:0.3px #24292e;letter-spacing:0.423px;">Receive bandwidth</span><svg style="left:0;top:0" width="1400" height="1400" viewBox="0 0 1400 1400"><g stroke="#e9eaeb" stroke-width="1" fill="none" shape-rendering="crispEdges"><path d="M87.5 831.25V967.00"/><path d="M149.5 831.25V967.00"/><path d="M211.5 831.25V967.00"/><path d="M273.5 831.25V967.00"/><path d="M86.25 962.5H335.00"/><path d="M86.25 928.5H335.00"/><path d="M86.25 894.5H335.00"/><path d="M86.25 860.5H335.00"/></g><g transform="translate(86.25 0) scale(1.03646 0.1)"><path d="M0 8444l1 221 1-137 1-51 1 11 1 9 1 80 1-57 1 18 1-70 1 113 1-102 1 203 1-209 1 34 1-50 1 60 1 26 1 9 1-67 1 56 1 49 1-96 1 235 1-205 1 3 1-72 1 60 1 108 1-85 1-2 1-66 1 13 1 193 1-69 1-58 1-51 1 7 1-65 1 39 1 29 1 42 1 88 1 22 1-98 1-77 1 189 1-133 1 117 1 24 1-116 1 120 1-171 1 34 1-15 1-14 1-2 1-21 1 4 1 18 1-52 1 51 1-34 1 21 1-28 1 7 1 147 1-101 1-5 1 55 1-138 1 70 1-10 1 5 1 136 1-161 1 8 1 19 1 26 1-6 1 179 1-151 1-34 1-41 1 27 1 33 1-32 1 28 1-4 1-27 1-3 1 25 1-25 1-1 1-13 1 57 1-90 1 121 1-70 1 17 1-25 1-10 1 34 1 31 1-53 1 17 1-58 1 60 1 2 1 2 1 38 1 168 1-276 1 20 1 77 1-56 1 26 1-22 1-2 1 41 1 85 1-110 1 99 1-101 1-31 1 28 1-37 1 55 1 91 1-99 1 40 1 52 1 71 1-100 1 2 1-46 1-1 1 142 1-229 1-51 1 111 1-18 1 200 1-226 1 282 1-267 1 95 1 33 1-106 1 185 1-186 1-33 1 53 1 125 1-38 1-96 1 41 1-91 1 58 1-40 1 2 1 45 1-30 1 63 1 76 1-37 1-131 1 4 1 40 1 29 1-5 1-35 1 75 1-124 1 85 1-124 1 72 1 11 1 46 1 21 1 14 1-38 1-65 1 34 1-11 1 14 1 32 1 56 1-129 1-2 1 122 1-57 1 12 1-38 1 46 1-65 1-46 1 47 1 110 1-41 1 64 1-88 1-55 1 74 1 12 1-19 1-17 1 46 1-80 1 213 1-159 1-33 1 62 1-33 1 79 1-109 1-71 1 32 1 53 1-91 1 57 1 1 1 85 1 65 1-103 1-11 1-22 1-18 1-1 1 26 1 26 1-56 1 83 1 88 1-170 1 205 1-170 1 26 1 9 1-3 1-54V9630H0Z" fill="#E0B400"/><path d="M0 9100l1 63 1-85 1 2 1 13 1 20 1-10 1-27 1-27 1 34 1-2 1 137 1-148 1 5 1 22 1 102 1-125 1-5 1 20 1-14 1-3 1-5 1 23 1 3 1-6 1-1 1-9 1 6 1-1 1 10 1-15 1-14 1 14 1 16 1 12 1-9 1-13 1-19 1-5 1 11 1 9 1 1 1-4 1 15 1-15 1-7 1-5 1 33 1 7 1-8 1 71 1-62 1 5 1 80 1 15 1 45 1-169 1-7 1 19 1-3 1-20 1 120 1-120 1 140 1-133 1 6 1 9 1-6 1 0 1-7 1-14 1 119 1-37 1-65 1-1 1 19 1 113 1 23 1-141 1-2 1-5 1-1 1 8 1-20 1-18 1 19 1 121 1-94 1-9 1-18 1-3 1-4 1 21 1-2 1 16 1-4 1-13 1 17 1-3 1-21 1-15 1-2 1 71 1 18 1-57 1-10 1 5 1 80 1 17 1-115 1 4 1 165 1-32 1-132 1-11 1 19 1 22 1-33 1 11 1 16 1-8 1-25 1 17 1 21 1-30 1-15 1 28 1 111 1-27 1-78 1-6 1 2 1-16 1 3 1 133 1-132 1 11 1-5 1 14 1-2 1-14 1 2 1-11 1-18 1 45 1 8 1-19 1-24 1 118 1-102 1-22 1 31 1 6 1-14 1-27 1 17 1 21 1-14 1 82 1-87 1 1 1 16 1-11 1 5 1 1 1-4 1 18 1-11 1 5 1 18 1-14 1-19 1 0 1 3 1 20 1 93 1-107 1-3 1-9 1 11 1 6 1-5 1-20 1-3 1 14 1-5 1 109 1-128 1 9 1 20 1 15 1-36 1-20 1 49 1-16 1 2 1-3 1 150 1-168 1 18 1 174 1-158 1-3 1 17 1-33 1-2 1-7 1 28 1 62 1-85 1 3 1 15 1-12 1 7 1 8 1 1 1 73 1-63 1-11 1 20 1-16 1-15 1-27 1 15 1 66 1-27 1-10 1 2 1-11 1 6 1-29 1 34 1-15 1 124 1-34 1-96 1-12 1 13 1 8 1 8 1 5V9630H0Z" fill="#56A64B"/></g></svg><span id="t115" style="position:absolute;left:80.67px;top:953.80px;height:18px;line-height:18px;font-size:12.3px;white-space:pre;color:#24292e;letter-spacing:0.317px;transform:translateX(-100%);">0 B/s</span><span id="t116" style="position:absolute;left:80.87px;top:919.80px;height:18px;line-height:18px;font-size:12.3px;white-space:pre;color:#24292e;letter-spacing:0.520px;transform:translateX(-100%);">200 kB/s</span><span id="t117" style="position:absolute;left:80.87px;top:885.80px;height:18px;line-height:18px;font-size:12.3px;white-space:pre;color:#24292e;letter-spacing:0.520px;transform:translateX(-100%);">400 kB/s</span><span id="t118" style="position:absolute;left:80.87px;top:851.80px;height:18px;line-height:18px;font-size:12.3px;white-space:pre;color:#24292e;letter-spacing:0.520px;transform:translateX(-100%);">600 kB/s</span><span id="t119" style="position:absolute;left:86.56px;top:968.60px;height:18px;line-height:18px;font-size:12.3px;white-space:pre;color:#24292e;letter-spacing:-0.008px;transform:translateX(-50%);">13:45</span><span id="t120" style="position:absolute;left:148.81px;top:968.60px;height:18px;line-height:18px;font-size:12.3px;white-space:pre;color:#24292e;letter-spacing:0.117px;transform:translateX(-50%);">14:00</span><span id="t121" style="position:absolute;left:210.71px;top:968.60px;height:18px;line-height:18px;font-size:12.3px;white-space:pre;color:#24292e;letter-spacing:-0.450px;transform:translateX(-50%);">14:15</span><span id="t122" style="position:absolute;left:273.18px;top:968.60px;height:18px;line-height:18px;font-size:12.3px;white-space:pre;color:#24292e;letter-spacing:0.117px;transform:translateX(-50%);">14:30</span><div class="mk" style="left:29.2px;top:996.40px;background:#56A64B"></div><span id="t123" style="position:absolute;left:51.25px;top:989.00px;height:18px;line-height:18px;font-size:12.3px;white-space:pre;color:#24292e;letter-spacing:0.620px;">ruler-query-scheduler-6879498765-4kwrt</span><div class="mk" style="left:29.2px;top:1020.00px;background:#E0B400"></div><span id="t124" style="position:absolute;left:51.25px;top:1011.60px;height:18px;line-height:18px;font-size:12.3px;white-space:pre;color:#24292e;letter-spacing:0.601px;">ruler-query-scheduler-6879498765-4qwc2</span><div class="panel" style="left:360px;top:782px"></div><span id="t125" style="position:absolute;left:369.20px;top:787.60px;height:22px;line-height:22px;font-size:14.5px;white-space:pre;color:#24292e;-webkit-text-stroke:0.3px #24292e;letter-spacing:0.488px;">Transmit bandwidth</span><svg style="left:0;top:0" width="1400" height="1400" viewBox="0 0 1400 1400"><g stroke="#e9eaeb" stroke-width="1" fill="none" shape-rendering="crispEdges"><path d="M431.5 831.25V967.00"/><path d="M493.5 831.25V967.00"/><path d="M555.5 831.25V967.00"/><path d="M617.5 831.25V967.00"/><path d="M430.25 962.5H679.00"/><path d="M430.25 931.5H679.00"/><path d="M430.25 900.5H679.00"/><path d="M430.25 869.5H679.00"/><path d="M430.25 837.5H679.00"/></g><g transform="translate(430.25 0) scale(1.03646 0.1)"><path d="M0 8428l1 224 1-139 1-52 1 12 1 9 1 81 1-58 1 18 1-71 1 115 1-104 1 207 1-213 1 35 1-51 1 61 1 26 1 9 1-67 1 56 1 50 1-97 1 238 1-208 1 3 1-73 1 60 1 111 1-87 1-2 1-67 1 14 1 195 1-70 1-58 1-52 1 7 1-67 1 41 1 29 1 42 1 90 1 21 1-98 1-79 1 192 1-134 1 118 1 24 1-117 1 121 1-173 1 34 1-15 1-14 1-2 1-22 1 5 1 18 1-53 1 52 1-34 1 21 1-29 1 8 1 148 1-102 1-5 1 56 1-140 1 71 1-10 1 5 1 138 1-164 1 9 1 18 1 28 1-6 1 181 1-154 1-35 1-41 1 28 1 34 1-33 1 28 1-4 1-27 1-4 1 26 1-25 1-1 1-14 1 59 1-92 1 123 1-71 1 17 1-25 1-11 1 35 1 32 1-54 1 17 1-59 1 61 1 2 1 2 1 39 1 169 1-279 1 21 1 77 1-57 1 27 1-22 1-2 1 41 1 87 1-112 1 100 1-103 1-31 1 29 1-38 1 56 1 93 1-101 1 40 1 53 1 72 1-101 1 2 1-47 1-1 1 144 1-232 1-52 1 113 1-19 1 203 1-229 1 286 1-270 1 95 1 34 1-108 1 188 1-189 1-32 1 53 1 126 1-38 1-97 1 41 1-92 1 59 1-41 1 2 1 46 1-30 1 63 1 77 1-37 1-133 1 4 1 41 1 29 1-4 1-37 1 77 1-126 1 86 1-125 1 72 1 12 1 47 1 21 1 13 1-38 1-65 1 34 1-11 1 14 1 32 1 57 1-131 1-2 1 124 1-57 1 11 1-38 1 46 1-66 1-46 1 47 1 112 1-42 1 65 1-89 1-56 1 76 1 12 1-19 1-18 1 47 1-82 1 217 1-162 1-34 1 63 1-33 1 80 1-111 1-71 1 33 1 53 1-92 1 57 1 1 1 87 1 66 1-104 1-12 1-22 1-19 1 0 1 26 1 26 1-56 1 84 1 89 1-172 1 208 1-173 1 26 1 10 1-4 1-55V9630H0Z" fill="#E0B400"/><path d="M0 9090l1 64 1-87 1 2 1 14 1 20 1-10 1-28 1-27 1 34 1-2 1 141 1-151 1 4 1 22 1 105 1-127 1-5 1 19 1-14 1-3 1-5 1 24 1 3 1-7 1 0 1-9 1 5 1 0 1 10 1-16 1-13 1 13 1 17 1 12 1-10 1-12 1-20 1-5 1 11 1 10 1 1 1-4 1 15 1-16 1-6 1-6 1 34 1 7 1-8 1 72 1-63 1 5 1 81 1 16 1 46 1-172 1-7 1 19 1-3 1-20 1 122 1-123 1 143 1-136 1 6 1 10 1-6 1-1 1-6 1-14 1 121 1-39 1-65 1-1 1 19 1 115 1 24 1-144 1-2 1-5 1-2 1 9 1-21 1-18 1 19 1 124 1-96 1-9 1-19 1-3 1-3 1 21 1-2 1 16 1-4 1-13 1 17 1-3 1-21 1-15 1-3 1 73 1 18 1-58 1-11 1 6 1 81 1 17 1-117 1 5 1 167 1-32 1-134 1-12 1 20 1 22 1-33 1 10 1 16 1-7 1-25 1 17 1 21 1-31 1-14 1 27 1 114 1-28 1-79 1-6 1 1 1-16 1 3 1 136 1-134 1 11 1-6 1 15 1-2 1-14 1 1 1-10 1-19 1 46 1 8 1-19 1-24 1 120 1-104 1-22 1 31 1 6 1-15 1-27 1 17 1 22 1-14 1 83 1-89 1 1 1 17 1-12 1 6 1 1 1-5 1 19 1-12 1 6 1 18 1-14 1-20 1 0 1 4 1 20 1 95 1-110 1-3 1-8 1 10 1 6 1-4 1-21 1-3 1 15 1-5 1 111 1-131 1 9 1 20 1 16 1-37 1-20 1 50 1-17 1 2 1-2 1 152 1-171 1 18 1 177 1-160 1-4 1 19 1-34 1-3 1-7 1 29 1 63 1-86 1 3 1 15 1-13 1 7 1 8 1 2 1 74 1-64 1-12 1 21 1-16 1-15 1-28 1 15 1 67 1-27 1-10 1 2 1-11 1 6 1-29 1 34 1-15 1 126 1-35 1-98 1-11 1 12 1 9 1 8 1 5V9630H0Z" fill="#56A64B"/></g></svg><span id="t126" style="position:absolute;left:424.67px;top:953.80px;height:18px;line-height:18px;font-size:12.3px;white-space:pre;color:#24292e;letter-spacing:0.317px;transform:translateX(-100%);">0 B/s</span><span id="t127" style="position:absolute;left:424.87px;top:922.55px;height:18px;line-height:18px;font-size:12.3px;white-space:pre;color:#24292e;letter-spacing:0.520px;transform:translateX(-100%);">200 kB/s</span><span id="t128" style="position:absolute;left:424.87px;top:891.30px;height:18px;line-height:18px;font-size:12.3px;white-space:pre;color:#24292e;letter-spacing:0.520px;transform:translateX(-100%);">400 kB/s</span><span id="t129" style="position:absolute;left:424.87px;top:860.05px;height:18px;line-height:18px;font-size:12.3px;white-space:pre;color:#24292e;letter-spacing:0.520px;transform:translateX(-100%);">600 kB/s</span><span id="t130" style="position:absolute;left:424.87px;top:828.80px;height:18px;line-height:18px;font-size:12.3px;white-space:pre;color:#24292e;letter-spacing:0.520px;transform:translateX(-100%);">800 kB/s</span><span id="t131" style="position:absolute;left:430.56px;top:968.60px;height:18px;line-height:18px;font-size:12.3px;white-space:pre;color:#24292e;letter-spacing:-0.008px;transform:translateX(-50%);">13:45</span><span id="t132" style="position:absolute;left:492.81px;top:968.60px;height:18px;line-height:18px;font-size:12.3px;white-space:pre;color:#24292e;letter-spacing:0.117px;transform:translateX(-50%);">14:00</span><span id="t133" style="position:absolute;left:554.71px;top:968.60px;height:18px;line-height:18px;font-size:12.3px;white-space:pre;color:#24292e;letter-spacing:-0.450px;transform:translateX(-50%);">14:15</span><span id="t134" style="position:absolute;left:617.18px;top:968.60px;height:18px;line-height:18px;font-size:12.3px;white-space:pre;color:#24292e;letter-spacing:0.117px;transform:translateX(-50%);">14:30</span><div class="mk" style="left:373.2px;top:996.40px;background:#56A64B"></div><span id="t135" style="position:absolute;left:395.25px;top:989.00px;height:18px;line-height:18px;font-size:12.3px;white-space:pre;color:#24292e;letter-spacing:0.620px;">ruler-query-scheduler-6879498765-4kwrt</span><div class="mk" style="left:373.2px;top:1020.00px;background:#E0B400"></div><span id="t136" style="position:absolute;left:395.25px;top:1011.60px;height:18px;line-height:18px;font-size:12.3px;white-space:pre;color:#24292e;letter-spacing:0.601px;">ruler-query-scheduler-6879498765-4qwc2</span><div class="panel" style="left:704px;top:782px"></div><span id="t137" style="position:absolute;left:713.20px;top:787.60px;height:22px;line-height:22px;font-size:14.5px;white-space:pre;color:#24292e;-webkit-text-stroke:0.3px #24292e;letter-spacing:0.464px;">Inflight requests (per pod)</span><svg style="left:0;top:0" width="1400" height="1400" viewBox="0 0 1400 1400"><g stroke="#e9eaeb" stroke-width="1" fill="none" shape-rendering="crispEdges"><path d="M744.5 831.25V990.00"/><path d="M814.5 831.25V990.00"/><path d="M884.5 831.25V990.00"/><path d="M954.5 831.25V990.00"/><path d="M743.50 985.5H1023.50"/><path d="M743.50 934.5H1023.50"/><path d="M743.50 882.5H1023.50"/><path d="M743.50 831.5H1023.50"/></g><g transform="translate(743.5 0) scale(1.16667 0.1)"><path d="M0 9615h136l1 20h103V9860H0Z" fill="#56A64B" fill-opacity="0.014"/><path d="M0 9615h136l1 20h103" fill="none" stroke="#56A64B" stroke-width="1.0" stroke-linejoin="round" vector-effect="non-scaling-stroke"/></g><g transform="translate(743.5 0) scale(1.16667 0.1)"><path d="M0 8455h136l1 170h103V9860H0Z" fill="#E0B400" fill-opacity="0.014"/><path d="M0 8455h136l1 170h103" fill="none" stroke="#E0B400" stroke-width="1.0" stroke-linejoin="round" vector-effect="non-scaling-stroke"/></g></svg><span id="t138" style="position:absolute;left:737.66px;top:976.80px;height:18px;line-height:18px;font-size:12.3px;white-space:pre;color:#24292e;letter-spacing:0.056px;transform:translateX(-100%);">0</span><span id="t139" style="position:absolute;left:738.16px;top:925.30px;height:18px;line-height:18px;font-size:12.3px;white-space:pre;color:#24292e;letter-spacing:0.562px;transform:translateX(-100%);">50</span><span id="t140" style="position:absolute;left:737.15px;top:873.80px;height:18px;line-height:18px;font-size:12.3px;white-space:pre;color:#24292e;letter-spacing:-0.450px;transform:translateX(-100%);">100</span><span id="t141" style="position:absolute;left:737.15px;top:822.30px;height:18px;line-height:18px;font-size:12.3px;white-space:pre;color:#24292e;letter-spacing:-0.450px;transform:translateX(-100%);">150</span><span id="t142" style="position:absolute;left:743.92px;top:991.60px;height:18px;line-height:18px;font-size:12.3px;white-space:pre;color:#24292e;letter-spacing:-0.008px;transform:translateX(-50%);">13:45</span><span id="t143" style="position:absolute;left:813.99px;top:991.60px;height:18px;line-height:18px;font-size:12.3px;white-space:pre;color:#24292e;letter-spacing:0.117px;transform:translateX(-50%);">14:00</span><span id="t144" style="position:absolute;left:883.70px;top:991.60px;height:18px;line-height:18px;font-size:12.3px;white-space:pre;color:#24292e;letter-spacing:-0.450px;transform:translateX(-50%);">14:15</span><span id="t145" style="position:absolute;left:953.99px;top:991.60px;height:18px;line-height:18px;font-size:12.3px;white-space:pre;color:#24292e;letter-spacing:0.117px;transform:translateX(-50%);">14:30</span><div class="mk" style="left:717.2px;top:1019.70px;background:#56A64B"></div><span id="t146" style="position:absolute;left:739.25px;top:1012.00px;height:18px;line-height:18px;font-size:12.3px;white-space:pre;color:#24292e;letter-spacing:0.086px;">avg</span><div class="mk" style="left:770.2px;top:1019.70px;background:#E0B400"></div><span id="t147" style="position:absolute;left:791.75px;top:1012.00px;height:18px;line-height:18px;font-size:12.3px;white-space:pre;color:#24292e;letter-spacing:0.474px;">highest</span><div class="panel" style="left:1048px;top:782px"></div><span id="t148" style="position:absolute;left:1057.20px;top:787.60px;height:22px;line-height:22px;font-size:14.5px;white-space:pre;color:#24292e;-webkit-text-stroke:0.3px #24292e;letter-spacing:0.389px;">Ingress TCP connections (per pod)</span><svg style="left:1311.00px;top:790.80px" width="16" height="16" viewBox="0 0 24 24" fill="#50555a"><path d="M12,2A10,10,0,1,0,22,12,10.011,10.011,0,0,0,12,2Zm0,18a8,8,0,1,1,8-8A8.009,8.009,0,0,1,12,20Zm0-8.500a1,1,0,0,0-1,1v3a1,1,0,0,0,2,0v-3A1,1,0,0,0,12,11.500Zm0-4a1.250,1.250,0,1,0,1.250,1.250A1.250,1.250,0,0,0,12,7.500Z"/></svg><svg style="left:0;top:0" width="1400" height="1400" viewBox="0 0 1400 1400"><g stroke="#e9eaeb" stroke-width="1" fill="none" shape-rendering="crispEdges"><path d="M1082.5 831.25V990.50"/><path d="M1154.5 831.25V990.50"/><path d="M1225.5 831.25V990.50"/><path d="M1297.5 831.25V990.50"/><path d="M1081.50 986.5H1367.50"/><path d="M1081.50 934.5H1367.50"/><path d="M1081.50 882.5H1367.50"/><path d="M1081.50 831.5H1367.50"/></g><g transform="translate(1081.5 0) scale(1.19167 0.1)"><path d="M0 8525h6l1 100h2l1-50h2l1-50h7l1-30h5l1 30l1 50h11l1-50h2l1-30h6l1 30h86l1 100h103V9865H0Z" fill="#56A64B" fill-opacity="0.014"/><path d="M0 8525h6l1 100h2l1-50h2l1-50h7l1-30h5l1 30l1 50h11l1-50h2l1-30h6l1 30h86l1 100h103" fill="none" stroke="#56A64B" stroke-width="1.0" stroke-linejoin="round" vector-effect="non-scaling-stroke"/></g><g transform="translate(1081.5 0) scale(1.19167 0.1)"><path d="M0 8525h6l1 100h2l1-50h2l1-50h7l1-60h5l1 60l1 50h11l1-50h2l1-60h6l1 60h86l1 100h103V9865H0Z" fill="#E0B400" fill-opacity="0.014"/><path d="M0 8525h6l1 100h2l1-50h2l1-50h7l1-60h5l1 60l1 50h11l1-50h2l1-60h6l1 60h86l1 100h103" fill="none" stroke="#E0B400" stroke-width="1.0" stroke-linejoin="round" vector-effect="non-scaling-stroke"/></g><g transform="translate(1081.5 0) scale(1.19167 0.1)"><path d="M0 9865h240" fill="none" stroke="#5794F2" stroke-width="1.0" stroke-linejoin="round" vector-effect="non-scaling-stroke"/></g></svg><span id="t149" style="position:absolute;left:1075.66px;top:977.30px;height:18px;line-height:18px;font-size:12.3px;white-space:pre;color:#24292e;letter-spacing:0.056px;transform:translateX(-100%);">0</span><span id="t150" style="position:absolute;left:1075.15px;top:925.63px;height:18px;line-height:18px;font-size:12.3px;white-space:pre;color:#24292e;letter-spacing:-0.450px;transform:translateX(-100%);">10</span><span id="t151" style="position:absolute;left:1075.66px;top:873.97px;height:18px;line-height:18px;font-size:12.3px;white-space:pre;color:#24292e;letter-spacing:0.062px;transform:translateX(-100%);">20</span><span id="t152" style="position:absolute;left:1075.66px;top:822.30px;height:18px;line-height:18px;font-size:12.3px;white-space:pre;color:#24292e;letter-spacing:0.062px;transform:translateX(-100%);">30</span><span id="t153" style="position:absolute;left:1081.94px;top:992.10px;height:18px;line-height:18px;font-size:12.3px;white-space:pre;color:#24292e;letter-spacing:-0.008px;transform:translateX(-50%);">13:45</span><span id="t154" style="position:absolute;left:1153.51px;top:992.10px;height:18px;line-height:18px;font-size:12.3px;white-space:pre;color:#24292e;letter-spacing:0.117px;transform:translateX(-50%);">14:00</span><span id="t155" style="position:absolute;left:1224.72px;top:992.10px;height:18px;line-height:18px;font-size:12.3px;white-space:pre;color:#24292e;letter-spacing:-0.450px;transform:translateX(-50%);">14:15</span><span id="t156" style="position:absolute;left:1296.51px;top:992.10px;height:18px;line-height:18px;font-size:12.3px;white-space:pre;color:#24292e;letter-spacing:0.117px;transform:translateX(-50%);">14:30</span><div class="mk" style="left:1061.2px;top:1019.70px;background:#56A64B"></div><span id="t157" style="position:absolute;left:1083.25px;top:1012.00px;height:18px;line-height:18px;font-size:12.3px;white-space:pre;color:#24292e;letter-spacing:0.086px;">avg</span><div class="mk" style="left:1114.2px;top:1019.70px;background:#E0B400"></div><span id="t158" style="position:absolute;left:1135.75px;top:1012.00px;height:18px;line-height:18px;font-size:12.3px;white-space:pre;color:#24292e;letter-spacing:0.474px;">highest</span><div class="mk" style="left:1188.0px;top:1019.70px;background:#5794F2"></div><span id="t159" style="position:absolute;left:1210.75px;top:1012.00px;height:18px;line-height:18px;font-size:12.3px;white-space:pre;color:#24292e;letter-spacing:0.348px;">limit</span><div class="panel" style="left:16px;top:1086px"></div><span id="t160" style="position:absolute;left:25.20px;top:1091.60px;height:22px;line-height:22px;font-size:14.5px;white-space:pre;color:#24292e;-webkit-text-stroke:0.3px #24292e;letter-spacing:0.423px;">Receive bandwidth</span><svg style="left:0;top:0" width="1400" height="1400" viewBox="0 0 1400 1400"><g stroke="#e9eaeb" stroke-width="1" fill="none" shape-rendering="crispEdges"><path d="M91.5 1135.25V1244.90"/><path d="M152.5 1135.25V1244.90"/><path d="M213.5 1135.25V1244.90"/><path d="M274.5 1135.25V1244.90"/><path d="M90.50 1240.5H335.00"/><path d="M90.50 1193.5H335.00"/><path d="M90.50 1145.5H335.00"/></g><g transform="translate(90.5 0) scale(1.01875 0.1)"><path d="M0 11639l1-82 1 91 1 0 1-26 1-56 1 82 1 92 1-82 1-39 1 87 1 26 1-15 1-22 1-10 1-36 1-36 1-11 1-18 1 98 1 71 1-73 1-100 1 102 1-7 1-23 1-20 1-22 1 23 1 42 1-41 1-18 1 34 1 41 1-99 1-18 1 14 1-65 1-26 1 3 1 73 1 70 1-50 1 33 1 66 1 60 1-77 1-22 1-46 1-70 1-9 1-15 1 30 1 128 1 59 1-12 1-56 1-67 1-80 1 106 1 42 1-37 1 56 1 37 1 48 1 23 1-126 1-53 1-40 1-44 1 82 1 35 1-12 1-65 1 79 1 35 1 7 1-101 1-57 1 108 1 58 1-13 1-26 1 55 1-88 1-26 1-24 1 6 1 91 1 85 1 32 1 15 1 61 1 14 1 23 1-46 1-88 1-99 1 95 1 51 1-4 1-31 1 28 1-56 1-13 1 3 1 62 1 61 1-13 1-31 1-7 1 14 1-71 1 12 1 26 1 11 1-18 1 24 1-60 1 61 1 42 1 9 1-11 1-77 1-14 1-13 1-1 1 73 1-72 1-28 1 44 1 40 1-16 1-46 1-15 1 0 1-6 1 42 1 28 1-23 1-66 1-14 1 12 1 14 1-5 1 31 1-65 1-3 1 38 1 75 1 21 1-23 1-63 1 67 1-53 1-52 1 29 1 59 1 16 1 3 1 17 1-4 1-44 1-45 1 15 1-18 1-21 1 5 1 42 1-6 1-98 1-9 1-15 1 52 1 13 1-3 1-50 1-17 1 1 1-79 1 20 1 23 1 69 1 86 1 52 1-132 1 4 1 55 1 9 1-53 1 21 1-66 1 33 1 23 1 33 1 45 1 8 1-111 1-120 1 64 1 120 1 30 1-17 1 79 1-98 1-43 1 38 1 1 1-12 1-43 1 41 1-30 1 8 1 36 1-7 1 74 1 22 1-88 1-23 1-1 1 47 1 18 1 25 1 23 1-1 1-46 1-104 1 22 1 29 1 37 1-18 1 21 1 32 1 36 1-27 1-40 1-26 1 36 1-82 1-34 1 52V12409H0Z" fill="#B7DBAB"/><path d="M0 11674l1-60 1 95 1 16 1-31 1-44 1 71 1 85 1-77 1-56 1 66 1 28 1-6 1-5 1-4 1-38 1-51 1 4 1-24 1 103 1 55 1-71 1-82 1 85 1-12 1-14 1-16 1-36 1 14 1 45 1-27 1-1 1 38 1 27 1-88 1-23 1 9 1-44 1-35 1 2 1 62 1 63 1-36 1 19 1 47 1 70 1-70 1-22 1-40 1-58 1-17 1-11 1 27 1 125 1 54 1-15 1-54 1-75 1-76 1 108 1 42 1-30 1 39 1 23 1 57 1 33 1-99 1-44 1-41 1-48 1 65 1 18 1-12 1-52 1 76 1 34 1 24 1-102 1-65 1 95 1 60 1-23 1-22 1 65 1-87 1-19 1-11 1 2 1 72 1 75 1 36 1 4 1 58 1 16 1 19 1-46 1-77 1-91 1 93 1 53 1 1 1-34 1 23 1-56 1-18 1 7 1 66 1 58 1-22 1-32 1-10 1 13 1-65 1 18 1 32 1 0 1-27 1 34 1-38 1 53 1 30 1 8 1-11 1-77 1-8 1-17 1-3 1 72 1-64 1-27 1 32 1 41 1-15 1-45 1-4 1-1 1-7 1 41 1 37 1-27 1-56 1-20 1 3 1 19 1-8 1 31 1-57 1-12 1 36 1 66 1 21 1-4 1-50 1 35 1-49 1-43 1 11 1 53 1 25 1 10 1 20 1 0 1-37 1-40 1 12 1-15 1-24 1-12 1 34 1 1 1-83 1-2 1-18 1 45 1 20 1-11 1-50 1-29 1 17 1-78 1 14 1 20 1 74 1 86 1 33 1-130 1-1 1 60 1 25 1-55 1 19 1-56 1 25 1 26 1 40 1 37 1 25 1-86 1-99 1 28 1 102 1 22 1-10 1 69 1-82 1-48 1 28 1 2 1-21 1-49 1 37 1-24 1 12 1 39 1-6 1 63 1 17 1-71 1-12 1 0 1 37 1 16 1 23 1 28 1 5 1-46 1-100 1 8 1 27 1 42 1-12 1 10 1 26 1 38 1-18 1-42 1-16 1 39 1-92 1-31 1 41V12409H0Z" fill="#584477"/><path d="M0 11693l1-62 1 89 1 21 1-29 1-45 1 74 1 87 1-78 1-58 1 67 1 27 1-9 1-4 1-4 1-37 1-47 1 5 1-21 1 101 1 53 1-72 1-84 1 83 1-9 1-9 1-13 1-36 1 10 1 39 1-28 1 0 1 37 1 28 1-85 1-22 1 8 1-40 1-36 1 0 1 59 1 63 1-31 1 22 1 44 1 70 1-66 1-25 1-37 1-61 1-20 1-8 1 22 1 121 1 58 1-16 1-51 1-76 1-74 1 112 1 44 1-30 1 38 1 21 1 52 1 32 1-100 1-45 1-39 1-47 1 66 1 21 1-10 1-53 1 71 1 34 1 23 1-103 1-68 1 95 1 60 1-24 1-21 1 68 1-80 1-20 1-14 1-2 1 73 1 77 1 36 1 7 1 57 1 13 1 14 1-46 1-73 1-91 1 91 1 54 1 0 1-36 1 20 1-55 1-16 1 9 1 65 1 57 1-22 1-34 1-10 1 16 1-63 1 16 1 31 1-1 1-22 1 35 1-39 1 51 1 28 1 8 1-12 1-75 1-5 1-17 1-6 1 70 1-63 1-31 1 30 1 45 1-10 1-41 1-2 1-1 1-10 1 39 1 38 1-23 1-49 1-16 1-1 1 13 1-12 1 33 1-52 1-14 1 32 1 61 1 19 1-5 1-46 1 33 1-47 1-39 1 10 1 49 1 22 1 12 1 20 1-2 1-36 1-35 1 10 1-16 1-21 1-11 1 31 1-3 1-85 1-1 1-13 1 45 1 20 1-8 1-48 1-25 1 19 1-75 1 9 1 14 1 69 1 87 1 35 1-126 1-1 1 56 1 22 1-55 1 22 1-52 1 28 1 28 1 37 1 35 1 26 1-85 1-97 1 26 1 98 1 23 1-7 1 63 1-83 1-46 1 29 1 5 1-20 1-52 1 30 1-25 1 16 1 40 1-7 1 63 1 13 1-72 1-9 1 2 1 37 1 16 1 26 1 29 1 6 1-46 1-98 1 10 1 31 1 37 1-14 1 8 1 22 1 35 1-16 1-40 1-14 1 39 1-91 1-33 1 40V12409H0Z" fill="#6D1F62"/><path d="M0 11747l1-59 1 81 1 16 1-20 1-37 1 71 1 85 1-65 1-52 1 59 1 19 1-10 1 1 1 4 1-42 1-55 1 7 1-18 1 101 1 53 1-75 1-76 1 84 1-10 1-14 1-6 1-30 1 8 1 31 1-30 1-3 1 25 1 25 1-81 1-14 1 23 1-34 1-41 1-1 1 51 1 53 1-15 1 29 1 37 1 62 1-60 1-22 1-33 1-51 1-27 1-17 1 27 1 107 1 53 1-8 1-47 1-70 1-65 1 101 1 36 1-28 1 33 1 17 1 37 1 30 1-83 1-34 1-29 1-51 1 56 1 15 1-18 1-49 1 74 1 34 1 20 1-103 1-67 1 90 1 51 1-16 1-14 1 60 1-65 1-9 1-17 1-10 1 58 1 76 1 45 1 8 1 37 1 6 1 24 1-36 1-72 1-78 1 87 1 43 1-4 1-32 1 14 1-52 1-18 1-1 1 54 1 51 1-13 1-17 1-4 1 19 1-55 1 7 1 33 1 4 1-27 1 25 1-37 1 45 1 21 1 10 1-3 1-69 1-4 1-12 1-3 1 63 1-64 1-24 1 30 1 35 1-14 1-43 1-9 1-3 1-1 1 42 1 37 1-15 1-33 1-7 1-11 1 1 1-13 1 27 1-43 1-11 1 32 1 54 1 11 1-6 1-43 1 27 1-45 1-37 1 14 1 46 1 23 1 15 1 10 1-6 1-27 1-31 1 7 1-14 1-10 1-5 1 27 1-1 1-69 1-2 1-14 1 35 1 27 1 1 1-47 1-34 1 12 1-62 1 6 1 20 1 63 1 75 1 27 1-113 1 2 1 45 1 26 1-46 1 14 1-43 1 21 1 20 1 37 1 26 1 21 1-75 1-87 1 20 1 77 1 27 1 5 1 56 1-72 1-43 1 23 1 5 1-29 1-54 1 30 1-23 1 16 1 40 1 1 1 58 1 10 1-59 1 2 1-4 1 21 1 12 1 31 1 32 1 8 1-45 1-96 1 2 1 28 1 47 1-17 1 8 1 25 1 18 1-29 1-31 1-3 1 39 1-80 1-32 1 42V12409H0Z" fill="#0A437C"/><path d="M0 11804l1-54 1 71 1 18 1-18 1-41 1 66 1 77 1-69 1-55 1 54 1 19 1-5 1 6 1 10 1-39 1-56 1 1 1-18 1 103 1 54 1-69 1-74 1 79 1-10 1-18 1-9 1-33 1 8 1 31 1-32 1 0 1 25 1 30 1-71 1-16 1 26 1-35 1-47 1 1 1 48 1 46 1-14 1 25 1 39 1 64 1-60 1-27 1-31 1-46 1-32 1-24 1 27 1 108 1 57 1-2 1-47 1-72 1-60 1 102 1 36 1-23 1 30 1 7 1 28 1 31 1-68 1-27 1-24 1-40 1 44 1 3 1-23 1-43 1 72 1 28 1 18 1-94 1-56 1 91 1 50 1-20 1-21 1 56 1-59 1-12 1-19 1-5 1 63 1 75 1 39 1 0 1 32 1 8 1 26 1-33 1-74 1-73 1 85 1 34 1-4 1-32 1 5 1-47 1-10 1 3 1 50 1 50 1-11 1-16 1-2 1 14 1-65 1 2 1 38 1 14 1-19 1 19 1-38 1 42 1 22 1 7 1-1 1-62 1-7 1-13 1-6 1 60 1-54 1-21 1 24 1 34 1-11 1-36 1-8 1-9 1-6 1 43 1 37 1-10 1-28 1-19 1-12 1 14 1-3 1 16 1-50 1-13 1 32 1 56 1 17 1-4 1-41 1 20 1-46 1-32 1 9 1 35 1 27 1 19 1 11 1-3 1-27 1-34 1 1 1-7 1-5 1-6 1 21 1-3 1-71 1 0 1-6 1 37 1 26 1 9 1-37 1-36 1-5 1-63 1 16 1 27 1 57 1 61 1 25 1-100 1 0 1 35 1 16 1-48 1 18 1-33 1 18 1 14 1 37 1 35 1 24 1-67 1-88 1 12 1 76 1 27 1 0 1 51 1-62 1-38 1 14 1-3 1-27 1-48 1 40 1-17 1 13 1 40 1-6 1 50 1 9 1-49 1 6 1-8 1 18 1 11 1 24 1 28 1 9 1-42 1-90 1 8 1 32 1 40 1-22 1 11 1 36 1 20 1-34 1-30 1-2 1 32 1-75 1-30 1 35V12409H0Z" fill="#890F02"/><path d="M0 11837l1-45 1 67 1 20 1-21 1-38 1 63 1 67 1-64 1-51 1 53 1 20 1-9 1 10 1 17 1-36 1-50 1-2 1-18 1 90 1 45 1-62 1-72 1 70 1-2 1-16 1-15 1-35 1 12 1 34 1-27 1 2 1 24 1 21 1-75 1-12 1 28 1-30 1-45 1-7 1 47 1 52 1-14 1 14 1 36 1 66 1-51 1-21 1-30 1-53 1-34 1-19 1 30 1 107 1 56 1-4 1-38 1-65 1-51 1 97 1 24 1-29 1 18 1 6 1 30 1 29 1-56 1-22 1-24 1-39 1 42 1 1 1-23 1-36 1 69 1 19 1 16 1-84 1-49 1 86 1 51 1-22 1-27 1 54 1-63 1-9 1-8 1-8 1 56 1 73 1 37 1-1 1 30 1 4 1 20 1-32 1-74 1-72 1 85 1 37 1-3 1-37 1 6 1-37 1-16 1-5 1 53 1 55 1-8 1-15 1-1 1 18 1-57 1 0 1 40 1 16 1-21 1 8 1-38 1 38 1 18 1 5 1-2 1-45 1-2 1-18 1-14 1 57 1-43 1-23 1 22 1 36 1-6 1-33 1-9 1-9 1-2 1 33 1 23 1-9 1-21 1-17 1-18 1 9 1 7 1 20 1-47 1-6 1 30 1 50 1 14 1-7 1-39 1 14 1-47 1-20 1 14 1 29 1 25 1 18 1 12 1-3 1-34 1-34 1 2 1-7 1 6 1-7 1 15 1-6 1-69 1-1 1-9 1 30 1 22 1 17 1-30 1-33 1 2 1-51 1 15 1 25 1 53 1 51 1 22 1-91 1 6 1 28 1 0 1-47 1 24 1-29 1 11 1 19 1 44 1 33 1 19 1-65 1-84 1 11 1 74 1 23 1 0 1 45 1-58 1-32 1 14 1-3 1-31 1-52 1 36 1-12 1 17 1 43 1-4 1 35 1 4 1-38 1 10 1-11 1 18 1 11 1 23 1 31 1 13 1-44 1-86 1 10 1 32 1 37 1-23 1 9 1 34 1 19 1-28 1-25 1-8 1 29 1-74 1-28 1 38V12409H0Z" fill="#C15C17"/><path d="M0 11877l1-49 1 65 1 21 1-12 1-33 1 54 1 62 1-54 1-50 1 45 1 14 1-9 1 16 1 14 1-36 1-48 1 1 1-14 1 80 1 34 1-58 1-69 1 70 1-1 1-17 1-13 1-34 1 13 1 38 1-19 1 2 1 22 1 22 1-74 1-11 1 32 1-22 1-34 1-19 1 30 1 42 1-12 1 21 1 48 1 62 1-56 1-22 1-33 1-45 1-23 1-20 1 24 1 100 1 45 1-10 1-30 1-56 1-52 1 86 1 25 1-24 1 20 1 5 1 28 1 23 1-57 1-14 1-24 1-39 1 40 1-2 1-18 1-30 1 60 1 15 1 16 1-68 1-45 1 78 1 52 1-18 1-23 1 40 1-57 1-2 1-10 1-13 1 46 1 69 1 40 1 5 1 24 1 1 1 17 1-33 1-70 1-65 1 79 1 36 1 2 1-31 1 2 1-33 1-14 1-10 1 49 1 48 1-12 1-9 1 6 1 11 1-53 1 5 1 38 1 6 1-19 1 16 1-37 1 27 1 15 1 11 1 1 1-41 1 1 1-21 1-14 1 52 1-51 1-25 1 29 1 37 1-4 1-27 1-10 1-12 1-7 1 27 1 23 1 0 1-13 1-18 1-18 1 5 1 12 1 25 1-48 1-19 1 32 1 55 1 12 1-11 1-39 1 14 1-42 1-19 1 10 1 24 1 28 1 24 1 7 1-11 1-34 1-34 1 6 1-1 1 4 1-7 1 21 1-3 1-69 1-9 1-11 1 35 1 23 1 12 1-27 1-22 1-2 1-49 1 15 1 18 1 47 1 47 1 19 1-83 1 9 1 32 1 14 1-42 1 14 1-30 1 10 1 15 1 39 1 30 1 20 1-47 1-80 1 11 1 69 1 16 1-5 1 32 1-60 1-27 1 18 1-2 1-29 1-41 1 39 1-19 1 10 1 40 1 1 1 31 1 3 1-30 1 12 1-13 1 9 1 8 1 22 1 27 1 8 1-37 1-70 1 20 1 33 1 22 1-31 1 8 1 32 1 21 1-25 1-23 1-8 1 20 1-78 1-24 1 46V12409H0Z" fill="#447EBC"/><path d="M0 11908l1-51 1 65 1 17 1-8 1-13 1 54 1 52 1-46 1-45 1 32 1 8 1-4 1 17 1 21 1-34 1-55 1-3 1-16 1 76 1 37 1-48 1-62 1 60 1 7 1-17 1-17 1-37 1 4 1 36 1-16 1 7 1 21 1 22 1-64 1-10 1 26 1-20 1-33 1-22 1 25 1 39 1-10 1 24 1 47 1 54 1-49 1-22 1-35 1-39 1-16 1-21 1 25 1 98 1 39 1-18 1-32 1-49 1-36 1 94 1 25 1-31 1 9 1 3 1 24 1 16 1-47 1-11 1-25 1-35 1 34 1-3 1-16 1-29 1 48 1 9 1 13 1-68 1-38 1 79 1 52 1-12 1-18 1 37 1-56 1-2 1-5 1-10 1 42 1 59 1 31 1 1 1 24 1 3 1 16 1-28 1-63 1-64 1 69 1 38 1 5 1-34 1 3 1-30 1-18 1-5 1 47 1 50 1-9 1-12 1 6 1 11 1-45 1 5 1 28 1 7 1-13 1 16 1-34 1 24 1 11 1 6 1 3 1-36 1 3 1-21 1-17 1 47 1-45 1-24 1 32 1 41 1 0 1-20 1-14 1-16 1-8 1 27 1 21 1 1 1-12 1-20 1-24 1-2 1 7 1 23 1-37 1-14 1 31 1 55 1 12 1-9 1-41 1 8 1-35 1-18 1 13 1 28 1 26 1 15 1 3 1-11 1-28 1-29 1 6 1 5 1 8 1-15 1 14 1-5 1-73 1-8 1-8 1 36 1 25 1 8 1-24 1-24 1 4 1-36 1 16 1 17 1 38 1 41 1 20 1-82 1-1 1 30 1 23 1-33 1 6 1-31 1 11 1 10 1 28 1 31 1 21 1-36 1-66 1 13 1 62 1 6 1-9 1 35 1-54 1-26 1 19 1-5 1-30 1-34 1 38 1-18 1 9 1 38 1-11 1 20 1 8 1-21 1 13 1-6 1 13 1 5 1 15 1 28 1 7 1-38 1-57 1 22 1 23 1 13 1-27 1 6 1 25 1 22 1-21 1-24 1-1 1 22 1-74 1-23 1 40V12409H0Z" fill="#F2CC0C"/><path d="M0 11987l1-56 1 42 1 12 1 1 1 6 1 51 1 40 1-40 1-45 1 22 1-7 1-20 1 18 1 27 1-18 1-31 1 4 1-17 1 57 1 25 1-45 1-53 1 59 1-1 1-21 1-13 1-31 1 8 1 34 1-8 1 20 1 20 1 9 1-60 1-18 1 17 1-24 1-31 1-14 1 34 1 43 1-13 1 20 1 42 1 45 1-40 1-19 1-37 1-35 1-15 1-19 1 26 1 79 1 28 1-18 1-27 1-36 1-38 1 80 1 24 1-26 1 16 1-3 1 17 1 19 1-38 1-13 1-23 1-16 1 34 1-12 1-12 1-24 1 26 1 4 1 18 1-60 1-34 1 69 1 56 1-2 1-23 1 21 1-46 1 6 1-2 1-8 1 38 1 48 1 23 1 0 1 18 1 7 1 17 1-26 1-55 1-63 1 63 1 43 1 5 1-25 1 3 1-32 1-17 1-6 1 45 1 51 1-4 1-14 1-2 1 11 1-32 1-4 1 9 1 2 1-9 1 21 1-26 1 23 1 15 1 10 1-1 1-35 1-2 1-22 1-14 1 48 1-28 1-25 1 15 1 28 1 4 1-11 1-8 1-8 1-3 1 14 1 8 1 0 1-13 1-19 1-10 1-3 1 1 1 29 1-35 1-9 1 41 1 47 1 9 1-8 1-36 1 11 1-31 1-27 1-2 1 27 1 25 1 13 1 9 1-8 1-26 1-29 1 1 1 5 1 12 1-10 1 9 1-8 1-59 1 4 1-8 1 20 1 15 1 2 1-22 1-8 1 1 1-28 1 15 1 6 1 29 1 36 1 28 1-61 1-8 1 21 1 28 1-26 1 0 1-29 1 12 1 7 1 18 1 26 1 20 1-25 1-61 1 0 1 53 1 1 1-10 1 32 1-37 1-18 1 8 1-3 1-24 1-27 1 42 1-15 1 5 1 30 1-8 1 20 1 6 1-30 1 11 1 9 1 14 1-4 1 10 1 24 1 2 1-35 1-56 1 18 1 22 1 15 1-16 1 5 1 19 1 17 1-13 1-20 1-13 1 16 1-62 1-15 1 41V12409H0Z" fill="#19730E"/><path d="M0 12055l1-58 1 33 1 11 1-12 1 8 1 48 1 38 1-32 1-38 1 22 1-4 1-22 1 11 1 24 1-15 1-19 1 6 1-14 1 40 1 18 1-40 1-52 1 55 1 3 1-21 1-11 1-24 1 6 1 28 1-14 1 9 1 13 1 18 1-42 1-11 1 16 1-14 1-25 1-23 1 25 1 42 1-8 1 19 1 34 1 29 1-38 1-15 1-30 1-30 1-5 1-8 1 22 1 68 1 25 1-15 1-30 1-39 1-42 1 74 1 24 1-28 1 15 1 3 1 22 1 12 1-31 1-1 1-29 1-20 1 32 1-9 1-19 1-33 1 26 1 5 1 20 1-48 1-33 1 59 1 48 1-3 1-18 1 22 1-37 1 12 1 4 1-11 1 20 1 30 1 23 1 10 1 21 1 4 1 13 1-23 1-41 1-48 1 49 1 32 1 5 1-22 1 6 1-22 1-16 1-5 1 37 1 40 1-7 1-13 1 3 1 18 1-22 1-3 1-4 1-3 1-7 1 18 1-21 1 16 1 17 1 6 1-4 1-30 1-7 1-18 1-7 1 46 1-18 1-13 1 6 1 10 1 5 1-1 1-4 1-7 1-5 1 9 1 3 1-4 1-8 1-14 1-3 1-3 1-3 1 26 1-35 1-10 1 33 1 43 1 15 1-10 1-31 1 12 1-30 1-25 1-3 1 24 1 26 1 16 1 15 1-13 1-31 1-18 1 4 1 8 1 17 1-11 1 3 1-11 1-49 1 5 1-15 1 14 1 14 1 7 1-8 1-1 1-5 1-35 1 15 1 11 1 25 1 37 1 21 1-60 1-16 1 9 1 27 1-13 1 4 1-26 1 8 1 1 1 14 1 28 1 14 1-26 1-54 1 5 1 45 1-4 1-9 1 25 1-35 1-6 1 15 1-4 1-24 1-21 1 32 1-16 1 10 1 37 1-11 1 7 1 2 1-25 1 11 1-3 1 14 1 6 1 11 1 22 1-1 1-31 1-51 1 15 1 18 1 10 1-15 1 13 1 22 1 17 1-12 1-20 1-12 1 11 1-54 1-7 1 38V12409H0Z" fill="#705DA0"/><path d="M0 12097l1-49 1 33 1 8 1-13 1 4 1 44 1 36 1-32 1-34 1 18 1-8 1-16 1 9 1 12 1-13 1-15 1-1 1-12 1 41 1 17 1-29 1-40 1 50 1 2 1-26 1-11 1-22 1 9 1 28 1-14 1 10 1 12 1 21 1-39 1-23 1 11 1-12 1-20 1-18 1 26 1 40 1-12 1 15 1 30 1 29 1-28 1-8 1-33 1-36 1-2 1-2 1 18 1 56 1 27 1-14 1-24 1-31 1-42 1 63 1 18 1-34 1 17 1 10 1 21 1 8 1-29 1 9 1-20 1-19 1 28 1-14 1-23 1-29 1 29 1 8 1 16 1-44 1-27 1 52 1 39 1 1 1-8 1 23 1-35 1 2 1-2 1-10 1 22 1 28 1 21 1 8 1 13 1 2 1 11 1-18 1-37 1-44 1 44 1 25 1-1 1-17 1 5 1-25 1-10 1-2 1 35 1 38 1-5 1-7 1 6 1 12 1-26 1-7 1-3 1 3 1-2 1 11 1-24 1 13 1 18 1 4 1-6 1-30 1-7 1-9 1 1 1 43 1-16 1-9 1 3 1 5 1 4 1-2 1-4 1-5 1-7 1 10 1 5 1-6 1-10 1-4 1 3 1-1 1-2 1 15 1-39 1-7 1 38 1 40 1 9 1-12 1-25 1 12 1-29 1-17 1 2 1 18 1 22 1 14 1 4 1-15 1-18 1-11 1 3 1 6 1 12 1-10 1-1 1-12 1-46 1 5 1-7 1 15 1 15 1 7 1-7 1-1 1-4 1-28 1 12 1-4 1 10 1 41 1 22 1-52 1-4 1 7 1 15 1-14 1 11 1-19 1 6 1 2 1 13 1 26 1 15 1-28 1-55 1 1 1 34 1 0 1-1 1 22 1-30 1-4 1 16 1-9 1-25 1-15 1 31 1-9 1 7 1 31 1-7 1-2 1-4 1-23 1 12 1 5 1 15 1 1 1 9 1 18 1 1 1-28 1-46 1 15 1 24 1 7 1-15 1 12 1 14 1 11 1-14 1-20 1-1 1 14 1-54 1-15 1 34V12409H0Z" fill="#A352CC"/><path d="M0 12143l1-41 1 29 1 8 1-15 1-6 1 31 1 36 1-17 1-30 1 20 1 0 1-13 1 10 1 14 1-18 1-16 1-5 1-16 1 31 1 16 1-19 1-28 1 44 1-2 1-15 1-3 1-19 1 7 1 17 1-11 1 8 1 10 1 15 1-34 1-23 1 5 1 0 1-9 1-15 1 8 1 24 1-10 1 21 1 35 1 25 1-22 1-12 1-28 1-34 1-1 1-5 1 11 1 51 1 25 1-1 1-23 1-42 1-45 1 57 1 21 1-27 1 17 1 14 1 19 1-1 1-26 1 20 1-28 1-31 1 38 1-9 1-27 1-21 1 31 1 9 1 16 1-34 1-21 1 38 1 31 1 0 1-9 1 23 1-25 1-2 1-13 1-9 1 21 1 31 1 23 1 1 1 8 1 2 1 9 1-15 1-30 1-35 1 35 1 20 1-2 1-14 1 9 1-21 1-11 1-3 1 31 1 34 1 1 1-8 1-3 1 5 1-25 1-5 1-9 1 4 1 5 1 12 1-20 1 14 1 19 1 7 1-8 1-35 1-4 1 5 1 0 1 28 1-18 1-10 1 11 1 10 1 2 1-7 1-3 1-4 1-14 1 14 1 12 1-8 1-7 1 0 1-2 1-4 1-10 1 11 1-25 1 1 1 45 1 30 1-3 1-14 1-20 1 13 1-22 1-10 1-5 1 12 1 21 1 9 1 0 1-10 1-15 1-11 1 12 1 6 1 6 1-13 1-6 1-10 1-43 1 5 1 0 1 17 1 4 1-3 1-2 1 11 1 3 1-20 1 14 1-7 1 3 1 29 1 14 1-48 1-3 1 11 1 15 1-7 1 12 1-15 1 3 1 0 1 6 1 20 1 18 1-16 1-46 1-5 1 30 1 1 1-1 1 16 1-32 1-5 1 21 1-1 1-20 1-9 1 26 1-13 1-2 1 27 1-5 1 2 1-2 1-24 1 9 1 4 1 19 1 15 1 10 1 4 1-10 1-32 1-37 1 20 1 28 1 5 1-19 1 5 1 9 1 12 1-14 1-24 1 2 1 15 1-46 1 0 1 40V12409H0Z" fill="#3274D9"/><path d="M0 12182l1-36 1 25 1 19 1-10 1-14 1 24 1 35 1-11 1-29 1 15 1-9 1-14 1 13 1 15 1-13 1-12 1-6 1-17 1 24 1 12 1-15 1-25 1 44 1 2 1-9 1-7 1-24 1 3 1 13 1-4 1 11 1 6 1 13 1-20 1-11 1 2 1-6 1-19 1-8 1 9 1 16 1-8 1 15 1 32 1 24 1-18 1-11 1-24 1-28 1 4 1-2 1 7 1 41 1 23 1-7 1-21 1-35 1-47 1 50 1 16 1-26 1 17 1 14 1 13 1-2 1-12 1 24 1-29 1-32 1 26 1-2 1-13 1-20 1 26 1 7 1 13 1-27 1-19 1 39 1 30 1 0 1-7 1 15 1-27 1-9 1-15 1-8 1 23 1 23 1 21 1 6 1 8 1 3 1 4 1-8 1-27 1-40 1 29 1 27 1 6 1-23 1 3 1-12 1-3 1-3 1 21 1 27 1 6 1-1 1-8 1-5 1-16 1 0 1-12 1 1 1 4 1 16 1-17 1 8 1 14 1 5 1-5 1-29 1 0 1 12 1 0 1 23 1-13 1-9 1 9 1 11 1 7 1-5 1-7 1-13 1-14 1 13 1 9 1-13 1-15 1 8 1 5 1-1 1-9 1 2 1-21 1 9 1 40 1 24 1-8 1-22 1-21 1 12 1-10 1-2 1-2 1 16 1 13 1 0 1 5 1-5 1-13 1-6 1 5 1 0 1 4 1-5 1-1 1-10 1-40 1-12 1 0 1 22 1 3 1-5 1-1 1 17 1 0 1-22 1 17 1-3 1 2 1 28 1 21 1-38 1-20 1 2 1 19 1-1 1 11 1-13 1 6 1 7 1 0 1 5 1 12 1-5 1-32 1-8 1 22 1-5 1-1 1 17 1-25 1-2 1 16 1-2 1-23 1-12 1 26 1-8 1 1 1 19 1-1 1 7 1-4 1-20 1 7 1 1 1 11 1 15 1 10 1 1 1 1 1-19 1-33 1 13 1 22 1 1 1-22 1 6 1 13 1 15 1-11 1-19 1 2 1 7 1-43 1 7 1 36V12409H0Z" fill="#E02F44"/><path d="M0 12213l1-30 1 28 1 25 1-2 1-15 1 17 1 30 1-14 1-25 1 8 1-6 1-3 1 18 1 8 1-20 1-13 1-5 1-10 1 26 1 15 1-16 1-23 1 32 1 6 1-1 1-7 1-23 1 7 1 9 1-8 1 10 1 14 1 18 1-18 1-14 1 0 1-5 1-27 1-21 1 10 1 15 1-9 1 15 1 29 1 26 1-11 1-9 1-16 1-16 1 4 1 0 1 6 1 35 1 17 1-15 1-18 1-35 1-47 1 47 1 19 1-24 1 9 1 12 1 17 1-4 1-13 1 21 1-27 1-19 1 26 1-6 1-11 1-15 1 25 1 9 1 10 1-23 1-19 1 28 1 29 1 5 1-8 1 6 1-26 1-10 1-10 1-3 1 14 1 20 1 17 1 0 1 6 1 4 1 8 1-2 1-18 1-31 1 19 1 21 1-3 1-25 1 4 1 1 1 12 1 2 1 15 1 14 1 1 1-2 1-4 1 0 1-16 1-7 1-4 1 1 1-1 1 11 1-18 1 7 1 11 1-1 1-1 1-20 1-5 1 8 1 8 1 22 1-6 1-15 1 4 1 13 1 7 1 2 1 0 1-9 1-13 1 13 1 3 1-16 1-13 1 8 1 1 1-2 1-3 1 0 1-19 1 9 1 32 1 18 1-2 1-21 1-26 1 4 1-11 1-3 1-3 1 18 1 14 1 4 1 8 1-3 1-18 1-9 1 8 1-1 1 5 1-4 1-7 1-11 1-27 1 0 1-3 1 15 1 2 1 0 1 8 1 13 1-4 1-21 1 5 1-9 1 7 1 34 1 24 1-29 1-15 1-1 1 11 1-2 1 8 1-15 1-4 1 7 1 8 1 6 1 18 1-4 1-33 1-7 1 23 1 2 1 0 1 10 1-27 1-6 1 10 1-5 1-14 1 2 1 23 1-16 1-4 1 15 1 2 1 7 1-7 1-17 1 3 1 2 1 9 1 16 1 13 1 1 1 1 1-11 1-29 1 3 1 25 1 1 1-23 1 4 1 16 1 7 1-16 1-8 1 12 1 10 1-36 1 7 1 29V12409H0Z" fill="#FA6400"/><path d="M0 12282l1-20 1 15 1 10 1 1 1-13 1 6 1 22 1 1 1-8 1 2 1-10 1-3 1 17 1 9 1-19 1-19 1-1 1-3 1 15 1 13 1-7 1-14 1 29 1 5 1-8 1-7 1-9 1-1 1-9 1-6 1 13 1 14 1 15 1-14 1-19 1-9 1-5 1-9 1-1 1 18 1 7 1-13 1-1 1 9 1 14 1-2 1 10 1-7 1-8 1 8 1-2 1 7 1 20 1 6 1-13 1-11 1-18 1-39 1 25 1 17 1-20 1 10 1 13 1 9 1-3 1-6 1 15 1-13 1-13 1 11 1-5 1-5 1-9 1 11 1-3 1 0 1-7 1 2 1 18 1 15 1-1 1-11 1 8 1-17 1-9 1-4 1-1 1 9 1 14 1 8 1-1 1 12 1 2 1 1 1 0 1-10 1-24 1 6 1 17 1 2 1-17 1 9 1 2 1 7 1 4 1 6 1 6 1 3 1-1 1-8 1-1 1-12 1-5 1-4 1-5 1-5 1 15 1 2 1 12 1 7 1 0 1-4 1-12 1-6 1 8 1 9 1 9 1-6 1-13 1-6 1 0 1 10 1 3 1 0 1-2 1-12 1 12 1 9 1-9 1 2 1 9 1 2 1-9 1-3 1 0 1-18 1 2 1 16 1 14 1 1 1-23 1-22 1 2 1-11 1 11 1 1 1 0 1 11 1 10 1 6 1-2 1-16 1-6 1 14 1 2 1 1 1-3 1-1 1-9 1-26 1 3 1 1 1 12 1 4 1-5 1 5 1 17 1-3 1-18 1-1 1-12 1 4 1 26 1 10 1-23 1-1 1 2 1 10 1-9 1 3 1-1 1-4 1-5 1 2 1 8 1 16 1-1 1-16 1-6 1 16 1 6 1 6 1 6 1-17 1-4 1-4 1-9 1-9 1 3 1 14 1-13 1-5 1 10 1 9 1 6 1-14 1-25 1 2 1 10 1 16 1 15 1 12 1 4 1-6 1-13 1-18 1 2 1 22 1 8 1-17 1-3 1 4 1 3 1-5 1-6 1 7 1 14 1-19 1 2 1 11V12409H0Z" fill="#5794F2"/><path d="M0 12321l1-10 1 18 1 5 1-4 1-12 1 0 1 17 1 8 1-5 1 2 1-5 1-6 1 11 1 2 1-13 1-13 1 2 1 4 1 1 1 4 1-2 1-2 1 19 1-4 1-7 1-4 1-1 1 0 1-14 1-6 1 19 1 12 1-3 1-14 1-12 1-1 1 2 1-7 1 8 1 22 1-2 1-17 1-2 1 7 1 13 1 4 1 9 1-2 1-5 1 6 1 2 1 2 1 10 1 4 1-7 1-7 1-16 1-33 1 18 1 13 1-20 1 6 1 11 1-1 1-1 1 10 1 13 1-13 1-13 1 5 1 8 1-5 1-10 1 5 1-9 1 0 1-3 1-5 1 12 1 13 1 3 1 1 1 4 1-20 1-7 1 4 1-1 1 7 1 6 1 2 1 1 1 8 1 2 1 5 1 4 1-9 1-22 1 1 1 9 1-1 1-12 1 4 1 3 1 6 1 11 1 12 1 6 1 0 1 0 1-4 1-6 1-12 1-6 1-3 1-4 1-2 1 12 1-1 1 7 1 7 1 2 1 2 1-8 1-8 1 2 1 0 1 4 1 1 1-7 1-8 1 0 1 8 1 8 1 2 1-3 1-13 1 9 1 5 1-8 1 4 1 7 1 4 1 2 1-4 1-1 1-12 1-6 1 10 1 12 1 2 1-14 1-17 1-3 1-7 1 6 1 2 1 6 1 9 1 2 1 1 1-8 1-14 1 7 1 10 1 0 1-2 1-1 1 1 1-9 1-14 1 2 1-5 1 7 1 8 1 4 1 1 1 12 1 3 1-10 1-3 1-9 1 4 1 19 1 0 1-24 1 2 1 14 1 9 1-15 1-2 1-5 1-6 1-2 1 3 1 7 1 18 1 5 1-20 1-6 1 9 1-1 1 3 1 6 1-6 1 4 1-7 1-7 1-9 1 0 1 16 1-9 1-7 1 4 1 4 1 5 1-4 1-13 1 3 1 4 1 6 1 13 1 12 1 1 1-5 1-5 1-12 1-2 1 12 1 1 1-15 1-1 1 7 1 7 1 3 1-1 1 0 1 10 1-16 1-4 1 10V12409H0Z" fill="#E0B400"/><path d="M0 12383l1-1 1-3 1 0 1-2 1-13 1 4 1 12 1 4 1 4 1 0 1-10 1-3 1 8 1 4 1-6 1-10 1-1 1 2 1-1 1-3 1 0 1 0 1 9 1 4 1 5 1-3 1-6 1-2 1-7 1-5 1 9 1 9 1-1 1-1 1 2 1-2 1-1 1-7 1 4 1 7 1-7 1-10 1-2 1 8 1 9 1-4 1 3 1 3 1-4 1 0 1-1 1 5 1 7 1-1 1-5 1-2 1-8 1-9 1 12 1 1 1-15 1 2 1 9 1 3 1 3 1 0 1 0 1-7 1-9 1 3 1 4 1 1 1-1 1 3 1-6 1-5 1-2 1 3 1 7 1 2 1 0 1 1 1 9 1-4 1-9 1 0 1 1 1 4 1 3 1 1 1-4 1 0 1 6 1 3 1-2 1-3 1-7 1 5 1 4 1 2 1-6 1 1 1 2 1-2 1-2 1 2 1 5 1 0 1 0 1 2 1 2 1-4 1 1 1-3 1-8 1-9 1 4 1 5 1 6 1 1 1-2 1 2 1 2 1 1 1-2 1-4 1 2 1 0 1 0 1-2 1-2 1 4 1 6 1 3 1-2 1-11 1 3 1 5 1-6 1 0 1 4 1-1 1-2 1-1 1 5 1-1 1-2 1 1 1 2 1 0 1-5 1-6 1 1 1-3 1-1 1 1 1 6 1 5 1-1 1 4 1 0 1-4 1 0 1 4 1-1 1-8 1-7 1 0 1 0 1-4 1 4 1 3 1 2 1-5 1-7 1 6 1 14 1 4 1-8 1-3 1-7 1 1 1 10 1 0 1-10 1 7 1 8 1 1 1-6 1-2 1-4 1 2 1 1 1 3 1 4 1 5 1-6 1-13 1 0 1 5 1 2 1 3 1-2 1-7 1 3 1 5 1 0 1 0 1 6 1 2 1-7 1 1 1 1 1-5 1 2 1 4 1-11 1-5 1 5 1 1 1 2 1 6 1 2 1-2 1 2 1-2 1 0 1 6 1 4 1-3 1-7 1 0 1 3 1-3 1 4 1 2 1 3 1-2 1-2 1 0V12409H0Z" fill="#56A64B"/></g></svg><span id="t161" style="position:absolute;left:84.92px;top:1231.70px;height:18px;line-height:18px;font-size:12.3px;white-space:pre;color:#24292e;letter-spacing:0.317px;transform:translateX(-100%);">0 B/s</span><span id="t162" style="position:absolute;left:85.11px;top:1184.10px;height:18px;line-height:18px;font-size:12.3px;white-space:pre;color:#24292e;letter-spacing:0.507px;transform:translateX(-100%);">200 MB/s</span><span id="t163" style="position:absolute;left:85.11px;top:1136.50px;height:18px;line-height:18px;font-size:12.3px;white-space:pre;color:#24292e;letter-spacing:0.507px;transform:translateX(-100%);">400 MB/s</span><span id="t164" style="position:absolute;left:90.79px;top:1246.90px;height:18px;line-height:18px;font-size:12.3px;white-space:pre;color:#24292e;letter-spacing:-0.008px;transform:translateX(-50%);">13:45</span><span id="t165" style="position:absolute;left:151.98px;top:1246.90px;height:18px;line-height:18px;font-size:12.3px;white-space:pre;color:#24292e;letter-spacing:0.117px;transform:translateX(-50%);">14:00</span><span id="t166" style="position:absolute;left:212.82px;top:1246.90px;height:18px;line-height:18px;font-size:12.3px;white-space:pre;color:#24292e;letter-spacing:-0.450px;transform:translateX(-50%);">14:15</span><span id="t167" style="position:absolute;left:274.23px;top:1246.90px;height:18px;line-height:18px;font-size:12.3px;white-space:pre;color:#24292e;letter-spacing:0.117px;transform:translateX(-50%);">14:30</span><div class="mk" style="left:29.2px;top:1274.15px;background:#56A64B"></div><span id="t168" style="position:absolute;left:51.25px;top:1266.75px;height:18px;line-height:18px;font-size:12.3px;white-space:pre;color:#24292e;letter-spacing:0.593px;">ruler-querier-78f54b4755-28cmg</span><div class="mk" style="left:29.2px;top:1297.65px;background:#E0B400"></div><span id="t169" style="position:absolute;left:51.25px;top:1290.25px;height:18px;line-height:18px;font-size:12.3px;white-space:pre;color:#24292e;letter-spacing:0.585px;">ruler-querier-78f54b4755-4dv7m</span><div class="mk" style="left:29.2px;top:1321.15px;background:#5794F2"></div><span id="t170" style="position:absolute;left:51.25px;top:1313.75px;height:18px;line-height:18px;font-size:12.3px;white-space:pre;color:#24292e;letter-spacing:0.581px;">ruler-querier-78f54b4755-68c7p</span><div class="panel" style="left:360px;top:1086px"></div><span id="t171" style="position:absolute;left:369.20px;top:1091.60px;height:22px;line-height:22px;font-size:14.5px;white-space:pre;color:#24292e;-webkit-text-stroke:0.3px #24292e;letter-spacing:0.488px;">Transmit bandwidth</span><svg style="left:0;top:0" width="1400" height="1400" viewBox="0 0 1400 1400"><g stroke="#e9eaeb" stroke-width="1" fill="none" shape-rendering="crispEdges"><path d="M427.5 1135.25V1244.90"/><path d="M490.5 1135.25V1244.90"/><path d="M553.5 1135.25V1244.90"/><path d="M616.5 1135.25V1244.90"/><path d="M426.50 1240.5H679.00"/><path d="M426.50 1193.5H679.00"/><path d="M426.50 1145.5H679.00"/></g><g transform="translate(426.5 0) scale(1.05208 0.1)"><path d="M0 11594l1 169 1-37 1 9 1-119 1 76 1-92 1-2 1 74 1-5 1-6 1-93 1 159 1-53 1-62 1-112 1 98 1-6 1 3 1-55 1 176 1 3 1-30 1-30 1-119 1 138 1-30 1-74 1-119 1 200 1 45 1-14 1-52 1 54 1-120 1 36 1-75 1 86 1 68 1-97 1 49 1-36 1 57 1-147 1 67 1 17 1 81 1-87 1 108 1-24 1-43 1-144 1 117 1-10 1 42 1 85 1-72 1 140 1-64 1-121 1-36 1-137 1 187 1 74 1 14 1-61 1-153 1 133 1 42 1 24 1-154 1 102 1 21 1-94 1 133 1-3 1-20 1-18 1-42 1 25 1-79 1 117 1-43 1-25 1-12 1 36 1 79 1-94 1 39 1-48 1 67 1-86 1 53 1-59 1 73 1-44 1 75 1-26 1 51 1-181 1 57 1-66 1 43 1-85 1 165 1 67 1 77 1-11 1-123 1 99 1-47 1-8 1-152 1 83 1-38 1 8 1-90 1 127 1 27 1 33 1-19 1-165 1 159 1-8 1 44 1-40 1 84 1-34 1-40 1-31 1-87 1 69 1-18 1 18 1-63 1-25 1 116 1-101 1 148 1-24 1-11 1-91 1 162 1 29 1-148 1 61 1-20 1 42 1-110 1 12 1-16 1 59 1-15 1-132 1 178 1 1 1-29 1-106 1 89 1-7 1 49 1-95 1 159 1-10 1-128 1 80 1-41 1 49 1-75 1 65 1-58 1-71 1 134 1-27 1 28 1-91 1 15 1-45 1 36 1 41 1-102 1 136 1-20 1-29 1-144 1 203 1 26 1-6 1-158 1 135 1-23 1 8 1-103 1 135 1-13 1-1 1-163 1 126 1 28 1 60 1-120 1 24 1 4 1 32 1-63 1 123 1-17 1 41 1-185 1 76 1 12 1-132 1 72 1-9 1 37 1-75 1 88 1-47 1 60 1-65 1 80 1-13 1-14 1-41 1 43 1-76 1 11 1-118 1 195 1 15 1 24 1-147 1-66 1 119 1-60 1 42 1 20 1 68 1-66 1 31 1-66V12409H0Z" fill="#B7DBAB"/><path d="M0 11698l1 111 1-28 1-3 1-84 1 45 1-81 1 3 1 67 1-5 1-13 1-53 1 104 1-49 1-56 1-84 1 73 1-4 1-4 1-24 1 140 1 10 1-21 1-27 1-82 1 96 1-28 1-79 1-95 1 162 1 50 1-8 1-22 1 30 1-114 1 23 1-38 1 63 1 62 1-57 1 9 1-37 1 52 1-107 1 23 1 25 1 80 1-50 1 71 1-17 1-42 1-106 1 75 1-4 1 41 1 72 1-52 1 107 1-60 1-108 1-34 1-102 1 159 1 74 1 6 1-52 1-109 1 86 1 37 1 20 1-112 1 69 1 19 1-56 1 90 1-6 1-16 1-17 1-36 1 20 1-46 1 84 1-36 1-26 1-11 1 40 1 58 1-70 1 19 1-32 1 55 1-59 1 21 1-56 1 66 1-4 1 27 1-15 1 46 1-130 1 13 1-55 1 34 1-50 1 126 1 73 1 73 1-8 1-85 1 65 1-48 1-15 1-102 1 35 1-36 1 3 1-62 1 104 1 35 1 28 1-12 1-117 1 105 1-3 1 29 1-15 1 66 1-29 1-43 1-30 1-53 1 33 1-13 1 13 1-53 1-12 1 98 1-60 1 112 1-18 1-18 1-55 1 113 1 22 1-120 1 39 1-16 1 31 1-91 1-8 1-5 1 50 1-17 1-85 1 141 1 4 1-24 1-78 1 61 1 0 1 38 1-55 1 116 1-16 1-93 1 54 1-36 1 44 1-42 1 24 1-48 1-42 1 97 1-20 1 12 1-71 1-1 1-39 1 43 1 34 1-54 1 93 1-22 1-27 1-99 1 149 1 24 1-5 1-103 1 86 1-19 1-2 1-67 1 98 1-1 1-2 1-119 1 83 1 28 1 49 1-83 1 0 1 5 1 29 1-31 1 88 1-13 1 27 1-147 1 40 1 10 1-91 1 39 1-2 1 38 1-35 1 47 1-45 1 56 1-31 1 52 1-15 1-13 1-28 1 22 1-70 1 2 1-63 1 146 1 20 1 15 1-100 1-54 1 66 1-60 1 35 1 42 1 49 1-55 1 23 1-46V12409H0Z" fill="#584477"/><path d="M0 11724l1 104 1-23 1 1 1-75 1 35 1-75 1 6 1 63 1-7 1-13 1-39 1 93 1-48 1-54 1-79 1 70 1-2 1-2 1-18 1 125 1 7 1-21 1-28 1-76 1 88 1-30 1-77 1-84 1 156 1 50 1-10 1-17 1 23 1-109 1 20 1-34 1 56 1 58 1-48 1 8 1-33 1 48 1-99 1 21 1 22 1 74 1-44 1 68 1-12 1-40 1-102 1 64 1-6 1 37 1 70 1-42 1 100 1-56 1-100 1-35 1-88 1 147 1 69 1 1 1-51 1-94 1 77 1 37 1 18 1-103 1 62 1 15 1-49 1 84 1-8 1-16 1-14 1-33 1 16 1-42 1 76 1-37 1-27 1-9 1 45 1 54 1-63 1 19 1-27 1 51 1-54 1 12 1-61 1 64 1 10 1 19 1-18 1 40 1-124 1 8 1-46 1 37 1-41 1 112 1 70 1 71 1-8 1-78 1 62 1-45 1-18 1-93 1 24 1-37 1 3 1-53 1 100 1 34 1 27 1-11 1-106 1 96 1-4 1 26 1-14 1 59 1-26 1-43 1-29 1-48 1 34 1-10 1 11 1-53 1-12 1 93 1-49 1 105 1-16 1-16 1-54 1 96 1 18 1-112 1 36 1-13 1 31 1-80 1-9 1-5 1 49 1-17 1-80 1 130 1 4 1-23 1-72 1 52 1 3 1 39 1-45 1 105 1-18 1-87 1 52 1-35 1 43 1-36 1 14 1-47 1-37 1 92 1-15 1 10 1-69 1-6 1-39 1 42 1 32 1-49 1 89 1-19 1-23 1-86 1 133 1 17 1-5 1-91 1 74 1-18 1 2 1-57 1 86 1-3 1 1 1-108 1 78 1 27 1 46 1-76 1-3 1 8 1 24 1-29 1 81 1-7 1 26 1-138 1 29 1 8 1-81 1 35 1 0 1 34 1-30 1 36 1-44 1 59 1-18 1 44 1-15 1-16 1-27 1 14 1-69 1 3 1-56 1 139 1 22 1 14 1-90 1-51 1 56 1-53 1 34 1 42 1 42 1-51 1 20 1-44V12409H0Z" fill="#6D1F62"/><path d="M0 11784l1 93 1-20 1-5 1-64 1 16 1-68 1 12 1 61 1-5 1-12 1-27 1 75 1-43 1-48 1-64 1 57 1-4 1-11 1-15 1 108 1 10 1-15 1-24 1-60 1 69 1-25 1-66 1-61 1 139 1 44 1-12 1-16 1 10 1-106 1 22 1-18 1 49 1 48 1-37 1-5 1-33 1 40 1-85 1 12 1 22 1 67 1-36 1 59 1 1 1-31 1-83 1 57 1-7 1 29 1 55 1-39 1 82 1-59 1-85 1-18 1-78 1 126 1 66 1-4 1-51 1-80 1 69 1 30 1 16 1-75 1 42 1 9 1-32 1 73 1-9 1-19 1-18 1-32 1 19 1-26 1 58 1-29 1-21 1-10 1 37 1 44 1-51 1 13 1-20 1 49 1-35 1 8 1-56 1 57 1 12 1 15 1-15 1 32 1-104 1-4 1-49 1 29 1-28 1 101 1 70 1 62 1-12 1-63 1 54 1-37 1-23 1-80 1 9 1-32 1 11 1-40 1 83 1 25 1 23 1-11 1-90 1 88 1-2 1 18 1-10 1 43 1-17 1-39 1-31 1-41 1 32 1-4 1 7 1-49 1-9 1 84 1-38 1 91 1-17 1-14 1-45 1 81 1 23 1-92 1 19 1-14 1 29 1-71 1-14 1-8 1 41 1-14 1-64 1 115 1 11 1-21 1-60 1 43 1 6 1 34 1-38 1 88 1-18 1-63 1 47 1-37 1 34 1-30 1-2 1-42 1-25 1 83 1-16 1 9 1-50 1-20 1-37 1 42 1 27 1-42 1 70 1-13 1-12 1-66 1 115 1 17 1-9 1-77 1 52 1-18 1-3 1-42 1 82 1-2 1 1 1-98 1 60 1 28 1 42 1-67 1-9 1 12 1 27 1-17 1 68 1-4 1 20 1-122 1 17 1 8 1-71 1 22 1 7 1 34 1-27 1 36 1-35 1 50 1-14 1 25 1-17 1-11 1-17 1 17 1-64 1-5 1-41 1 127 1 18 1 8 1-76 1-44 1 47 1-48 1 25 1 34 1 35 1-40 1 18 1-31V12409H0Z" fill="#0A437C"/><path d="M0 11827l1 79 1-14 1-2 1-47 1 7 1-63 1 7 1 56 1-7 1-14 1-15 1 67 1-33 1-41 1-58 1 45 1 0 1-8 1-8 1 92 1 6 1-19 1-24 1-46 1 61 1-22 1-64 1-54 1 122 1 41 1-9 1-5 1 3 1-100 1 10 1-11 1 41 1 50 1-21 1-8 1-26 1 29 1-70 1-7 1 19 1 69 1-24 1 43 1-4 1-30 1-70 1 43 1 4 1 36 1 50 1-31 1 69 1-52 1-78 1-18 1-60 1 115 1 57 1-12 1-55 1-68 1 60 1 34 1 13 1-71 1 32 1 6 1-19 1 65 1-9 1-17 1-16 1-27 1 15 1-21 1 46 1-28 1-16 1-10 1 38 1 37 1-41 1 11 1-19 1 41 1-27 1-1 1-50 1 55 1 15 1 6 1-13 1 29 1-88 1-14 1-48 1 31 1-18 1 91 1 69 1 56 1-12 1-56 1 41 1-41 1-21 1-58 1 5 1-21 1 12 1-30 1 63 1 15 1 16 1-6 1-74 1 78 1 5 1 14 1-8 1 30 1-16 1-35 1-30 1-28 1 22 1-1 1 3 1-55 1-12 1 80 1-18 1 77 1-9 1-9 1-35 1 68 1 22 1-81 1 5 1-12 1 24 1-62 1-22 1-4 1 39 1-15 1-56 1 100 1 19 1-20 1-50 1 39 1 8 1 29 1-25 1 75 1-21 1-59 1 33 1-40 1 32 1-19 1-10 1-34 1-10 1 74 1-12 1 1 1-45 1-23 1-37 1 44 1 28 1-34 1 53 1-12 1-6 1-47 1 98 1 16 1-13 1-55 1 40 1-19 1-1 1-27 1 61 1-3 1 0 1-79 1 39 1 24 1 43 1-58 1-15 1 8 1 19 1-9 1 60 1-1 1 19 1-105 1 11 1 14 1-57 1 15 1 3 1 27 1-17 1 23 1-30 1 44 1-8 1 21 1-18 1-12 1-14 1 11 1-60 1-4 1-26 1 111 1 14 1 6 1-63 1-41 1 49 1-36 1 16 1 27 1 25 1-37 1 14 1-25V12409H0Z" fill="#890F02"/><path d="M0 11880l1 62 1-14 1-1 1-33 1 3 1-59 1 5 1 51 1-3 1-12 1-1 1 50 1-32 1-46 1-51 1 35 1 2 1-1 1 1 1 79 1 6 1-19 1-26 1-38 1 47 1-18 1-55 1-44 1 103 1 43 1-6 1-1 1-1 1-91 1 7 1-5 1 35 1 44 1-17 1-7 1-16 1 28 1-64 1-19 1 20 1 65 1-15 1 38 1-6 1-35 1-60 1 37 1-2 1 31 1 53 1-21 1 50 1-50 1-75 1-15 1-40 1 93 1 52 1-11 1-52 1-61 1 46 1 35 1 17 1-47 1 26 1 5 1-11 1 53 1-4 1-15 1-17 1-30 1 3 1-19 1 33 1-25 1-18 1-6 1 41 1 35 1-25 1 9 1-16 1 34 1-24 1-7 1-43 1 49 1 24 1-3 1-14 1 26 1-77 1-18 1-45 1 23 1-14 1 78 1 71 1 55 1-7 1-43 1 34 1-39 1-22 1-53 1-4 1-16 1 11 1-22 1 52 1 17 1 20 1-13 1-65 1 64 1 9 1 20 1 1 1 22 1-19 1-36 1-26 1-15 1 10 1-13 1-2 1-42 1-2 1 74 1-5 1 54 1-10 1-12 1-29 1 59 1 18 1-63 1 6 1-12 1 19 1-52 1-26 1-6 1 39 1-5 1-46 1 80 1 19 1-15 1-47 1 21 1 5 1 28 1-9 1 70 1-19 1-55 1 23 1-37 1 26 1-11 1-10 1-29 1 0 1 65 1-9 1-3 1-40 1-30 1-34 1 42 1 24 1-25 1 47 1-12 1-10 1-33 1 82 1 14 1-14 1-41 1 29 1-24 1-1 1-12 1 59 1-5 1-3 1-55 1 24 1 18 1 37 1-46 1-21 1 2 1 21 1 1 1 50 1-2 1 10 1-93 1 3 1 12 1-46 1 19 1 6 1 22 1-9 1 16 1-32 1 38 1 2 1 4 1-15 1-10 1-5 1 11 1-47 1-3 1-22 1 87 1 14 1 9 1-49 1-33 1 44 1-28 1 14 1 23 1 10 1-38 1 11 1-19V12409H0Z" fill="#C15C17"/><path d="M0 11920l1 50 1-10 1-2 1-26 1-2 1-51 1 7 1 48 1-2 1-10 1 1 1 38 1-29 1-42 1-39 1 30 1 0 1-8 1 1 1 67 1 11 1-14 1-27 1-30 1 40 1-18 1-46 1-37 1 89 1 47 1-4 1-2 1-3 1-81 1 8 1-3 1 27 1 38 1-10 1-11 1-21 1 24 1-56 1-18 1 25 1 59 1-7 1 32 1-4 1-37 1-47 1 27 1-6 1 30 1 50 1-17 1 42 1-48 1-74 1-16 1-25 1 84 1 50 1-13 1-54 1-55 1 42 1 35 1 15 1-37 1 19 1 8 1-4 1 46 1-3 1-13 1-14 1-32 1-5 1-15 1 22 1-24 1-11 1-13 1 37 1 40 1-10 1 10 1-18 1 28 1-22 1-15 1-41 1 47 1 34 1-2 1-12 1 20 1-66 1-25 1-40 1 22 1-6 1 62 1 64 1 51 1-8 1-36 1 26 1-36 1-21 1-45 1-11 1-14 1 8 1-18 1 46 1 20 1 16 1-16 1-48 1 53 1 7 1 19 1 10 1 15 1-17 1-34 1-29 1-10 1 3 1-5 1 7 1-34 1-4 1 61 1 0 1 42 1-7 1-9 1-17 1 51 1 12 1-55 1-2 1-8 1 12 1-46 1-26 1-9 1 38 1 0 1-41 1 67 1 15 1-17 1-33 1 15 1 2 1 28 1 5 1 60 1-21 1-51 1 17 1-32 1 25 1-3 1-20 1-24 1 12 1 60 1-9 1-8 1-32 1-30 1-30 1 37 1 19 1-27 1 34 1-4 1-8 1-25 1 71 1 16 1-14 1-33 1 23 1-22 1-3 1-8 1 50 1-2 1-2 1-49 1 14 1 17 1 35 1-41 1-21 1 8 1 25 1 3 1 38 1-4 1 10 1-79 1-6 1 8 1-41 1 11 1 6 1 25 1-1 1 9 1-27 1 35 1 0 1-4 1-12 1-9 1 2 1 10 1-41 1-6 1-17 1 72 1 19 1 16 1-39 1-35 1 34 1-21 1 9 1 25 1 6 1-33 1 6 1-15V12409H0Z" fill="#447EBC"/><path d="M0 11965l1 41 1-13 1-8 1-21 1-2 1-47 1 9 1 46 1-1 1-6 1 1 1 32 1-24 1-41 1-37 1 26 1-1 1-10 1 4 1 62 1 17 1-7 1-25 1-24 1 28 1-16 1-43 1-35 1 76 1 46 1 4 1 3 1-5 1-73 1 6 1 2 1 12 1 32 1 0 1-14 1-16 1 22 1-46 1-27 1 26 1 53 1-8 1 26 1 0 1-32 1-35 1 16 1-9 1 27 1 43 1-13 1 38 1-41 1-65 1-12 1-23 1 70 1 47 1-14 1-56 1-47 1 34 1 38 1 18 1-26 1 14 1 1 1-5 1 41 1-9 1-17 1-13 1-26 1-2 1-9 1 23 1-22 1-8 1-10 1 31 1 33 1-11 1 1 1-16 1 31 1-13 1-19 1-34 1 44 1 35 1-6 1-9 1 13 1-57 1-28 1-34 1 27 1-1 1 47 1 54 1 45 1-5 1-24 1 27 1-33 1-22 1-41 1-23 1-13 1 14 1-12 1 42 1 18 1 15 1-12 1-40 1 44 1 7 1 16 1 9 1 9 1-12 1-31 1-28 1-4 1 0 1-8 1 4 1-31 1-3 1 57 1 5 1 33 1-6 1-9 1-7 1 47 1 10 1-47 1-6 1-5 1 12 1-43 1-32 1-8 1 34 1 0 1-35 1 53 1 12 1-15 1-27 1 13 1 7 1 23 1 8 1 49 1-21 1-42 1 17 1-26 1 27 1 3 1-24 1-27 1 15 1 48 1-11 1-8 1-25 1-28 1-24 1 33 1 10 1-23 1 33 1-4 1-6 1-19 1 62 1 16 1-13 1-20 1 15 1-18 1-5 1-7 1 45 1-3 1-1 1-37 1 5 1 19 1 28 1-33 1-19 1 6 1 20 1 5 1 30 1-5 1 5 1-64 1-9 1 5 1-34 1 8 1 2 1 20 1 1 1 6 1-23 1 29 1 3 1-3 1-10 1-6 1 8 1 10 1-41 1-11 1-9 1 65 1 19 1 12 1-32 1-35 1 33 1-15 1 9 1 26 1-1 1-32 1 2 1-13V12409H0Z" fill="#F2CC0C"/><path d="M0 12016l1 31 1-13 1-9 1-10 1-12 1-40 1 8 1 41 1 0 1-10 1 9 1 28 1-17 1-35 1-28 1 22 1 0 1-11 1 3 1 49 1 19 1-11 1-24 1-14 1 21 1-17 1-44 1-23 1 69 1 45 1 4 1 4 1-14 1-72 1 1 1 9 1 14 1 26 1 2 1-17 1-13 1 21 1-36 1-30 1 28 1 42 1-3 1 17 1-4 1-30 1-22 1 18 1 1 1 28 1 34 1-9 1 30 1-40 1-59 1-8 1-18 1 54 1 44 1-13 1-50 1-38 1 17 1 31 1 24 1-10 1 6 1-3 1 2 1 31 1-7 1-13 1-15 1-22 1 4 1-7 1 12 1-13 1-6 1-9 1 26 1 27 1-7 1-5 1-11 1 29 1-11 1-16 1-23 1 42 1 36 1-14 1-10 1 11 1-53 1-36 1-32 1 20 1 7 1 37 1 49 1 42 1-5 1-16 1 19 1-29 1-26 1-34 1-16 1 0 1 7 1-13 1 29 1 14 1 14 1-8 1-23 1 36 1 5 1 15 1 8 1 8 1-9 1-29 1-26 1-2 1-6 1-9 1 6 1-22 1 1 1 49 1 6 1 23 1-9 1-15 1 3 1 49 1 15 1-36 1-13 1-5 1 7 1-34 1-31 1-7 1 27 1-3 1-17 1 40 1 4 1-14 1-19 1 8 1 11 1 20 1 9 1 39 1-18 1-34 1 11 1-25 1 19 1 13 1-26 1-24 1 21 1 37 1-8 1-6 1-19 1-33 1-23 1 26 1 6 1-10 1 29 1-5 1-6 1-10 1 49 1 17 1-17 1-13 1 7 1-15 1-3 1-2 1 33 1-4 1-5 1-25 1 4 1 22 1 25 1-30 1-17 1 11 1 20 1 5 1 22 1-3 1 1 1-55 1-13 1-1 1-34 1 6 1 13 1 24 1-2 1-6 1-19 1 29 1 9 1-5 1-10 1-13 1 7 1 3 1-35 1-6 1 1 1 57 1 20 1 6 1-27 1-27 1 20 1-19 1 9 1 33 1 2 1-30 1 5 1-2V12409H0Z" fill="#19730E"/><path d="M0 12058l1 28 1-7 1-8 1-11 1-11 1-34 1 4 1 35 1-7 1-17 1 16 1 28 1-7 1-29 1-27 1 10 1-1 1-4 1 3 1 40 1 18 1-10 1-19 1-11 1 15 1-14 1-40 1-17 1 60 1 42 1-4 1 1 1-11 1-62 1 5 1 11 1 1 1 22 1 6 1-20 1-12 1 18 1-29 1-32 1 26 1 41 1 0 1 15 1 2 1-28 1-20 1 11 1 2 1 25 1 31 1 0 1 20 1-38 1-53 1-9 1-8 1 50 1 39 1-15 1-48 1-33 1 18 1 31 1 13 1-6 1 8 1 0 1 6 1 26 1-12 1-19 1-16 1-20 1 2 1 2 1 14 1-10 1-4 1-6 1 21 1 21 1-4 1-6 1-10 1 30 1-7 1-23 1-21 1 43 1 41 1-15 1-11 1 7 1-48 1-39 1-28 1 23 1 13 1 28 1 44 1 36 1-6 1-14 1 12 1-28 1-23 1-27 1-13 1 0 1 2 1-12 1 24 1 17 1 9 1-8 1-12 1 29 1 5 1 12 1 11 1 4 1-9 1-30 1-23 1 5 1-6 1-9 1 1 1-22 1 5 1 50 1 10 1 17 1-6 1-17 1 5 1 40 1 14 1-30 1-13 1-5 1 4 1-28 1-33 1-6 1 30 1 0 1-14 1 35 1 4 1-7 1-13 1-1 1 3 1 12 1 9 1 35 1-16 1-28 1 11 1-18 1 20 1 14 1-29 1-25 1 25 1 35 1-8 1-10 1-16 1-36 1-20 1 26 1 2 1-6 1 24 1-4 1-2 1-5 1 39 1 15 1-15 1-11 1 1 1-15 1 0 1 3 1 29 1 2 1-3 1-23 1-6 1 18 1 29 1-20 1-20 1 7 1 21 1 10 1 19 1-6 1-3 1-50 1-15 1-3 1-27 1 10 1 15 1 22 1-4 1-15 1-25 1 23 1 16 1-4 1-5 1-13 1 10 1 11 1-32 1-7 1 3 1 40 1 16 1 10 1-19 1-22 1 14 1-17 1 8 1 29 1-2 1-27 1 2 1 4V12409H0Z" fill="#705DA0"/><path d="M0 12107l1 21 1-10 1-6 1-2 1-14 1-29 1 5 1 26 1-9 1-12 1 17 1 18 1-8 1-28 1-20 1 11 1 6 1 0 1 1 1 27 1 12 1-4 1-10 1-12 1 7 1-10 1-36 1-14 1 52 1 37 1-1 1 5 1-15 1-53 1-2 1 17 1 9 1 21 1 6 1-25 1-11 1 14 1-24 1-35 1 26 1 47 1 2 1 6 1-3 1-30 1-13 1 14 1 7 1 24 1 26 1-2 1 7 1-32 1-42 1-8 1-10 1 38 1 35 1-12 1-36 1-18 1 16 1 29 1 7 1-11 1 3 1 3 1 16 1 22 1-12 1-21 1-25 1-22 1 6 1 10 1 7 1-10 1-1 1-3 1 20 1 15 1-4 1-8 1-9 1 25 1-7 1-22 1-20 1 38 1 38 1-15 1 0 1 7 1-38 1-35 1-29 1 15 1 19 1 19 1 41 1 33 1-7 1-7 1 7 1-23 1-19 1-22 1-16 1 0 1 2 1-10 1 16 1 10 1 7 1-5 1-6 1 22 1 11 1 13 1 16 1-1 1-14 1-28 1-18 1 3 1-13 1-9 1 2 1-14 1 12 1 41 1 10 1 10 1-11 1-18 1 8 1 32 1 14 1-22 1-12 1 0 1 3 1-16 1-26 1 0 1 21 1-9 1-12 1 31 1 7 1-6 1-13 1-5 1 4 1 8 1 8 1 33 1-5 1-19 1 0 1-20 1 20 1 18 1-25 1-22 1 20 1 20 1-12 1-6 1-9 1-32 1-18 1 20 1 7 1 2 1 14 1-3 1-5 1 3 1 36 1 10 1-17 1-7 1-4 1-10 1 6 1 7 1 10 1-7 1-5 1-13 1-4 1 19 1 28 1-12 1-20 1 3 1 16 1 5 1 10 1-1 1 0 1-39 1-15 1 0 1-17 1 7 1 12 1 19 1-5 1-21 1-21 1 19 1 16 1-4 1-3 1-2 1 17 1 3 1-29 1-9 1-3 1 31 1 17 1 11 1-11 1-23 1 16 1-17 1-9 1 26 1-2 1-17 1 8 1 2V12409H0Z" fill="#A352CC"/><path d="M0 12172l1 10 1-9 1-11 1-3 1-15 1-24 1 7 1 30 1-4 1-10 1 17 1 3 1-10 1-22 1-10 1 12 1-2 1-9 1 1 1 20 1 13 1 3 1-9 1-7 1 9 1-6 1-29 1-11 1 35 1 31 1 0 1 12 1-5 1-43 1 1 1 14 1-3 1 11 1 4 1-26 1-8 1 16 1-15 1-33 1 23 1 36 1 2 1 4 1 1 1-24 1-15 1-2 1 10 1 32 1 29 1 3 1 2 1-29 1-40 1-8 1-6 1 29 1 29 1-17 1-37 1-9 1 20 1 22 1-1 1-10 1 7 1 9 1 17 1 18 1-10 1-25 1-18 1-15 1 6 1 13 1 2 1-7 1 2 1-4 1 16 1 11 1-8 1-12 1-11 1 19 1-2 1-16 1-12 1 32 1 27 1-14 1 3 1 6 1-27 1-32 1-25 1 8 1 19 1 22 1 31 1 25 1-4 1-3 1 2 1-18 1-17 1-19 1-12 1 8 1 1 1-5 1 9 1 6 1 9 1-5 1-8 1 13 1 7 1 3 1 10 1 2 1-2 1-14 1-9 1 6 1-19 1-14 1-6 1-19 1 9 1 46 1 20 1 4 1-12 1-18 1 9 1 19 1 10 1-13 1-9 1 0 1 4 1-16 1-30 1 9 1 22 1-12 1-16 1 18 1 9 1 3 1-5 1-5 1 7 1 8 1 10 1 27 1-2 1-16 1-5 1-21 1 16 1 18 1-22 1-15 1 17 1 10 1-7 1 5 1-4 1-36 1-17 1 15 1-1 1 1 1 14 1-1 1-3 1 3 1 20 1 10 1-13 1 3 1-9 1-15 1 9 1 15 1 12 1-6 1-10 1-12 1-6 1 22 1 29 1-10 1-23 1-4 1 14 1 12 1 8 1 2 1 0 1-37 1-18 1-1 1-9 1 10 1 13 1 15 1 1 1-20 1-22 1 15 1 17 1-1 1-6 1-7 1 7 1-5 1-18 1-8 1 5 1 33 1 18 1 6 1-12 1-23 1 5 1-10 1 1 1 19 1-5 1-12 1 2 1 3V12409H0Z" fill="#3274D9"/><path d="M0 12218l1 7 1-10 1-12 1-6 1-17 1-20 1 8 1 27 1-2 1-9 1 15 1 4 1-6 1-18 1-7 1 12 1-1 1-11 1 1 1 18 1 10 1 2 1-6 1-8 1 1 1-5 1-20 1-2 1 33 1 22 1-4 1 10 1-9 1-31 1 4 1 13 1-6 1 7 1 2 1-27 1-4 1 19 1-11 1-30 1 21 1 33 1 2 1 0 1-1 1-20 1-11 1-1 1 8 1 28 1 26 1 0 1-6 1-29 1-37 1-2 1-1 1 22 1 26 1-17 1-34 1-5 1 14 1 22 1-3 1-7 1 13 1 9 1 12 1 12 1-5 1-18 1-14 1-11 1 1 1 11 1 2 1-14 1-1 1-2 1 11 1 14 1 1 1-7 1-7 1 14 1-3 1-18 1-8 1 27 1 20 1-18 1 3 1 7 1-17 1-21 1-17 1 5 1 11 1 9 1 22 1 20 1 0 1 1 1 0 1-15 1-14 1-11 1-6 1 8 1-2 1-12 1 3 1 12 1 13 1-2 1-4 1 10 1 4 1 0 1 9 1 2 1-1 1-13 1-6 1 8 1-15 1-15 1-8 1-16 1 11 1 37 1 15 1-1 1-13 1-16 1 11 1 19 1 12 1-16 1-13 1 2 1 8 1-11 1-32 1 5 1 21 1-9 1-12 1 13 1 6 1 4 1-1 1-2 1 4 1 5 1 9 1 27 1-1 1-14 1-3 1-18 1 7 1 11 1-19 1-11 1 19 1 11 1-6 1 7 1 1 1-32 1-21 1 6 1-2 1 7 1 16 1 0 1-3 1 0 1 16 1 7 1-12 1 2 1-12 1-11 1 15 1 16 1 8 1-7 1-7 1-7 1-9 1 17 1 24 1-8 1-22 1-1 1 12 1 9 1 5 1-1 1-4 1-29 1-17 1-6 1-8 1 11 1 13 1 15 1 4 1-16 1-18 1 13 1 17 1 3 1-3 1-7 1 4 1-1 1-14 1-8 1 5 1 24 1 15 1 3 1-10 1-21 1 0 1-4 1 4 1 19 1-3 1-8 1-2 1-3V12409H0Z" fill="#E02F44"/><path d="M0 12250l1 6 1-13 1-12 1 1 1-10 1-14 1 11 1 19 1-7 1-5 1 12 1 3 1-1 1-17 1-10 1 11 1-2 1-6 1 7 1 17 1 11 1 3 1-10 1-9 1 5 1-4 1-20 1-4 1 25 1 20 1 2 1 13 1-4 1-28 1 0 1 7 1-4 1 9 1 0 1-24 1-5 1 8 1-13 1-25 1 15 1 25 1 0 1 4 1 9 1-8 1-6 1-3 1 1 1 20 1 22 1 4 1 1 1-22 1-35 1-9 1-3 1 21 1 20 1-13 1-28 1-10 1 11 1 19 1-1 1 0 1 10 1 5 1 9 1 6 1-7 1-10 1-5 1-11 1-4 1 8 1-2 1-10 1 5 1 0 1 12 1 8 1-2 1-5 1-2 1 15 1-1 1-10 1-4 1 18 1 17 1-11 1 1 1 4 1-16 1-19 1-18 1 0 1 10 1 11 1 19 1 18 1 0 1-6 1-5 1-11 1-8 1-5 1-2 1 6 1-3 1-8 1 1 1 8 1 12 1-2 1-4 1 7 1 2 1-1 1 6 1-1 1-2 1-12 1-4 1 6 1-12 1-8 1-2 1-13 1 4 1 28 1 11 1 3 1-5 1-11 1 6 1 9 1 7 1-14 1-12 1 5 1 7 1-9 1-22 1 10 1 19 1-6 1-8 1 6 1 6 1 2 1-7 1-7 1 5 1 7 1 4 1 22 1 2 1-9 1 1 1-11 1 6 1 7 1-17 1-12 1 15 1 11 1-1 1 5 1-3 1-27 1-18 1 5 1 0 1 4 1 13 1 0 1-6 1-1 1 12 1 6 1-9 1 5 1-8 1-8 1 16 1 20 1 1 1-14 1-5 1-3 1-1 1 15 1 16 1-8 1-19 1 0 1 11 1 6 1 0 1-2 1-4 1-17 1-10 1-6 1-9 1 2 1 11 1 10 1 0 1-11 1-15 1 11 1 17 1 7 1 3 1-7 1 1 1-3 1-18 1-12 1 3 1 24 1 14 1 1 1-4 1-9 1 3 1-7 1 0 1 12 1 3 1 0 1-3 1-3V12409H0Z" fill="#FA6400"/><path d="M0 12284l1 3 1-6 1-4 1 6 1-8 1-13 1 10 1 18 1-3 1-6 1 6 1-1 1-1 1-11 1-9 1 5 1 3 1 1 1 7 1 14 1 11 1 1 1-10 1-12 1 0 1-5 1-18 1 0 1 22 1 13 1 1 1 10 1-5 1-18 1 6 1 8 1-5 1 6 1-1 1-23 1-9 1 12 1-7 1-21 1 10 1 20 1 2 1 1 1 6 1-9 1-7 1-4 1 3 1 16 1 14 1 2 1 3 1-10 1-18 1-10 1-6 1 9 1 11 1-9 1-21 1-7 1 7 1 15 1 5 1 2 1 7 1 2 1 6 1 9 1-7 1-11 1-3 1-6 1 1 1 9 1-9 1-19 1 4 1 4 1 13 1 11 1-3 1-3 1-2 1 3 1-2 1-6 1-3 1 15 1 15 1-3 1 2 1 5 1-10 1-13 1-14 1-7 1 7 1 10 1 14 1 13 1-6 1-12 1-3 1-5 1-2 1 0 1-3 1-3 1-2 1-3 1 2 1 8 1 10 1-1 1-5 1 4 1 2 1-3 1 3 1 0 1 1 1-4 1 0 1 6 1-9 1-9 1-6 1-10 1 4 1 26 1 10 1 0 1-9 1-10 1 3 1 6 1 11 1-7 1-12 1 3 1 6 1-8 1-17 1 11 1 17 1-3 1-5 1-2 1 0 1 1 1-8 1-8 1 8 1 4 1 0 1 17 1 3 1-4 1 1 1-7 1 8 1 8 1-14 1-4 1 13 1 4 1-2 1 0 1-3 1-19 1-15 1 4 1-3 1 0 1 15 1 3 1-2 1-1 1 6 1 1 1-7 1 0 1-9 1-5 1 15 1 18 1 2 1-9 1 0 1-3 1-5 1 15 1 10 1-12 1-18 1-1 1 12 1 9 1 2 1 0 1-4 1-16 1-8 1-4 1-6 1 5 1 10 1 9 1 5 1-7 1-18 1 6 1 16 1 4 1-3 1-9 1-2 1-1 1-9 1-6 1 7 1 15 1 4 1-1 1-3 1-1 1 5 1-9 1-4 1 6 1 1 1 2 1-1 1-1V12409H0Z" fill="#5794F2"/><path d="M0 12326l1 1 1-4 1-2 1 2 1-7 1-11 1 11 1 14 1-5 1-1 1 0 1-3 1 4 1-7 1-12 1 4 1 4 1 2 1 7 1 8 1 4 1 3 1-4 1-7 1-2 1-11 1-14 1 2 1 14 1 10 1 4 1 10 1-8 1-16 1 9 1 9 1-5 1 2 1-3 1-14 1-6 1 6 1-5 1-19 1 9 1 21 1 2 1 0 1 7 1-6 1-7 1-7 1-2 1 12 1 9 1 2 1 3 1-4 1-6 1-2 1-5 1 1 1 5 1-2 1-17 1-6 1 3 1 7 1 1 1 1 1 7 1 3 1 9 1 6 1-6 1-2 1 2 1-7 1-4 1-1 1-7 1-12 1 3 1 1 1 9 1 8 1 0 1 3 1-2 1 2 1 1 1-3 1-6 1 6 1 12 1 1 1 2 1 8 1-6 1-15 1-15 1-7 1 10 1 7 1 8 1 7 1-6 1-3 1 4 1-3 1-7 1 0 1 0 1 0 1-2 1-5 1 1 1 10 1 11 1-2 1-8 1 3 1 2 1-3 1 4 1 2 1 0 1-3 1 0 1 3 1-10 1-11 1-4 1-2 1 7 1 18 1 7 1-2 1-12 1-13 1 3 1 3 1 12 1 1 1-8 1-1 1 3 1-7 1-15 1 9 1 14 1 4 1 1 1-1 1 0 1 3 1-6 1-8 1 3 1 0 1-2 1 14 1 3 1-6 1 0 1-7 1 6 1 10 1-10 1-1 1 11 1 4 1-1 1-3 1-6 1-15 1-11 1 4 1 1 1-2 1 9 1 4 1-3 1-4 1 1 1 4 1 0 1 2 1-11 1-4 1 12 1 16 1 6 1-6 1 2 1-7 1-3 1 12 1 10 1-6 1-16 1-2 1 11 1 4 1 1 1 2 1-5 1-11 1-2 1-5 1-9 1 1 1 8 1 6 1 4 1-2 1-17 1 0 1 9 1 0 1 2 1-4 1 1 1 0 1-10 1-7 1 3 1 9 1 4 1 6 1 3 1-1 1 5 1-10 1-6 1 8 1-4 1-2 1 4 1-2V12409H0Z" fill="#E0B400"/><path d="M0 12379l1-2 1-1 1-5 1-1 1-4 1-3 1 7 1 7 1-1 1-5 1-3 1 2 1 2 1-5 1-4 1 1 1 3 1-3 1 3 1 4 1 4 1 2 1-3 1 2 1 4 1-4 1-8 1 0 1 5 1 2 1 2 1 4 1-2 1-6 1 3 1 2 1-3 1 2 1 1 1-5 1-4 1 0 1-5 1-9 1 5 1 10 1 0 1 0 1 4 1 2 1 0 1-3 1-4 1 1 1 2 1 1 1-1 1-5 1-1 1 0 1 1 1-1 1-4 1 0 1 1 1-3 1-3 1 2 1 1 1 2 1 5 1 2 1 3 1 5 1-4 1-5 1 5 1-2 1-2 1 3 1-3 1-4 1 1 1-4 1-1 1 5 1 5 1 3 1-2 1 1 1 1 1-3 1 0 1 0 1 2 1 0 1-2 1 2 1-4 1-5 1-4 1 3 1 8 1 2 1 4 1 2 1-4 1-1 1 3 1 1 1-9 1-4 1 5 1 3 1-1 1-5 1 3 1 6 1 4 1-1 1-5 1-1 1 1 1 1 1 4 1 0 1-2 1-5 1-5 1-1 1-3 1-1 1 1 1 1 1 2 1 9 1 5 1-1 1-4 1-9 1 0 1 5 1 4 1-3 1-3 1 4 1 3 1-7 1-10 1 0 1 6 1 0 1 0 1 1 1 2 1 5 1-2 1-2 1 1 1 1 1 2 1 3 1 5 1-4 1-4 1-3 1-2 1 2 1-3 1 6 1 14 1 1 1-6 1-6 1-3 1-8 1-3 1 4 1-3 1 1 1 6 1 1 1 1 1-3 1-1 1-1 1-2 1 1 1-2 1 1 1 3 1 6 1 4 1-2 1 0 1-4 1 0 1 5 1 4 1-3 1-6 1 3 1 6 1 2 1-3 1-1 1 0 1-5 1 0 1-2 1-2 1 0 1-5 1 4 1 1 1-4 1-2 1 5 1 1 1-4 1-1 1-2 1-1 1-1 1-6 1-1 1 4 1 3 1 2 1 2 1-1 1-1 1 3 1 1 1 3 1 3 1-3 1 0 1 4 1 0V12409H0Z" fill="#56A64B"/></g></svg><span id="t172" style="position:absolute;left:420.92px;top:1231.70px;height:18px;line-height:18px;font-size:12.3px;white-space:pre;color:#24292e;letter-spacing:0.317px;transform:translateX(-100%);">0 B/s</span><span id="t173" style="position:absolute;left:420.67px;top:1184.10px;height:18px;line-height:18px;font-size:12.3px;white-space:pre;color:#24292e;letter-spacing:0.065px;transform:translateX(-100%);">10 MB/s</span><span id="t174" style="position:absolute;left:421.04px;top:1136.50px;height:18px;line-height:18px;font-size:12.3px;white-space:pre;color:#24292e;letter-spacing:0.440px;transform:translateX(-100%);">20 MB/s</span><span id="t175" style="position:absolute;left:426.82px;top:1246.90px;height:18px;line-height:18px;font-size:12.3px;white-space:pre;color:#24292e;letter-spacing:-0.008px;transform:translateX(-50%);">13:45</span><span id="t176" style="position:absolute;left:490.01px;top:1246.90px;height:18px;line-height:18px;font-size:12.3px;white-space:pre;color:#24292e;letter-spacing:0.117px;transform:translateX(-50%);">14:00</span><span id="t177" style="position:absolute;left:552.85px;top:1246.90px;height:18px;line-height:18px;font-size:12.3px;white-space:pre;color:#24292e;letter-spacing:-0.450px;transform:translateX(-50%);">14:15</span><span id="t178" style="position:absolute;left:616.26px;top:1246.90px;height:18px;line-height:18px;font-size:12.3px;white-space:pre;color:#24292e;letter-spacing:0.117px;transform:translateX(-50%);">14:30</span><div class="mk" style="left:373.2px;top:1274.15px;background:#56A64B"></div><span id="t179" style="position:absolute;left:395.25px;top:1266.75px;height:18px;line-height:18px;font-size:12.3px;white-space:pre;color:#24292e;letter-spacing:0.593px;">ruler-querier-78f54b4755-28cmg</span><div class="mk" style="left:373.2px;top:1297.65px;background:#E0B400"></div><span id="t180" style="position:absolute;left:395.25px;top:1290.25px;height:18px;line-height:18px;font-size:12.3px;white-space:pre;color:#24292e;letter-spacing:0.585px;">ruler-querier-78f54b4755-4dv7m</span><div class="mk" style="left:373.2px;top:1321.15px;background:#5794F2"></div><span id="t181" style="position:absolute;left:395.25px;top:1313.75px;height:18px;line-height:18px;font-size:12.3px;white-space:pre;color:#24292e;letter-spacing:0.581px;">ruler-querier-78f54b4755-68c7p</span><div class="panel" style="left:704px;top:1086px"></div><span id="t182" style="position:absolute;left:713.20px;top:1091.60px;height:22px;line-height:22px;font-size:14.5px;white-space:pre;color:#24292e;-webkit-text-stroke:0.3px #24292e;letter-spacing:0.464px;">Inflight requests (per pod)</span><svg style="left:0;top:0" width="1400" height="1400" viewBox="0 0 1400 1400"><g stroke="#e9eaeb" stroke-width="1" fill="none" shape-rendering="crispEdges"><path d="M736.5 1135.25V1294.50"/><path d="M808.5 1135.25V1294.50"/><path d="M880.5 1135.25V1294.50"/><path d="M952.5 1135.25V1294.50"/><path d="M735.50 1290.5H1023.50"/><path d="M735.50 1238.5H1023.50"/><path d="M735.50 1186.5H1023.50"/><path d="M735.50 1135.5H1023.50"/></g><g transform="translate(735.5 0) scale(1.20000 0.1)"><path d="M0 12865h1l1-20l1 10l1-20l1 10h1l1-10l1 20l1 10l1-10l1-20h1l1 10l1-10l1 10l1 10l1-20l1 30l1-10l1-10l1-30l1 30h1l1-20l1 20l1-20l1 20l1 10l1-10l1-10l1 10h1l1-20l1 20l1-10l1-20l1 40l1-20l1 10l1 20l1-20l1 10l1-30l1 10l1 10l1-10h1l1-10l1 10l1-10h2l1 10l1 10h1l1-10l1 10l1-20l1 10l1 20l1 10l1-40l1 30l1-10l1 10l1-10l1 10h1l1-20l1 10h2l1-20l1 10l1 10l1-10h1l1 30l1-30l1 10l1-10l1 20h1l1-10h1l1 10l1-20h1l1 10h1l1-10h1l1 10h1l1-20l1 30l1-30l1 10l1 20l1-10l1-10l1 10h3l1-10l1 10l1-20l1 30l1-20l1-30l1 30l1-10l1 30l1-20l1-20l1 30l1 10l1-10l1 10l1-10l1 10l1-20l1 20l1 10l1-40l1 30h4l1-20l1 10h1l1-10h1l1 10l1-10l1 20l1-20l1-10h1l1 10l1 10h1l1-50l1 50l1-20l1-10l1 30l1-20l1 40l1-20l1-10l1 20l1-30l1 10l1 20h2l1 10l1-20l1 10l1 10l1-30h1l1 10l1-30h1l1 40l1-10l1-10l1 20l1-40l1 20l1-20l1 30l1 10l1-20h1l1 30l1-10l1-20l1 20l1-20h1l1-30l1 40l1 10h4l1-20l1-20l1-10l1 40l1-10l1 20h1l1-30l1-10l1 40l1-10h2l1-10h3l1 30l1-20h1l1-40l1 50l1-50l1 50l1-10l1-50l1 50l1-10l1 10h1l1-50l1 40h1l1 30l1-20l1 10h1l1-20h9V12905H0Z" fill="#56A64B" fill-opacity="0.014"/><path d="M0 12865h1l1-20l1 10l1-20l1 10h1l1-10l1 20l1 10l1-10l1-20h1l1 10l1-10l1 10l1 10l1-20l1 30l1-10l1-10l1-30l1 30h1l1-20l1 20l1-20l1 20l1 10l1-10l1-10l1 10h1l1-20l1 20l1-10l1-20l1 40l1-20l1 10l1 20l1-20l1 10l1-30l1 10l1 10l1-10h1l1-10l1 10l1-10h2l1 10l1 10h1l1-10l1 10l1-20l1 10l1 20l1 10l1-40l1 30l1-10l1 10l1-10l1 10h1l1-20l1 10h2l1-20l1 10l1 10l1-10h1l1 30l1-30l1 10l1-10l1 20h1l1-10h1l1 10l1-20h1l1 10h1l1-10h1l1 10h1l1-20l1 30l1-30l1 10l1 20l1-10l1-10l1 10h3l1-10l1 10l1-20l1 30l1-20l1-30l1 30l1-10l1 30l1-20l1-20l1 30l1 10l1-10l1 10l1-10l1 10l1-20l1 20l1 10l1-40l1 30h4l1-20l1 10h1l1-10h1l1 10l1-10l1 20l1-20l1-10h1l1 10l1 10h1l1-50l1 50l1-20l1-10l1 30l1-20l1 40l1-20l1-10l1 20l1-30l1 10l1 20h2l1 10l1-20l1 10l1 10l1-30h1l1 10l1-30h1l1 40l1-10l1-10l1 20l1-40l1 20l1-20l1 30l1 10l1-20h1l1 30l1-10l1-20l1 20l1-20h1l1-30l1 40l1 10h4l1-20l1-20l1-10l1 40l1-10l1 20h1l1-30l1-10l1 40l1-10h2l1-10h3l1 30l1-20h1l1-40l1 50l1-50l1 50l1-10l1-50l1 50l1-10l1 10h1l1-50l1 40h1l1 30l1-20l1 10h1l1-20h9" fill="none" stroke="#56A64B" stroke-width="1.0" stroke-linejoin="round" vector-effect="non-scaling-stroke"/></g><g transform="translate(735.5 0) scale(1.20000 0.1)"><path d="M0 12695h2l1-100l1-310l1 410l1-310l1-100l1 310h1l1 210l1-520l1-100l1 200l1-200l1 410h1l1 210l1-110l1-100l1-210l1-410l1 410l1 110l1-520l1 520l1-420l1 420l1 200l1-310l1-200l1 100h2l1 520l1-520l1 210l1 200l1-310h1l1 110l1-110l1 210l1-310h1l1-100l1 100l1-100h1l1 200h1l1-410l1 410h1l1 420l1-210l1-210l1 110h1l1-210l1 410l1-100l1-520l1 520h4l1-100l1-210l1 100l1-200l1 200h2l1 110l1-110l1 110l1 200l1-310h1l1 110l1 100l1 210l1-520l1 210l1 310l1-420l1 210l1-210l1 110l1-210l1 210l1-110l1 110l1-210l1 410l1-410l1 100l1 210l1-100l1-210l1 210l1-110l1 210l1-210h2l1-100l1 210l1-210l1-210l1 110l1 100l1 210l1-210l1-210l1 420l1 200h1l1-100l1 100l1-100l1-210l1 210l1 100l1-620l1 420l1 200l1-200l1 200l1-100h1l1-210l1 210l1-100h1l1-210h1l1 410l1-410h3l1 310l1-100l1-210l1 100l1-310l1 420l1 100l1-520l1 520l1-100l1-210l1 410l1-310l1-100l1 210h2l1 310l1-310l1 200h1l1-720l1 410l1 210l1-310l1-210l1 420h3l1 100l1-210l1-310l1 520h1l1-310l1 100l1 310l1 110l1-420l1 210l1-100l1-310l1-620l1 820l1 310l1-100l1-210l1 210l1 100l1 110l1-520l1-310l1 410l1 110l1 100l1-100l1-420l1 420l1 200l1-310l1 210l1-100l1-110l1 110l1-110l1 110l1 100l1 210l1-420l1 210h1l1-720l1 720l1-210l1-310l1 520l1-100h2l1-930l1 510l1 520l1 210l1-420l1 210l1-100l1-520h9V12905H0Z" fill="#E0B400" fill-opacity="0.014"/><path d="M0 12695h2l1-100l1-310l1 410l1-310l1-100l1 310h1l1 210l1-520l1-100l1 200l1-200l1 410h1l1 210l1-110l1-100l1-210l1-410l1 410l1 110l1-520l1 520l1-420l1 420l1 200l1-310l1-200l1 100h2l1 520l1-520l1 210l1 200l1-310h1l1 110l1-110l1 210l1-310h1l1-100l1 100l1-100h1l1 200h1l1-410l1 410h1l1 420l1-210l1-210l1 110h1l1-210l1 410l1-100l1-520l1 520h4l1-100l1-210l1 100l1-200l1 200h2l1 110l1-110l1 110l1 200l1-310h1l1 110l1 100l1 210l1-520l1 210l1 310l1-420l1 210l1-210l1 110l1-210l1 210l1-110l1 110l1-210l1 410l1-410l1 100l1 210l1-100l1-210l1 210l1-110l1 210l1-210h2l1-100l1 210l1-210l1-210l1 110l1 100l1 210l1-210l1-210l1 420l1 200h1l1-100l1 100l1-100l1-210l1 210l1 100l1-620l1 420l1 200l1-200l1 200l1-100h1l1-210l1 210l1-100h1l1-210h1l1 410l1-410h3l1 310l1-100l1-210l1 100l1-310l1 420l1 100l1-520l1 520l1-100l1-210l1 410l1-310l1-100l1 210h2l1 310l1-310l1 200h1l1-720l1 410l1 210l1-310l1-210l1 420h3l1 100l1-210l1-310l1 520h1l1-310l1 100l1 310l1 110l1-420l1 210l1-100l1-310l1-620l1 820l1 310l1-100l1-210l1 210l1 100l1 110l1-520l1-310l1 410l1 110l1 100l1-100l1-420l1 420l1 200l1-310l1 210l1-100l1-110l1 110l1-110l1 110l1 100l1 210l1-420l1 210h1l1-720l1 720l1-210l1-310l1 520l1-100h2l1-930l1 510l1 520l1 210l1-420l1 210l1-100l1-520h9" fill="none" stroke="#E0B400" stroke-width="1.0" stroke-linejoin="round" vector-effect="non-scaling-stroke"/></g></svg><span id="t183" style="position:absolute;left:729.66px;top:1281.30px;height:18px;line-height:18px;font-size:12.3px;white-space:pre;color:#24292e;letter-spacing:0.056px;transform:translateX(-100%);">0</span><span id="t184" style="position:absolute;left:729.26px;top:1229.63px;height:18px;line-height:18px;font-size:12.3px;white-space:pre;color:#24292e;letter-spacing:-0.344px;transform:translateX(-100%);">5</span><span id="t185" style="position:absolute;left:729.15px;top:1177.97px;height:18px;line-height:18px;font-size:12.3px;white-space:pre;color:#24292e;letter-spacing:-0.450px;transform:translateX(-100%);">10</span><span id="t186" style="position:absolute;left:729.15px;top:1126.30px;height:18px;line-height:18px;font-size:12.3px;white-space:pre;color:#24292e;letter-spacing:-0.450px;transform:translateX(-100%);">15</span><span id="t187" style="position:absolute;left:735.95px;top:1296.10px;height:18px;line-height:18px;font-size:12.3px;white-space:pre;color:#24292e;letter-spacing:-0.008px;transform:translateX(-50%);">13:45</span><span id="t188" style="position:absolute;left:808.01px;top:1296.10px;height:18px;line-height:18px;font-size:12.3px;white-space:pre;color:#24292e;letter-spacing:0.117px;transform:translateX(-50%);">14:00</span><span id="t189" style="position:absolute;left:879.73px;top:1296.10px;height:18px;line-height:18px;font-size:12.3px;white-space:pre;color:#24292e;letter-spacing:-0.450px;transform:translateX(-50%);">14:15</span><span id="t190" style="position:absolute;left:952.01px;top:1296.10px;height:18px;line-height:18px;font-size:12.3px;white-space:pre;color:#24292e;letter-spacing:0.117px;transform:translateX(-50%);">14:30</span><div class="mk" style="left:717.2px;top:1323.70px;background:#56A64B"></div><span id="t191" style="position:absolute;left:739.25px;top:1316.00px;height:18px;line-height:18px;font-size:12.3px;white-space:pre;color:#24292e;letter-spacing:0.086px;">avg</span><div class="mk" style="left:770.2px;top:1323.70px;background:#E0B400"></div><span id="t192" style="position:absolute;left:791.75px;top:1316.00px;height:18px;line-height:18px;font-size:12.3px;white-space:pre;color:#24292e;letter-spacing:0.474px;">highest</span><div class="panel" style="left:1048px;top:1086px"></div><span id="t193" style="position:absolute;left:1057.20px;top:1091.60px;height:22px;line-height:22px;font-size:14.5px;white-space:pre;color:#24292e;-webkit-text-stroke:0.3px #24292e;letter-spacing:0.389px;">Ingress TCP connections (per pod)</span><svg style="left:1311.00px;top:1094.80px" width="16" height="16" viewBox="0 0 24 24" fill="#50555a"><path d="M12,2A10,10,0,1,0,22,12,10.011,10.011,0,0,0,12,2Zm0,18a8,8,0,1,1,8-8A8.009,8.009,0,0,1,12,20Zm0-8.500a1,1,0,0,0-1,1v3a1,1,0,0,0,2,0v-3A1,1,0,0,0,12,11.500Zm0-4a1.250,1.250,0,1,0,1.250,1.250A1.250,1.250,0,0,0,12,7.500Z"/></svg><svg style="left:0;top:0" width="1400" height="1400" viewBox="0 0 1400 1400"><g stroke="#e9eaeb" stroke-width="1" fill="none" shape-rendering="crispEdges"><path d="M1075.5 1135.25V1294.50"/><path d="M1148.5 1135.25V1294.50"/><path d="M1222.5 1135.25V1294.50"/><path d="M1295.5 1135.25V1294.50"/><path d="M1074.50 1290.5H1367.50"/><path d="M1074.50 1255.5H1367.50"/><path d="M1074.50 1219.5H1367.50"/><path d="M1074.50 1184.5H1367.50"/><path d="M1074.50 1149.5H1367.50"/></g><g transform="translate(1074.5 0) scale(1.22083 0.1)"><path d="M0 11675h4l1 20l1 30l1 40l1 30l1 50l1 30l1-50l1-10l1-50l1-60l1 10l1-20l1-20l1-20h3l1-10l1-10h1l1 20l1 90l1 80h1l1-10l1 10l1-10h4l1-10h2l1-30l1-80l1-30l1-10h4l1 20h193V12905H0Z" fill="#56A64B" fill-opacity="0.014"/><path d="M0 11675h4l1 20l1 30l1 40l1 30l1 50l1 30l1-50l1-10l1-50l1-60l1 10l1-20l1-20l1-20h3l1-10l1-10h1l1 20l1 90l1 80h1l1-10l1 10l1-10h4l1-10h2l1-30l1-80l1-30l1-10h4l1 20h193" fill="none" stroke="#56A64B" stroke-width="1.0" stroke-linejoin="round" vector-effect="non-scaling-stroke"/></g><g transform="translate(1074.5 0) scale(1.22083 0.1)"><path d="M0 11675h4l1-180h9l1 180h3l1-180h8l1 180h13l1-180h5l1 180h192V12905H0Z" fill="#E0B400" fill-opacity="0.014"/><path d="M0 11675h4l1-180h9l1 180h3l1-180h8l1 180h13l1-180h5l1 180h192" fill="none" stroke="#E0B400" stroke-width="1.0" stroke-linejoin="round" vector-effect="non-scaling-stroke"/></g><g transform="translate(1074.5 0) scale(1.22083 0.1)"><path d="M0 12905h240" fill="none" stroke="#5794F2" stroke-width="1.0" stroke-linejoin="round" vector-effect="non-scaling-stroke"/></g></svg><span id="t194" style="position:absolute;left:1068.66px;top:1281.30px;height:18px;line-height:18px;font-size:12.3px;white-space:pre;color:#24292e;letter-spacing:0.056px;transform:translateX(-100%);">0</span><span id="t195" style="position:absolute;left:1068.56px;top:1246.11px;height:18px;line-height:18px;font-size:12.3px;white-space:pre;color:#24292e;letter-spacing:-0.044px;transform:translateX(-100%);">2</span><span id="t196" style="position:absolute;left:1068.96px;top:1210.92px;height:18px;line-height:18px;font-size:12.3px;white-space:pre;color:#24292e;letter-spacing:0.356px;transform:translateX(-100%);">4</span><span id="t197" style="position:absolute;left:1068.76px;top:1175.74px;height:18px;line-height:18px;font-size:12.3px;white-space:pre;color:#24292e;letter-spacing:0.156px;transform:translateX(-100%);">6</span><span id="t198" style="position:absolute;left:1068.76px;top:1140.55px;height:18px;line-height:18px;font-size:12.3px;white-space:pre;color:#24292e;letter-spacing:0.156px;transform:translateX(-100%);">8</span><span id="t199" style="position:absolute;left:1074.97px;top:1296.10px;height:18px;line-height:18px;font-size:12.3px;white-space:pre;color:#24292e;letter-spacing:-0.008px;transform:translateX(-50%);">13:45</span><span id="t200" style="position:absolute;left:1148.28px;top:1296.10px;height:18px;line-height:18px;font-size:12.3px;white-space:pre;color:#24292e;letter-spacing:0.117px;transform:translateX(-50%);">14:00</span><span id="t201" style="position:absolute;left:1221.25px;top:1296.10px;height:18px;line-height:18px;font-size:12.3px;white-space:pre;color:#24292e;letter-spacing:-0.450px;transform:translateX(-50%);">14:15</span><span id="t202" style="position:absolute;left:1294.78px;top:1296.10px;height:18px;line-height:18px;font-size:12.3px;white-space:pre;color:#24292e;letter-spacing:0.117px;transform:translateX(-50%);">14:30</span><div class="mk" style="left:1061.2px;top:1323.70px;background:#56A64B"></div><span id="t203" style="position:absolute;left:1083.25px;top:1316.00px;height:18px;line-height:18px;font-size:12.3px;white-space:pre;color:#24292e;letter-spacing:0.086px;">avg</span><div class="mk" style="left:1114.2px;top:1323.70px;background:#E0B400"></div><span id="t204" style="position:absolute;left:1135.75px;top:1316.00px;height:18px;line-height:18px;font-size:12.3px;white-space:pre;color:#24292e;letter-spacing:0.474px;">highest</span><div class="mk" style="left:1188.0px;top:1323.70px;background:#5794F2"></div><span id="t205" style="position:absolute;left:1210.75px;top:1316.00px;height:18px;line-height:18px;font-size:12.3px;white-space:pre;color:#24292e;letter-spacing:0.348px;">limit</span></div></body></html>
